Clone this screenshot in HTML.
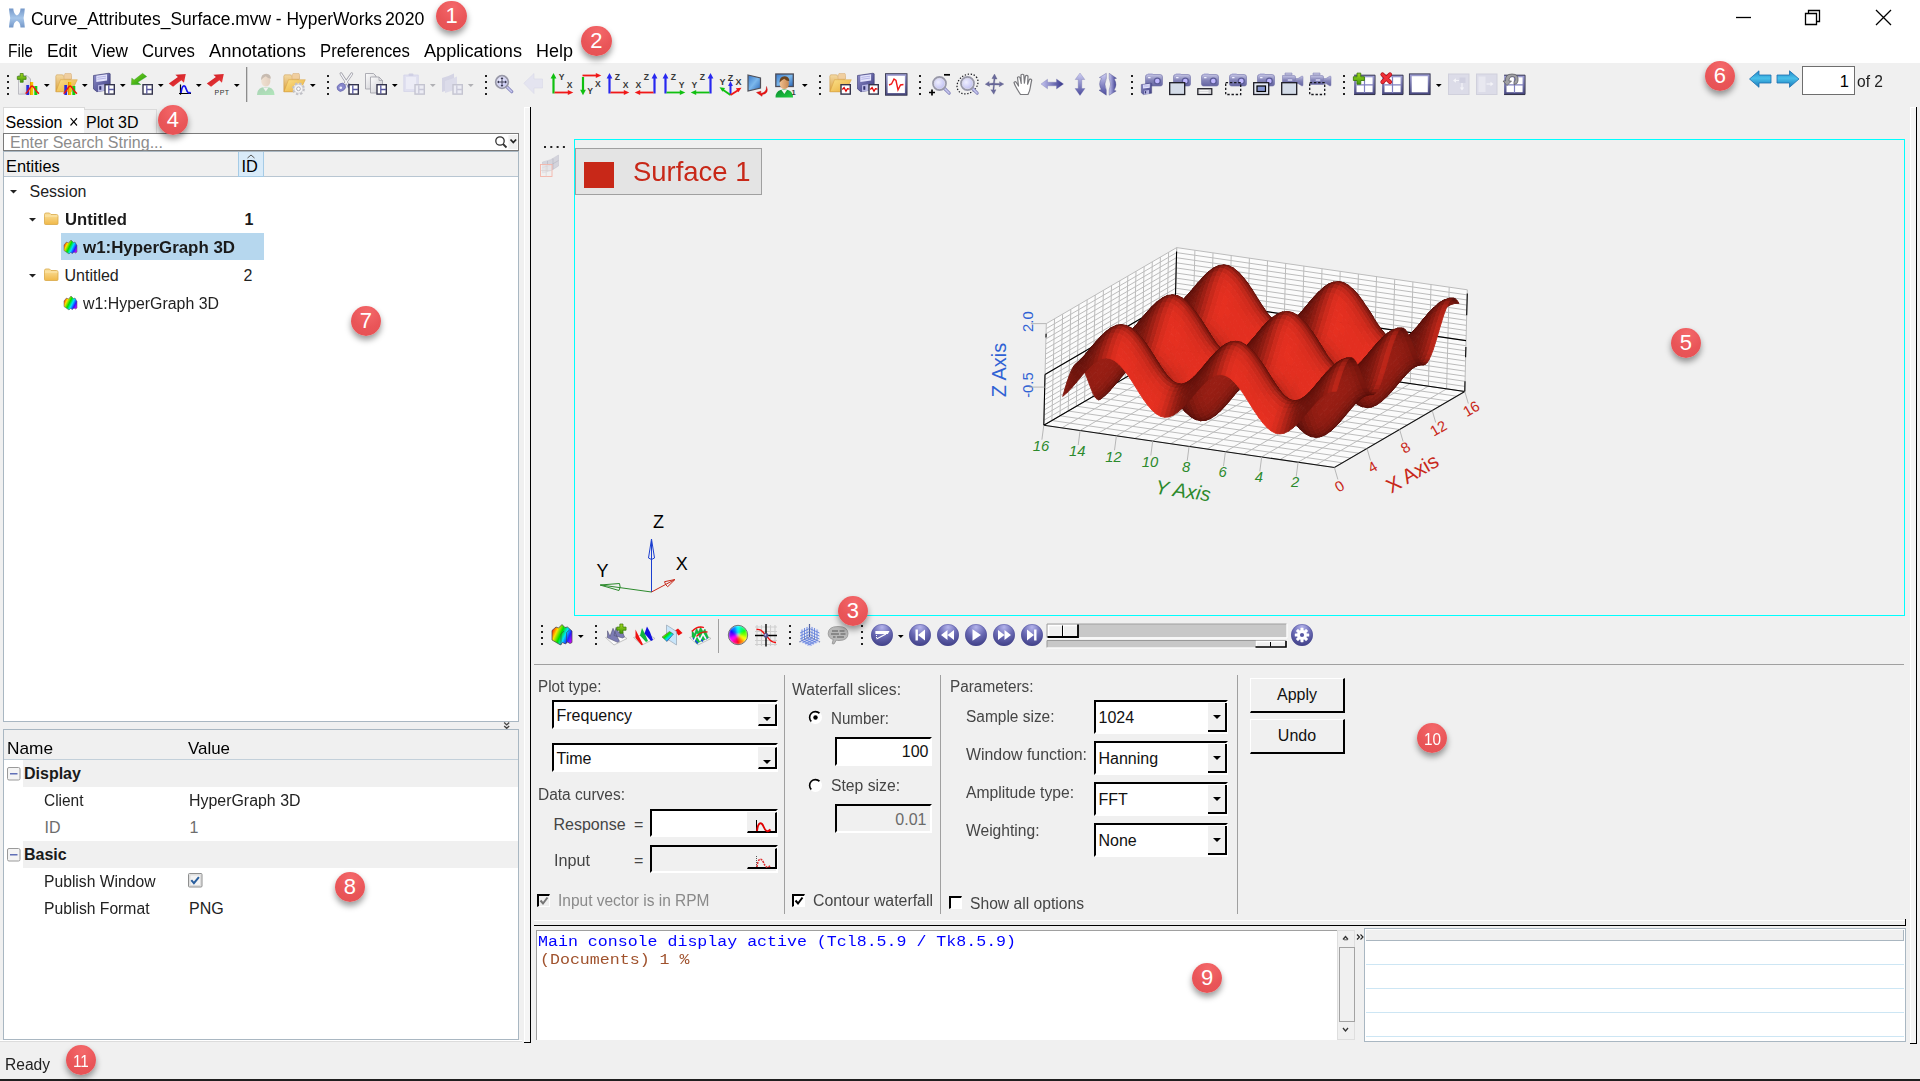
<!DOCTYPE html>
<html><head><meta charset="utf-8"><title>HyperWorks 2020</title>
<style>
html,body{margin:0;padding:0}
body{width:1920px;height:1081px;position:relative;overflow:hidden;background:#f0f0f0;font-family:"Liberation Sans",sans-serif;color:#000}
.t{position:absolute;white-space:pre;transform-origin:0 50%;}
.r{position:absolute;box-sizing:border-box}
svg{position:absolute;overflow:visible}
.badge{position:absolute;width:30.4px;height:30.4px;border-radius:50%;background:radial-gradient(circle at 55% 20%,#f4686a 0%,#e95558 55%,#e65053 100%);box-shadow:0 4px 6px rgba(0,0,0,.4);color:#fff;text-align:center;font-size:22px;line-height:30.4px}
.badge span{display:inline-block}
.sunk{position:absolute;box-sizing:border-box;border:2px solid;border-color:#000 #fff #fff #000;background:#fff}
.rais{position:absolute;box-sizing:border-box;border:1px solid;border-color:#fff #000 #000 #fff;background:#f0f0f0}
</style></head>
<body>
<div class="r" style="left:0px;top:0px;width:1920px;height:63px;background:#fff"></div>
<span class="t" style="left:31.00px;top:10.26px;font-size:18px;line-height:18px;transform:scaleX(0.9675)">Curve_Attributes_Surface.mvw - HyperWorks</span>
<span class="t" style="left:385.00px;top:10.26px;font-size:18px;line-height:18px;transform:scaleX(0.9864)">2020</span>
<span class="t" style="left:8.00px;top:43.00px;font-size:17.6px;line-height:17.6px;transform:scaleX(0.8815)">File</span>
<span class="t" style="left:47.00px;top:43.00px;font-size:17.6px;line-height:17.6px;transform:scaleX(0.9892)">Edit</span>
<span class="t" style="left:91.00px;top:43.00px;font-size:17.6px;line-height:17.6px;transform:scaleX(0.9780)">View</span>
<span class="t" style="left:142.00px;top:43.00px;font-size:17.6px;line-height:17.6px;transform:scaleX(0.9507)">Curves</span>
<span class="t" style="left:209.00px;top:43.00px;font-size:17.6px;line-height:17.6px;transform:scaleX(1.0434)">Annotations</span>
<span class="t" style="left:320.00px;top:43.00px;font-size:17.6px;line-height:17.6px;transform:scaleX(0.9484)">Preferences</span>
<span class="t" style="left:424.00px;top:43.00px;font-size:17.6px;line-height:17.6px;transform:scaleX(1.0326)">Applications</span>
<span class="t" style="left:536.00px;top:43.00px;font-size:17.6px;line-height:17.6px;transform:scaleX(1.0221)">Help</span>
<svg style="left:5px;top:5px" width="24" height="26" viewBox="5 5 24 26"><defs><linearGradient id="hl" x1="0" y1="0" x2="0" y2="1"><stop offset="0" stop-color="#7497c8"/><stop offset=".5" stop-color="#a6c6ea"/><stop offset="1" stop-color="#7497c8"/></linearGradient><filter id="hb" x="-20%" y="-20%" width="140%" height="140%"><feGaussianBlur stdDeviation=".55"/></filter></defs><path filter="url(#hb)" d="M9 8.600h4.300q.3 5.500 3.600 6.800 3.300-1.300 3.600-6.800h4.300q-.4 5.200-1.200 9.400.8 4.300 1.200 9.500h-4.300q-.3-5.500-3.600-6.800-3.300 1.300-3.600 6.800h-4.300q.4-5.200 1.200-9.500-.8-4.200-1.200-9.400z" fill="url(#hl)"/></svg>
<svg style="left:1730px;top:5px" width="170" height="26" viewBox="1730 5 170 26"><g fill="none" stroke="#000" stroke-width="1.3"><path d="M1736 17.5H1751"/><path d="M1805.5 13.5H1816.5V24.5H1805.5Z"/><path d="M1808.5 13.5V10.5H1819.5V21.5H1816.5"/><path d="M1876 10L1891 25M1891 10L1876 25"/></g></svg>
<div class="r" style="left:3px;top:107px;width:82px;height:27px;background:#fff;border:1px solid #dadada;border-bottom:none"></div>
<div class="r" style="left:84px;top:109px;width:73px;height:24px;background:#f0f0f0;border:1px solid #dadada;border-left:none;border-bottom:none"></div>
<span class="t" style="left:5.50px;top:114.66px;font-size:16px;line-height:16px">Session</span>
<span class="t" style="left:68.50px;top:113.26px;font-size:18px;line-height:18px;transform:scaleX(0.9038)">×</span>
<span class="t" style="left:86.00px;top:114.66px;font-size:16px;line-height:16px">Plot 3D</span>
<div class="r" style="left:3px;top:133px;width:516px;height:18px;background:#fff;border:1px solid #7a7a7a"></div>
<span class="t" style="left:10.00px;top:134.96px;font-size:16px;line-height:16px;color:#8c8c8c">Enter Search String...</span>
<svg style="left:494px;top:135px" width="24" height="14" viewBox="0 0 24 14"><rect x="14.5" y="0" width="9" height="14" fill="#f0f0f0"/><circle cx="6" cy="6" r="4.2" fill="none" stroke="#333" stroke-width="1.3"/><path d="M9 9l3.5 3.5" stroke="#333" stroke-width="1.8"/><path d="M16.5 4.5l2.8 3 2.8-3" fill="none" stroke="#222" stroke-width="1.8"/></svg>
<div class="r" style="left:3px;top:151px;width:516px;height:571px;background:#fff;border:1px solid #a9b7c2"></div>
<div class="r" style="left:4px;top:152px;width:514px;height:25px;background:#f0f0f0;border-bottom:1px solid #b8c6d2"></div>
<div class="r" style="left:238px;top:152px;width:26px;height:25px;background:#d9ebf9;border:1px solid #a5cbe6;border-top:none"></div>
<span class="t" style="left:6.00px;top:158.32px;font-size:16.4px;line-height:16.4px">Entities</span>
<span class="t" style="left:241.50px;top:158.32px;font-size:16.4px;line-height:16.4px">ID</span>
<svg style="left:246px;top:154px" width="10" height="5"><path d="M1.5 4L5 1L8.5 4" fill="none" stroke="#555" stroke-width="1"/></svg>
<svg style="left:9.5px;top:189.5px" width="7" height="4"><path d="M0 0H7L3.5 3.6Z" fill="#222"/></svg>
<span class="t" style="left:29.50px;top:183.66px;font-size:16px;line-height:16px;color:#222">Session</span>
<svg style="left:28.5px;top:217.5px" width="7" height="4"><path d="M0 0H7L3.5 3.6Z" fill="#222"/></svg>
<span class="t" style="left:65.00px;top:211.56px;font-size:16px;line-height:16px;color:#1a1a1a;font-weight:bold;transform:scaleX(1.0412)">Untitled</span>
<span class="t" style="left:244.50px;top:211.56px;font-size:16px;line-height:16px;color:#1a1a1a;font-weight:bold">1</span>
<div class="r" style="left:61px;top:233px;width:203px;height:27px;background:#b6d7ee"></div>
<span class="t" style="left:83.00px;top:239.56px;font-size:16px;line-height:16px;color:#1a1a1a;font-weight:bold;transform:scaleX(1.0553)">w1:HyperGraph 3D</span>
<svg style="left:28.5px;top:273.5px" width="7" height="4"><path d="M0 0H7L3.5 3.6Z" fill="#222"/></svg>
<span class="t" style="left:64.50px;top:267.66px;font-size:16px;line-height:16px;color:#222">Untitled</span>
<span class="t" style="left:243.50px;top:267.66px;font-size:16px;line-height:16px;color:#222">2</span>
<span class="t" style="left:83.00px;top:295.66px;font-size:16px;line-height:16px;color:#222;transform:scaleX(0.9931)">w1:HyperGraph 3D</span>
<svg style="left:0;top:0" width="600" height="400" viewBox="0 0 600 400"><defs><linearGradient id="gTF" x1="0" y1="0" x2="0" y2="1"><stop offset="0" stop-color="#fbe2a0"/><stop offset="1" stop-color="#f0b848"/></linearGradient><linearGradient id="gRain3" gradientUnits="userSpaceOnUse" x1="0" y1="4" x2="14" y2="11"><stop offset="0" stop-color="#ff0000"/><stop offset=".22" stop-color="#ffe000"/><stop offset=".42" stop-color="#00e000"/><stop offset=".6" stop-color="#00e0ff"/><stop offset=".78" stop-color="#2020ff"/><stop offset="1" stop-color="#ff00ff"/></linearGradient></defs><g transform="translate(44 212.5)"><path d="M.5 2q0-1.500 1.500-1.500h3.500l1.500 1.500h5.500q1.500 0 1.500 1.500v7.500q0 1-1 1h-11.500q-1 0-1-1z" fill="url(#gTF)" stroke="#d8a848" stroke-width=".8"/><path d="M.8 3.500h12.800" stroke="#fbe7b0" stroke-width="1"/></g><g transform="translate(44 268.5)"><path d="M.5 2q0-1.500 1.500-1.500h3.500l1.500 1.500h5.500q1.500 0 1.500 1.500v7.500q0 1-1 1h-11.500q-1 0-1-1z" fill="url(#gTF)" stroke="#d8a848" stroke-width=".8"/><path d="M.8 3.500h12.800" stroke="#fbe7b0" stroke-width="1"/></g><g transform="translate(63.5 240)"><path d="M.5 5l2.500-3 2 1 2.500-3 2.500 2.500 1.500-.5 2 3.500v6.500l-1.500 1-1.500-1-1.500 1.500-2-1-1.500 1.500-5-3.500z" fill="url(#gRain3)" stroke="#505058" stroke-width=".5"/></g><g transform="translate(63.5 296)"><path d="M.5 5l2.500-3 2 1 2.500-3 2.500 2.500 1.500-.5 2 3.500v6.500l-1.500 1-1.500-1-1.500 1.500-2-1-1.500 1.500-5-3.500z" fill="url(#gRain3)" stroke="#505058" stroke-width=".5"/></g></svg>
<svg style="left:503px;top:721px" width="8" height="9"><path d="M1.200 1.600l2.500 2.300 2.500-2.300M1.200 4.900l2.500 2.300 2.500-2.300" fill="none" stroke="#444" stroke-width="1.400"/></svg>
<div class="r" style="left:3px;top:729px;width:516px;height:311px;background:#fff;border:1px solid #a9b7c2"></div>
<div class="r" style="left:0px;top:1040px;width:522px;height:1px;background:#fff"></div>
<div class="r" style="left:0px;top:1041px;width:522px;height:1px;background:#dcdcdc"></div>
<div class="r" style="left:4px;top:730px;width:514px;height:30px;background:#f0f0f0;border-bottom:1px solid #c3d0da"></div>
<span class="t" style="left:6.50px;top:740.21px;font-size:17px;line-height:17px;transform:scaleX(1.0144)">Name</span>
<span class="t" style="left:187.50px;top:740.21px;font-size:17px;line-height:17px;transform:scaleX(0.9948)">Value</span>
<div class="r" style="left:23px;top:760px;width:495px;height:27px;background:#f0f0f0"></div>
<div class="r" style="left:23px;top:841px;width:495px;height:27px;background:#f0f0f0"></div>
<svg style="left:7px;top:766.5px" width="14" height="14"><rect x="0.5" y="0.5" width="12.5" height="12.5" rx="1.5" fill="#f4f4f4" stroke="#9a9a9a"/><path d="M3 6.800H10.500" stroke="#3c4fa8" stroke-width="1.200"/></svg>
<svg style="left:7px;top:847.5px" width="14" height="14"><rect x="0.5" y="0.5" width="12.5" height="12.5" rx="1.5" fill="#f4f4f4" stroke="#9a9a9a"/><path d="M3 6.800H10.500" stroke="#3c4fa8" stroke-width="1.200"/></svg>
<span class="t" style="left:24.00px;top:765.76px;font-size:16px;line-height:16px;color:#1a1a1a;font-weight:bold">Display</span>
<span class="t" style="left:44.00px;top:793.16px;font-size:16px;line-height:16px;color:#222;transform:scaleX(0.9656)">Client</span>
<span class="t" style="left:189.00px;top:793.16px;font-size:16px;line-height:16px;color:#222;transform:scaleX(0.9951)">HyperGraph 3D</span>
<span class="t" style="left:44.50px;top:819.96px;font-size:16px;line-height:16px;color:#6d6d6d">ID</span>
<span class="t" style="left:189.50px;top:819.96px;font-size:16px;line-height:16px;color:#6d6d6d">1</span>
<span class="t" style="left:24.00px;top:846.96px;font-size:16px;line-height:16px;color:#1a1a1a;font-weight:bold">Basic</span>
<span class="t" style="left:44.00px;top:874.06px;font-size:16px;line-height:16px;color:#222;transform:scaleX(0.9795)">Publish Window</span>
<span class="t" style="left:44.00px;top:900.96px;font-size:16px;line-height:16px;color:#222;transform:scaleX(0.9805)">Publish Format</span>
<span class="t" style="left:189.00px;top:900.96px;font-size:16px;line-height:16px;color:#222">PNG</span>
<svg style="left:188px;top:873px" width="15" height="15"><rect x="0.5" y="0.5" width="13.5" height="13.5" rx="1" fill="#e6e6e6" stroke="#8e8f8f"/><rect x="2" y="2" width="10.5" height="10.5" fill="#f3f3f3" stroke="#d0d0d0" stroke-width=".6"/><path d="M3.3 7.2l2.6 2.9 5-6" fill="none" stroke="#2a5f9e" stroke-width="2"/></svg>
<span class="t" style="left:5.00px;top:1056.76px;font-size:16px;line-height:16px;color:#222;transform:scaleX(0.9729)">Ready</span>
<div class="r" style="left:0px;top:1079px;width:1920px;height:2px;background:#1f1f1f"></div>
<div class="r" style="left:524px;top:107px;width:6px;height:935px;background:#f5f5f5;border-left:1px solid #fff;border-top:1px solid #fff"></div>
<div class="r" style="left:530px;top:107px;width:1px;height:936px;background:#000"></div>
<div class="r" style="left:524px;top:1042px;width:7px;height:1px;background:#000"></div>
<div class="r" style="left:1910px;top:107px;width:6px;height:936px;background:#f5f5f5;border-left:1px solid #fff;border-top:1px solid #fff"></div>
<div class="r" style="left:1916px;top:107px;width:1px;height:937px;background:#000"></div>
<div class="r" style="left:1910px;top:1043px;width:7px;height:1px;background:#000"></div>
<div class="r" style="left:574px;top:139px;width:1331px;height:477px;border:1px solid #00ffff"></div>
<div class="r" style="left:575px;top:148px;width:187px;height:47px;background:#e4e4e4;border:1px solid #a0a0a0"></div>
<div class="r" style="left:584px;top:162px;width:29.5px;height:26px;background:#c82818"></div>
<span class="t" style="left:632.50px;top:158.00px;font-size:28px;line-height:28px;color:#c82818;transform:scaleX(0.9804)">Surface 1</span>
<svg style="left:0;top:0" width="1920" height="1081" viewBox="0 0 1920 1081">
<path d="M1334.4 467.5L1464.8 391.5L1174.1 349.2L1043.8 425.2Z" fill="#fbfbfb"/>
<path d="M1043.8 425.2L1174.1 349.2L1176.7 247.6L1046.3 323.6Z" fill="#fbfbfb"/>
<path d="M1464.8 391.5L1174.1 349.2L1176.7 247.6L1467.3 289.8Z" fill="#fbfbfb"/>
<path d="M1334.4 467.5L1043.8 425.2L1046.3 323.6M1334.4 467.5L1464.8 391.5L1467.3 289.8M1342.5 462.8L1051.9 420.5L1054.5 318.8M1316.2 464.9L1446.6 388.9L1449.2 287.2M1350.7 458.0L1060.0 415.8L1062.6 314.1M1298.1 462.2L1428.4 386.2L1431.0 284.5M1358.8 453.2L1068.2 411.0L1070.8 309.3M1279.9 459.6L1410.3 383.6L1412.9 281.9M1367.0 448.5L1076.3 406.2L1078.9 304.6M1261.7 456.9L1392.1 380.9L1394.7 279.2M1375.1 443.8L1084.5 401.5L1087.1 299.8M1243.6 454.3L1373.9 378.3L1376.5 276.6M1383.3 439.0L1092.6 396.8L1095.2 295.1M1225.4 451.7L1355.8 375.7L1358.4 274.0M1391.4 434.2L1100.8 392.0L1103.4 290.3M1207.2 449.0L1337.6 373.0L1340.2 271.3M1399.6 429.5L1108.9 387.2L1111.5 285.6M1189.1 446.4L1319.4 370.4L1322.0 268.7M1407.7 424.8L1117.1 382.5L1119.7 280.8M1170.9 443.7L1301.3 367.7L1303.9 266.0M1415.9 420.0L1125.2 377.8L1127.8 276.1M1152.7 441.1L1283.1 365.1L1285.7 263.4M1424.0 415.2L1133.4 373.0L1136.0 271.3M1134.6 438.5L1264.9 362.5L1267.5 260.8M1432.2 410.5L1141.5 368.2L1144.1 266.6M1116.4 435.8L1246.8 359.8L1249.4 258.1M1440.3 405.8L1149.7 363.5L1152.3 261.8M1098.2 433.2L1228.6 357.2L1231.2 255.5M1448.5 401.0L1157.8 358.8L1160.4 257.1M1080.1 430.5L1210.4 354.5L1213.0 252.8M1456.6 396.2L1166.0 354.0L1168.6 252.3M1061.9 427.9L1192.3 351.9L1194.9 250.2M1464.8 391.5L1174.1 349.2L1176.7 247.6M1043.8 425.2L1174.1 349.2L1176.7 247.6M1043.8 425.2L1174.1 349.2L1464.8 391.5M1043.9 420.2L1174.2 344.2L1464.9 386.4M1044.0 415.1L1174.4 339.1L1465.0 381.3M1044.1 410.0L1174.5 334.0L1465.1 376.2M1044.3 404.9L1174.6 328.9L1465.3 371.2M1044.4 399.8L1174.8 323.8L1465.4 366.1M1044.5 394.7L1174.9 318.7L1465.5 361.0M1044.7 389.7L1175.0 313.7L1465.7 355.9M1044.8 384.6L1175.1 308.6L1465.8 350.8M1044.9 379.5L1175.3 303.5L1465.9 345.7M1045.0 374.4L1175.4 298.4L1466.0 340.6M1045.2 369.3L1175.5 293.3L1466.2 335.6M1045.3 364.2L1175.7 288.2L1466.3 330.5M1045.4 359.1L1175.8 283.1L1466.4 325.4M1045.6 354.1L1175.9 278.1L1466.6 320.3M1045.7 349.0L1176.0 273.0L1466.7 315.2M1045.8 343.9L1176.2 267.9L1466.8 310.1M1046.0 338.8L1176.3 262.8L1467.0 305.1M1046.1 333.7L1176.4 257.7L1467.1 300.0M1046.2 328.6L1176.6 252.6L1467.2 294.9M1046.3 323.6L1176.7 247.6L1467.3 289.8" fill="none" stroke="#bcbcbc" stroke-width="1"/>
<path d="M1043.8 425.2L1174.1 349.2L1464.8 391.5M1045.0 374.4L1175.4 298.4L1466.0 340.6M1174.1 349.2L1176.6 251.4M1043.8 425.2L1045.0 374.4M1046.0 337.5L1046.1 333.7M1466.7 315.2L1467.3 293.6M1465.6 357.2L1465.9 347.0M1464.8 391.5L1465.0 381.3" fill="none" stroke="#000" stroke-width="1.1"/>
<g stroke-width=".9" stroke-linejoin="round">
<path fill="#580f09" stroke="#580f09" d="M1184.8 298.1l1.9-2.2-4.4 4.6-1.9 2.2zM1189.2 293.0l1.9-2.2-4.4 5.1-1.9 2.2z"/>
<path fill="#5d100a" stroke="#5d100a" d="M1182.8 301.7l2.0-3.6-4.4 4.6-2.0 3.6z"/>
<path fill="#5b100a" stroke="#5b100a" d="M1187.2 296.6l2.0-3.6-4.4 5.1-2.0 3.6z"/>
<path fill="#63110b" stroke="#63110b" d="M1185.2 301.4l2.0-4.8-4.4 5.1-2.0 4.8z"/>
<path fill="#5a0f09" stroke="#5a0f09" d="M1191.6 291.3l2.0-3.6-4.4 5.3-2.0 3.6z"/>
<path fill="#60110a" stroke="#60110a" d="M1189.6 296.0l2.0-4.7-4.4 5.3-2.0 4.8z"/>
<path fill="#5a1009" stroke="#5a1009" d="M1196.0 286.1l2.0-3.6-4.4 5.2-2.0 3.6z"/>
<path fill="#68130c" stroke="#68130c" d="M1187.6 301.8l2.0-5.8-4.4 5.4-2.0 5.7z"/>
<path fill="#590f09" stroke="#590f09" d="M1206.7 273.6l2.0-2.2-4.4 4.1-1.9 2.2z"/>
<path fill="#61110b" stroke="#61110b" d="M1194.0 290.8l2.0-4.7-4.4 5.2-2.0 4.7z"/>
<path fill="#5c100a" stroke="#5c100a" d="M1200.4 281.3l2.0-3.6-4.4 4.8-2.0 3.6z"/>
<path fill="#60110a" stroke="#60110a" d="M1242.2 276.4l1.9 1.8-4.2-4.6-1.8-1.8z"/>
<path fill="#64120b" stroke="#64120b" d="M1246.4 281.9l1.8 1.8-4.1-5.5-1.9-1.8z"/>
<path fill="#66120b" stroke="#66120b" d="M1250.5 288.0l1.8 1.8-4.1-6.1-1.8-1.8z"/>
<path fill="#68130c" stroke="#68130c" d="M1254.6 294.6l1.8 1.7-4.1-6.5-1.8-1.8z"/>
<path fill="#5a1009" stroke="#5a1009" d="M1227.8 265.7l1.9 .5-4.3-.8-1.8-.5z"/>
<path fill="#68130c" stroke="#68130c" d="M1258.7 301.1l1.8 1.8-4.1-6.6-1.8-1.7z"/>
<path fill="#590f09" stroke="#590f09" d="M1217.4 266.4l1.9-.9-4.4 1.9-1.9 .9z"/>
<path fill="#66120b" stroke="#66120b" d="M1262.8 307.3l1.8 1.8-4.1-6.2-1.8-1.8z"/>
<path fill="#64120b" stroke="#64120b" d="M1266.9 313.0l1.9 1.8-4.2-5.7-1.8-1.8z"/>
<path fill="#60110a" stroke="#60110a" d="M1271.1 317.7l1.8 1.8-4.1-4.7-1.9-1.8z"/>
<path fill="#5c100a" stroke="#5c100a" d="M1211.1 270.5l1.9-2.2-4.3 3.1-2.0 2.2z"/>
<path fill="#63110b" stroke="#63110b" d="M1232.0 267.8l1.9 .5-4.2-2.1-1.9-.5z"/>
<path fill="#69130c" stroke="#69130c" d="M1192.0 296.6l2.0-5.8-4.4 5.2-2.0 5.8z"/>
<path fill="#60110a" stroke="#60110a" d="M1204.8 277.2l1.9-3.6-4.3 4.1-2.0 3.6z"/>
<path fill="#64120b" stroke="#64120b" d="M1198.4 286.0l2.0-4.7-4.4 4.8-2.0 4.7z"/>
<path fill="#5f110a" stroke="#5f110a" d="M1221.7 265.8l1.9-.9-4.3 .6-1.9 .9z"/>
<path fill="#6a130c" stroke="#6a130c" d="M1236.2 271.3l1.9 .5-4.2-3.5-1.9-.5z"/>
<path fill="#71150d" stroke="#71150d" d="M1240.4 275.9l1.8 .5-4.1-4.6-1.9-.5z"/>
<path fill="#65120b" stroke="#65120b" d="M1215.4 268.6l2.0-2.2-4.4 1.9-1.9 2.2z"/>
<path fill="#76160e" stroke="#76160e" d="M1244.5 281.4l1.9 .5-4.2-5.5-1.8-.5z"/>
<path fill="#6d140d" stroke="#6d140d" d="M1189.9 303.1l2.1-6.5-4.4 5.2-2.1 6.5zM1225.9 266.5l1.9-.8-4.2-.8-1.9 .9z"/>
<path fill="#78160e" stroke="#78160e" d="M1248.6 287.5l1.9 .5-4.1-6.1-1.9-.5z"/>
<path fill="#79170e" stroke="#79170e" d="M1252.7 294.0l1.9 .6-4.1-6.6-1.9-.5zM1256.8 300.6l1.9 .5-4.1-6.5-1.9-.6z"/>
<path fill="#6c140c" stroke="#6c140c" d="M1196.4 291.8l2.0-5.8-4.4 4.8-2.0 5.8z"/>
<path fill="#68130c" stroke="#68130c" d="M1209.1 274.1l2.0-3.6-4.4 3.1-1.9 3.6z"/>
<path fill="#78160e" stroke="#78160e" d="M1260.9 306.8l1.9 .5-4.1-6.2-1.9-.5z"/>
<path fill="#6a130c" stroke="#6a130c" d="M1202.8 282.0l2.0-4.8-4.4 4.1-2.0 4.7z"/>
<path fill="#76160e" stroke="#76160e" d="M1265.1 312.5l1.8 .5-4.1-5.7-1.9-.5z"/>
<path fill="#72150d" stroke="#72150d" d="M1269.2 317.2l1.9 .5-4.2-4.7-1.8-.5z"/>
<path fill="#7d180f" stroke="#7d180f" d="M1230.1 268.7l1.9-.9-4.2-2.1-1.9 .8z"/>
<path fill="#76160e" stroke="#76160e" d="M1219.7 268.0l2.0-2.2-4.3 .6-2.0 2.2z"/>
<path fill="#6c140c" stroke="#6c140c" d="M1273.4 320.9l1.9 .5-4.2-3.7-1.9-.5z"/>
<path fill="#71150d" stroke="#71150d" d="M1187.9 310.0l2.0-6.9-4.4 5.2-2.0 6.9z"/>
<path fill="#881a11" stroke="#881a11" d="M1234.3 272.1l1.9-.8-4.2-3.5-1.9 .9z"/>
<path fill="#72150d" stroke="#72150d" d="M1194.3 298.3l2.1-6.5-4.4 4.8-2.1 6.5z"/>
<path fill="#78160e" stroke="#78160e" d="M1213.5 272.2l1.9-3.6-4.3 1.9-2.0 3.6z"/>
<path fill="#8c1b12" stroke="#8c1b12" d="M1238.5 276.7l1.9-.8-4.2-4.6-1.9 .8z"/>
<path fill="#72150d" stroke="#72150d" d="M1200.7 287.7l2.1-5.7-4.4 4.0-2.0 5.8z"/>
<path fill="#76160e" stroke="#76160e" d="M1207.1 278.9l2.0-4.8-4.3 3.1-2.0 4.8z"/>
<path fill="#8e1c12" stroke="#8e1c12" d="M1224.0 268.8l1.9-2.3-4.2-.7-2.0 2.2zM1242.6 282.2l1.9-.8-4.1-5.5-1.9 .8z"/>
<path fill="#911c12" stroke="#911c12" d="M1246.7 288.4l1.9-.9-4.1-6.1-1.9 .8zM1250.8 294.9l1.9-.9-4.1-6.5-1.9 .9zM1254.9 301.4l1.9-.8-4.1-6.6-1.9 .9zM1259.0 307.7l1.9-.9-4.1-6.2-1.9 .8z"/>
<path fill="#8e1c12" stroke="#8e1c12" d="M1263.2 313.3l1.9-.8-4.2-5.7-1.9 .9z"/>
<path fill="#a22015" stroke="#a22015" d="M1228.2 270.9l1.9-2.2-4.2-2.2-1.9 2.3z"/>
<path fill="#8e1c12" stroke="#8e1c12" d="M1217.7 271.6l2.0-3.6-4.3 .6-1.9 3.6zM1267.3 318.1l1.9-.9-4.1-4.7-1.9 .8z"/>
<path fill="#76160e" stroke="#76160e" d="M1192.3 305.2l2.0-6.9-4.4 4.8-2.0 6.9z"/>
<path fill="#79170e" stroke="#79170e" d="M1198.7 294.2l2.0-6.5-4.3 4.1-2.1 6.5z"/>
<path fill="#881a11" stroke="#881a11" d="M1211.5 276.9l2.0-4.7-4.4 1.9-2.0 4.8z"/>
<path fill="#8a1b11" stroke="#8a1b11" d="M1271.5 321.7l1.9-.8-4.2-3.7-1.9 .9z"/>
<path fill="#ab2217" stroke="#ab2217" d="M1232.4 274.4l1.9-2.3-4.2-3.4-1.9 2.2z"/>
<path fill="#7f180f" stroke="#7f180f" d="M1205.1 284.6l2.0-5.7-4.3 3.1-2.1 5.7z"/>
<path fill="#ad2317" stroke="#ad2317" d="M1236.5 279.0l2.0-2.3-4.2-4.6-1.9 2.3z"/>
<path fill="#ab2217" stroke="#ab2217" d="M1222.0 272.4l2.0-3.6-4.3-.8-2.0 3.6z"/>
<path fill="#ad2317" stroke="#ad2317" d="M1240.7 284.5l1.9-2.3-4.1-5.5-2.0 2.3z"/>
<path fill="#76160e" stroke="#76160e" d="M1190.2 312.3l2.1-7.1-4.4 4.8-2.1 7.1z"/>
<path fill="#ab2217" stroke="#ab2217" d="M1244.8 290.6l1.9-2.2-4.1-6.2-1.9 2.3zM1248.9 297.1l1.9-2.2-4.1-6.5-1.9 2.2zM1253.0 303.7l1.9-2.3-4.1-6.5-1.9 2.2z"/>
<path fill="#a02015" stroke="#a02015" d="M1215.7 276.3l2.0-4.7-4.2 .6-2.0 4.7z"/>
<path fill="#ab2217" stroke="#ab2217" d="M1257.1 309.9l1.9-2.2-4.1-6.3-1.9 2.3z"/>
<path fill="#7d180f" stroke="#7d180f" d="M1196.6 301.1l2.1-6.9-4.4 4.1-2.0 6.9z"/>
<path fill="#bf271a" stroke="#bf271a" d="M1226.2 274.5l2.0-3.6-4.2-2.1-2.0 3.6z"/>
<path fill="#ad2317" stroke="#ad2317" d="M1261.2 315.6l2.0-2.3-4.2-5.6-1.9 2.2z"/>
<path fill="#911c12" stroke="#911c12" d="M1209.4 282.7l2.1-5.8-4.4 2.0-2.0 5.7z"/>
<path fill="#861a10" stroke="#861a10" d="M1203.1 291.1l2.0-6.5-4.4 3.1-2.0 6.5z"/>
<path fill="#ad2317" stroke="#ad2317" d="M1265.4 320.3l1.9-2.2-4.1-4.8-2.0 2.3z"/>
<path fill="#c5281b" stroke="#c5281b" d="M1230.4 278.0l2.0-3.6-4.2-3.5-2.0 3.6z"/>
<path fill="#ab2217" stroke="#ab2217" d="M1269.6 324.0l1.9-2.3-4.2-3.6-1.9 2.2z"/>
<path fill="#b92619" stroke="#b92619" d="M1220.0 277.1l2.0-4.7-4.3-.8-2.0 4.7z"/>
<path fill="#c5281b" stroke="#c5281b" d="M1234.6 282.5l1.9-3.5-4.1-4.6-2.0 3.6z"/>
<path fill="#7d180f" stroke="#7d180f" d="M1194.6 308.2l2.0-7.1-4.3 4.1-2.1 7.1z"/>
<path fill="#c5281b" stroke="#c5281b" d="M1238.7 288.1l2.0-3.6-4.2-5.5-1.9 3.5z"/>
<path fill="#ab2217" stroke="#ab2217" d="M1213.7 282.1l2.0-5.8-4.2 .6-2.1 5.8z"/>
<path fill="#8a1b11" stroke="#8a1b11" d="M1201.0 298.0l2.1-6.9-4.4 3.1-2.1 6.9z"/>
<path fill="#c2281a" stroke="#c2281a" d="M1242.8 294.2l2.0-3.6-4.1-6.1-2.0 3.6z"/>
<path fill="#981e14" stroke="#981e14" d="M1207.4 289.2l2.0-6.5-4.3 1.9-2.0 6.5z"/>
<path fill="#c2281a" stroke="#c2281a" d="M1246.9 300.7l2.0-3.6-4.1-6.5-2.0 3.6z"/>
<path fill="#cf2b1d" stroke="#cf2b1d" d="M1224.2 279.3l2.0-4.8-4.2-2.1-2.0 4.7z"/>
<path fill="#c2281a" stroke="#c2281a" d="M1251.0 307.3l2.0-3.6-4.1-6.6-2.0 3.6zM1255.1 313.5l2.0-3.6-4.1-6.2-2.0 3.6z"/>
<path fill="#c5281b" stroke="#c5281b" d="M1259.3 319.1l1.9-3.5-4.1-5.7-2.0 3.6zM1263.4 323.9l2.0-3.6-4.2-4.7-1.9 3.5z"/>
<path fill="#d52c1e" stroke="#d52c1e" d="M1228.4 282.7l2.0-4.7-4.2-3.5-2.0 4.8z"/>
<path fill="#c2281a" stroke="#c2281a" d="M1218.0 282.9l2.0-5.8-4.3-.8-2.0 5.8z"/>
<path fill="#7d180f" stroke="#7d180f" d="M1192.5 315.0l2.1-6.8-4.4 4.1-2.1 6.8z"/>
<path fill="#c5281b" stroke="#c5281b" d="M1267.6 327.5l2.0-3.5-4.2-3.7-2.0 3.6z"/>
<path fill="#d52c1e" stroke="#d52c1e" d="M1232.6 287.3l2.0-4.8-4.2-4.5-2.0 4.7z"/>
<path fill="#8a1b11" stroke="#8a1b11" d="M1198.9 305.1l2.1-7.1-4.4 3.1-2.0 7.1z"/>
<path fill="#b02418" stroke="#b02418" d="M1211.7 288.6l2.0-6.5-4.3 .6-2.0 6.5z"/>
<path fill="#9d1f14" stroke="#9d1f14" d="M1205.3 296.1l2.1-6.9-4.3 1.9-2.1 6.9z"/>
<path fill="#d52c1e" stroke="#d52c1e" d="M1236.7 292.8l2.0-4.7-4.1-5.6-2.0 4.8z"/>
<path fill="#d22b1d" stroke="#d22b1d" d="M1240.8 299.0l2.0-4.8-4.1-6.1-2.0 4.7z"/>
<path fill="#d52c1e" stroke="#d52c1e" d="M1222.2 285.0l2.0-5.7-4.2-2.2-2.0 5.8z"/>
<path fill="#d22b1d" stroke="#d22b1d" d="M1244.9 305.5l2.0-4.8-4.1-6.5-2.0 4.8zM1249.0 312.0l2.0-4.7-4.1-6.6-2.0 4.8zM1253.1 318.3l2.0-4.8-4.1-6.2-2.0 4.7z"/>
<path fill="#d52c1e" stroke="#d52c1e" d="M1257.3 323.9l2.0-4.8-4.2-5.6-2.0 4.8z"/>
<path fill="#c8291b" stroke="#c8291b" d="M1215.9 289.4l2.1-6.5-4.3-.8-2.0 6.5z"/>
<path fill="#dc2e1f" stroke="#dc2e1f" d="M1226.4 288.5l2.0-5.8-4.2-3.4-2.0 5.7z"/>
<path fill="#d52c1e" stroke="#d52c1e" d="M1261.4 328.7l2.0-4.8-4.1-4.8-2.0 4.8z"/>
<path fill="#8a1b11" stroke="#8a1b11" d="M1196.9 311.9l2.0-6.8-4.3 3.1-2.1 6.8z"/>
<path fill="#b32418" stroke="#b32418" d="M1209.6 295.5l2.1-6.9-4.3 .6-2.1 6.9z"/>
<path fill="#9d1f14" stroke="#9d1f14" d="M1203.3 303.2l2.0-7.1-4.3 1.9-2.1 7.1z"/>
<path fill="#e02f1f" stroke="#e02f1f" d="M1230.5 293.1l2.1-5.8-4.2-4.6-2.0 5.8z"/>
<path fill="#d52c1e" stroke="#d52c1e" d="M1265.6 332.3l2.0-4.8-4.2-3.6-2.0 4.8z"/>
<path fill="#dc2e1f" stroke="#dc2e1f" d="M1234.7 298.6l2.0-5.8-4.1-5.5-2.1 5.8z"/>
<path fill="#d92d1e" stroke="#d92d1e" d="M1220.1 291.5l2.1-6.5-4.2-2.1-2.1 6.5z"/>
<path fill="#dc2e1f" stroke="#dc2e1f" d="M1238.8 304.7l2.0-5.7-4.1-6.2-2.0 5.8z"/>
<path fill="#d92d1e" stroke="#d92d1e" d="M1242.9 311.2l2.0-5.7-4.1-6.5-2.0 5.7zM1247.0 317.8l2.0-5.8-4.1-6.5-2.0 5.7z"/>
<path fill="#dc2e1f" stroke="#dc2e1f" d="M1251.1 324.0l2.0-5.7-4.1-6.3-2.0 5.8z"/>
<path fill="#c8291b" stroke="#c8291b" d="M1213.9 296.3l2.0-6.9-4.2-.8-2.1 6.9z"/>
<path fill="#dc2e1f" stroke="#dc2e1f" d="M1255.2 329.6l2.1-5.7-4.2-5.6-2.0 5.7z"/>
<path fill="#e02f1f" stroke="#e02f1f" d="M1224.3 295.0l2.1-6.5-4.2-3.5-2.1 6.5z"/>
<path fill="#b32418" stroke="#b32418" d="M1207.5 302.6l2.1-7.1-4.3 .6-2.0 7.1z"/>
<path fill="#861a10" stroke="#861a10" d="M1194.8 318.3l2.1-6.4-4.4 3.1-2.0 6.4z"/>
<path fill="#e02f1f" stroke="#e02f1f" d="M1259.4 334.4l2.0-5.7-4.1-4.8-2.1 5.7z"/>
<path fill="#9b1f14" stroke="#9b1f14" d="M1201.2 310.0l2.1-6.8-4.4 1.9-2.0 6.8z"/>
<path fill="#e32f20" stroke="#e32f20" d="M1228.5 299.5l2.0-6.4-4.1-4.6-2.1 6.5z"/>
<path fill="#d92d1e" stroke="#d92d1e" d="M1218.1 298.4l2.0-6.9-4.2-2.1-2.0 6.9z"/>
<path fill="#e32f20" stroke="#e32f20" d="M1232.6 305.1l2.1-6.5-4.2-5.5-2.0 6.4z"/>
<path fill="#e02f1f" stroke="#e02f1f" d="M1236.7 311.2l2.1-6.5-4.1-6.1-2.1 6.5zM1240.8 317.7l2.1-6.5-4.1-6.5-2.1 6.5zM1244.9 324.3l2.1-6.5-4.1-6.6-2.1 6.5z"/>
<path fill="#c8291b" stroke="#c8291b" d="M1211.8 303.3l2.1-7.0-4.3-.8-2.1 7.1z"/>
<path fill="#e02f1f" stroke="#e02f1f" d="M1249.1 330.5l2.0-6.5-4.1-6.2-2.1 6.5z"/>
<path fill="#e32f20" stroke="#e32f20" d="M1222.3 301.9l2.0-6.9-4.2-3.5-2.0 6.9zM1253.2 336.1l2.0-6.5-4.1-5.6-2.0 6.5z"/>
<path fill="#b32418" stroke="#b32418" d="M1205.5 309.4l2.0-6.8-4.2 .6-2.1 6.8z"/>
<path fill="#981e14" stroke="#981e14" d="M1199.2 316.4l2.0-6.4-4.3 1.9-2.1 6.4z"/>
<path fill="#e32f20" stroke="#e32f20" d="M1257.3 340.9l2.1-6.5-4.2-4.8-2.0 6.5z"/>
<path fill="#e63020" stroke="#e63020" d="M1226.4 306.5l2.1-7.0-4.2-4.5-2.0 6.9z"/>
<path fill="#d92d1e" stroke="#d92d1e" d="M1216.0 305.5l2.1-7.1-4.2-2.1-2.1 7.0z"/>
<path fill="#e32f20" stroke="#e32f20" d="M1230.6 312.0l2.0-6.9-4.1-5.6-2.1 7.0zM1234.7 318.1l2.0-6.9-4.1-6.1-2.0 6.9zM1238.8 324.7l2.0-7.0-4.1-6.5-2.0 6.9zM1242.9 331.2l2.0-6.9-4.1-6.6-2.0 7.0z"/>
<path fill="#c8291b" stroke="#c8291b" d="M1209.7 310.2l2.1-6.9-4.3-.7-2.0 6.8z"/>
<path fill="#e32f20" stroke="#e32f20" d="M1247.0 337.4l2.1-6.9-4.2-6.2-2.0 6.9zM1220.2 309.0l2.1-7.1-4.2-3.5-2.1 7.1zM1251.1 343.1l2.1-7.0-4.1-5.6-2.1 6.9z"/>
<path fill="#ad2317" stroke="#ad2317" d="M1203.4 315.8l2.1-6.4-4.3 .6-2.0 6.4z"/>
<path fill="#e63020" stroke="#e63020" d="M1255.3 347.8l2.0-6.9-4.1-4.8-2.1 7.0zM1224.4 313.5l2.0-7.0-4.1-4.6-2.1 7.1z"/>
<path fill="#d92d1e" stroke="#d92d1e" d="M1214.0 312.4l2.0-6.9-4.2-2.2-2.1 6.9z"/>
<path fill="#e63020" stroke="#e63020" d="M1228.5 319.0l2.1-7.0-4.2-5.5-2.0 7.0z"/>
<path fill="#e32f20" stroke="#e32f20" d="M1232.6 325.2l2.1-7.1-4.1-6.1-2.1 7.0z"/>
<path fill="#580f09" stroke="#580f09" d="M1299.7 313.8l2.0-2.3-4.4 4.7-2.0 2.3z"/>
<path fill="#e32f20" stroke="#e32f20" d="M1236.7 331.7l2.1-7.0-4.1-6.6-2.1 7.1zM1240.8 338.2l2.1-7.0-4.1-6.5-2.1 7.0zM1244.9 344.5l2.1-7.1-4.1-6.2-2.1 7.0z"/>
<path fill="#c5281b" stroke="#c5281b" d="M1207.7 316.5l2.0-6.3-4.2-.8-2.1 6.4z"/>
<path fill="#e32f20" stroke="#e32f20" d="M1218.1 315.8l2.1-6.8-4.2-3.5-2.0 6.9z"/>
<path fill="#e63020" stroke="#e63020" d="M1249.1 350.1l2.0-7.0-4.1-5.7-2.1 7.1z"/>
<path fill="#a82216" stroke="#a82216" d="M1201.4 321.3l2.0-5.5-4.2 .6-2.1 5.5z"/>
<path fill="#e63020" stroke="#e63020" d="M1222.3 320.4l2.1-6.9-4.2-4.5-2.1 6.8z"/>
<path fill="#d92d1e" stroke="#d92d1e" d="M1211.9 318.7l2.1-6.3-4.3-2.2-2.0 6.3z"/>
<path fill="#e32f20" stroke="#e32f20" d="M1226.4 325.9l2.1-6.9-4.1-5.5-2.1 6.9zM1230.5 332.1l2.1-6.9-4.1-6.2-2.1 6.9zM1234.7 338.6l2.0-6.9-4.1-6.5-2.1 6.9zM1238.8 345.1l2.0-6.9-4.1-6.5-2.0 6.9zM1242.9 351.3l2.0-6.8-4.1-6.3-2.0 6.9z"/>
<path fill="#c2281a" stroke="#c2281a" d="M1205.7 322.1l2.0-5.6-4.3-.7-2.0 5.5z"/>
<path fill="#e02f1f" stroke="#e02f1f" d="M1216.1 322.1l2.0-6.3-4.1-3.4-2.1 6.3z"/>
<path fill="#5d100a" stroke="#5d100a" d="M1297.8 317.4l1.9-3.6-4.4 4.7-1.9 3.5z"/>
<path fill="#e32f20" stroke="#e32f20" d="M1220.3 326.7l2.0-6.3-4.2-4.6-2.0 6.3zM1224.4 332.2l2.0-6.3-4.1-5.5-2.0 6.3z"/>
<path fill="#d52c1e" stroke="#d52c1e" d="M1209.9 324.2l2.0-5.5-4.2-2.2-2.0 5.6z"/>
<path fill="#e02f1f" stroke="#e02f1f" d="M1228.5 338.4l2.0-6.3-4.1-6.2-2.0 6.3zM1232.6 344.9l2.1-6.3-4.2-6.5-2.0 6.3zM1236.7 351.4l2.1-6.3-4.1-6.5-2.1 6.3z"/>
<path fill="#dc2e1f" stroke="#dc2e1f" d="M1214.1 327.7l2.0-5.6-4.2-3.4-2.0 5.5z"/>
<path fill="#b62518" stroke="#b62518" d="M1203.7 326.6l2.0-4.5-4.3-.8-2.0 4.5z"/>
<path fill="#dc2e1f" stroke="#dc2e1f" d="M1218.2 332.3l2.1-5.6-4.2-4.6-2.0 5.6z"/>
<path fill="#590f09" stroke="#590f09" d="M1308.6 303.3l1.9-2.3-4.4 5.4-2.0 2.2z"/>
<path fill="#5a1009" stroke="#5a1009" d="M1302.2 312.2l1.9-3.6-4.4 5.2-1.9 3.6z"/>
<path fill="#dc2e1f" stroke="#dc2e1f" d="M1222.4 337.8l2.0-5.6-4.1-5.5-2.1 5.6z"/>
<path fill="#d92d1e" stroke="#d92d1e" d="M1226.5 343.9l2.0-5.5-4.1-6.2-2.0 5.6z"/>
<path fill="#cc2a1c" stroke="#cc2a1c" d="M1207.9 328.7l2.0-4.5-4.2-2.1-2.0 4.5z"/>
<path fill="#d92d1e" stroke="#d92d1e" d="M1230.6 350.4l2.0-5.5-4.1-6.5-2.0 5.5z"/>
<path fill="#d22b1d" stroke="#d22b1d" d="M1212.1 332.2l2.0-4.5-4.2-3.5-2.0 4.5zM1216.2 336.8l2.0-4.5-4.1-4.6-2.0 4.5z"/>
<path fill="#61110b" stroke="#61110b" d="M1300.2 316.9l2.0-4.7-4.4 5.2-2.0 4.7z"/>
<path fill="#d22b1d" stroke="#d22b1d" d="M1220.4 342.3l2.0-4.5-4.2-5.5-2.0 4.5z"/>
<path fill="#590f09" stroke="#590f09" d="M1313.0 298.1l1.9-2.2-4.4 5.1-1.9 2.3z"/>
<path fill="#5a0f09" stroke="#5a0f09" d="M1306.6 306.9l2.0-3.6-4.5 5.3-1.9 3.6z"/>
<path fill="#cf2b1d" stroke="#cf2b1d" d="M1224.5 348.4l2.0-4.5-4.1-6.1-2.0 4.5z"/>
<path fill="#b92619" stroke="#b92619" d="M1205.9 332.0l2.0-3.3-4.2-2.1-2.0 3.3z"/>
<path fill="#bf271a" stroke="#bf271a" d="M1210.1 335.5l2.0-3.3-4.2-3.5-2.0 3.3z"/>
<path fill="#5d100a" stroke="#5d100a" d="M1371.4 314.2l1.8 2.9-4.1-6.5-1.9-2.9z"/>
<path fill="#c2281a" stroke="#c2281a" d="M1214.3 340.0l1.9-3.2-4.1-4.6-2.0 3.3z"/>
<path fill="#69130c" stroke="#69130c" d="M1298.1 322.7l2.1-5.8-4.4 5.2-2.1 5.8z"/>
<path fill="#bf271a" stroke="#bf271a" d="M1218.4 345.6l2.0-3.3-4.2-5.5-1.9 3.2z"/>
<path fill="#580f09" stroke="#580f09" d="M1317.4 293.4l1.9-2.2-4.4 4.7-1.9 2.2z"/>
<path fill="#60110a" stroke="#60110a" d="M1304.6 311.6l2.0-4.7-4.4 5.3-2.0 4.7z"/>
<path fill="#5a1009" stroke="#5a1009" d="M1311.0 301.7l2.0-3.6-4.4 5.2-2.0 3.6z"/>
<path fill="#bc2619" stroke="#bc2619" d="M1222.5 351.7l2.0-3.3-4.1-6.1-2.0 3.3z"/>
<path fill="#590f09" stroke="#590f09" d="M1328.0 284.4l1.9-.9-4.3 2.9-1.9 .9z"/>
<path fill="#68130c" stroke="#68130c" d="M1302.6 317.4l2.0-5.8-4.4 5.3-2.1 5.8z"/>
<path fill="#60110a" stroke="#60110a" d="M1357.2 294.0l1.8 1.8-4.1-4.8-1.9-1.8z"/>
<path fill="#590f09" stroke="#590f09" d="M1321.7 289.5l2.0-2.2-4.4 3.9-1.9 2.2z"/>
<path fill="#61110b" stroke="#61110b" d="M1309.0 306.5l2.0-4.8-4.4 5.2-2.0 4.7z"/>
<path fill="#5d100a" stroke="#5d100a" d="M1315.4 297.0l2.0-3.6-4.4 4.7-2.0 3.6z"/>
<path fill="#a52116" stroke="#a52116" d="M1216.5 347.5l1.9-1.9-4.1-5.6-2.0 2.0z"/>
<path fill="#64120b" stroke="#64120b" d="M1361.3 299.6l1.8 1.8-4.1-5.6-1.8-1.8z"/>
<path fill="#66120b" stroke="#66120b" d="M1365.4 305.9l1.8 1.8-4.1-6.3-1.8-1.8z"/>
<path fill="#68130c" stroke="#68130c" d="M1369.5 312.4l1.9 1.8-4.2-6.5-1.8-1.8zM1373.6 318.9l1.9 1.8-4.1-6.5-1.9-1.8z"/>
<path fill="#66120b" stroke="#66120b" d="M1377.7 325.1l1.9 1.8-4.1-6.2-1.9-1.8z"/>
<path fill="#5b100a" stroke="#5b100a" d="M1342.8 282.6l1.8 .5-4.2-1.1-1.9-.5z"/>
<path fill="#590f09" stroke="#590f09" d="M1332.3 282.7l1.9-.8-4.3 1.6-1.9 .9z"/>
<path fill="#64120b" stroke="#64120b" d="M1381.9 330.5l1.8 1.8-4.1-5.4-1.9-1.8z"/>
<path fill="#60110a" stroke="#60110a" d="M1386.0 335.1l1.9 1.8-4.2-4.6-1.8-1.8z"/>
<path fill="#6d140d" stroke="#6d140d" d="M1300.5 323.9l2.1-6.5-4.5 5.3-2.0 6.5z"/>
<path fill="#64120b" stroke="#64120b" d="M1347.0 285.0l1.8 .5-4.2-2.4-1.8-.5z"/>
<path fill="#5d100a" stroke="#5d100a" d="M1326.1 286.7l1.9-2.3-4.3 2.9-2.0 2.2z"/>
<path fill="#69130c" stroke="#69130c" d="M1307.0 312.2l2.0-5.7-4.4 5.1-2.0 5.8z"/>
<path fill="#61110b" stroke="#61110b" d="M1319.8 293.1l1.9-3.6-4.3 3.9-2.0 3.6z"/>
<path fill="#65120b" stroke="#65120b" d="M1313.4 301.8l2.0-4.8-4.4 4.7-2.0 4.8z"/>
<path fill="#61110b" stroke="#61110b" d="M1336.6 282.4l1.9-.9-4.3 .4-1.9 .8z"/>
<path fill="#6c140c" stroke="#6c140c" d="M1351.1 288.7l1.9 .5-4.2-3.7-1.8-.5z"/>
<path fill="#72150d" stroke="#72150d" d="M1355.3 293.5l1.9 .5-4.2-4.8-1.9-.5z"/>
<path fill="#76160e" stroke="#76160e" d="M1359.4 299.1l1.9 .5-4.1-5.6-1.9-.5z"/>
<path fill="#78160e" stroke="#78160e" d="M1363.5 305.4l1.9 .5-4.1-6.3-1.9-.5z"/>
<path fill="#68130c" stroke="#68130c" d="M1330.4 285.0l1.9-2.3-4.3 1.7-1.9 2.3z"/>
<path fill="#71150d" stroke="#71150d" d="M1340.9 283.4l1.9-.8-4.3-1.1-1.9 .9z"/>
<path fill="#79170e" stroke="#79170e" d="M1367.6 311.9l1.9 .5-4.1-6.5-1.9-.5zM1371.8 318.4l1.8 .5-4.1-6.5-1.9-.5z"/>
<path fill="#6f140d" stroke="#6f140d" d="M1304.9 318.7l2.1-6.5-4.4 5.2-2.1 6.5z"/>
<path fill="#78160e" stroke="#78160e" d="M1375.9 324.5l1.8 .6-4.1-6.2-1.8-.5z"/>
<path fill="#76160e" stroke="#76160e" d="M1380.0 330.0l1.9 .5-4.2-5.4-1.8-.6z"/>
<path fill="#6a130c" stroke="#6a130c" d="M1324.1 290.2l2.0-3.5-4.4 2.8-1.9 3.6z"/>
<path fill="#6d140d" stroke="#6d140d" d="M1311.3 307.5l2.1-5.7-4.4 4.7-2.0 5.7z"/>
<path fill="#6c140c" stroke="#6c140c" d="M1317.7 297.9l2.1-4.8-4.4 3.9-2.0 4.8z"/>
<path fill="#71150d" stroke="#71150d" d="M1384.2 334.6l1.8 .5-4.1-4.6-1.9-.5z"/>
<path fill="#7f180f" stroke="#7f180f" d="M1345.1 285.9l1.9-.9-4.2-2.4-1.9 .8z"/>
<path fill="#6a130c" stroke="#6a130c" d="M1388.3 338.0l1.9 .5-4.2-3.4-1.8-.5z"/>
<path fill="#7b170f" stroke="#7b170f" d="M1334.7 284.6l1.9-2.2-4.3 .3-1.9 2.3z"/>
<path fill="#8a1b11" stroke="#8a1b11" d="M1349.2 289.5l1.9-.8-4.1-3.7-1.9 .9z"/>
<path fill="#72150d" stroke="#72150d" d="M1302.9 325.6l2.0-6.9-4.4 5.2-2.1 6.9z"/>
<path fill="#8e1c12" stroke="#8e1c12" d="M1353.4 294.3l1.9-.8-4.2-4.8-1.9 .8z"/>
<path fill="#7b170f" stroke="#7b170f" d="M1328.4 288.5l2.0-3.5-4.3 1.7-2.0 3.5z"/>
<path fill="#72150d" stroke="#72150d" d="M1309.3 314.0l2.0-6.5-4.3 4.7-2.1 6.5z"/>
<path fill="#8e1c12" stroke="#8e1c12" d="M1357.5 300.0l1.9-.9-4.1-5.6-1.9 .8z"/>
<path fill="#931d13" stroke="#931d13" d="M1338.9 285.7l2.0-2.3-4.3-1.0-1.9 2.2z"/>
<path fill="#78160e" stroke="#78160e" d="M1322.1 295.0l2.0-4.8-4.3 2.9-2.1 4.8z"/>
<path fill="#76160e" stroke="#76160e" d="M1315.7 303.6l2.0-5.7-4.3 3.9-2.1 5.7z"/>
<path fill="#911c12" stroke="#911c12" d="M1361.6 306.2l1.9-.8-4.1-6.3-1.9 .9zM1365.7 312.8l1.9-.9-4.1-6.5-1.9 .8zM1369.9 319.3l1.9-.9-4.2-6.5-1.9 .9zM1374.0 325.4l1.9-.9-4.1-6.1-1.9 .9z"/>
<path fill="#8e1c12" stroke="#8e1c12" d="M1378.1 330.9l1.9-.9-4.1-5.5-1.9 .9z"/>
<path fill="#a52116" stroke="#a52116" d="M1343.1 288.1l2.0-2.2-4.2-2.5-2.0 2.3z"/>
<path fill="#8c1b12" stroke="#8c1b12" d="M1382.3 335.5l1.9-.9-4.2-4.6-1.9 .9z"/>
<path fill="#931d13" stroke="#931d13" d="M1332.7 288.2l2.0-3.6-4.3 .4-2.0 3.5z"/>
<path fill="#76160e" stroke="#76160e" d="M1307.2 321.0l2.1-7.0-4.4 4.7-2.0 6.9z"/>
<path fill="#881a11" stroke="#881a11" d="M1386.4 338.9l1.9-.9-4.1-3.4-1.9 .9z"/>
<path fill="#ab2217" stroke="#ab2217" d="M1347.3 291.8l1.9-2.3-4.1-3.6-2.0 2.2z"/>
<path fill="#8c1b12" stroke="#8c1b12" d="M1326.4 293.3l2.0-4.8-4.3 1.7-2.0 4.8z"/>
<path fill="#7b170f" stroke="#7b170f" d="M1313.7 310.1l2.0-6.5-4.4 3.9-2.0 6.5z"/>
<path fill="#811910" stroke="#811910" d="M1320.1 300.7l2.0-5.7-4.4 2.9-2.0 5.7z"/>
<path fill="#ad2317" stroke="#ad2317" d="M1351.5 296.6l1.9-2.3-4.2-4.8-1.9 2.3zM1336.9 289.3l2.0-3.6-4.2-1.1-2.0 3.6zM1355.6 302.2l1.9-2.2-4.1-5.7-1.9 2.3z"/>
<path fill="#ab2217" stroke="#ab2217" d="M1359.7 308.5l1.9-2.3-4.1-6.2-1.9 2.2zM1363.8 315.0l1.9-2.2-4.1-6.6-1.9 2.3zM1367.9 321.5l2.0-2.2-4.2-6.5-1.9 2.2z"/>
<path fill="#78160e" stroke="#78160e" d="M1305.2 328.0l2.0-7.0-4.3 4.6-2.1 7.1z"/>
<path fill="#ab2217" stroke="#ab2217" d="M1372.0 327.7l2.0-2.3-4.1-6.1-2.0 2.2z"/>
<path fill="#a52116" stroke="#a52116" d="M1330.7 293.0l2.0-4.8-4.3 .3-2.0 4.8z"/>
<path fill="#ad2317" stroke="#ad2317" d="M1376.2 333.1l1.9-2.2-4.1-5.5-2.0 2.3z"/>
<path fill="#bf271a" stroke="#bf271a" d="M1341.2 291.7l1.9-3.6-4.2-2.4-2.0 3.6z"/>
<path fill="#7f180f" stroke="#7f180f" d="M1311.6 317.0l2.1-6.9-4.4 3.9-2.1 7.0z"/>
<path fill="#ad2317" stroke="#ad2317" d="M1380.3 337.7l2.0-2.2-4.2-4.6-1.9 2.2z"/>
<path fill="#961d13" stroke="#961d13" d="M1324.4 299.1l2.0-5.8-4.3 1.7-2.0 5.7z"/>
<path fill="#8a1b11" stroke="#8a1b11" d="M1318.0 307.2l2.1-6.5-4.4 2.9-2.0 6.5z"/>
<path fill="#c5281b" stroke="#c5281b" d="M1345.3 295.3l2.0-3.5-4.2-3.7-1.9 3.6z"/>
<path fill="#ab2217" stroke="#ab2217" d="M1384.5 341.1l1.9-2.2-4.1-3.4-2.0 2.2z"/>
<path fill="#bf271a" stroke="#bf271a" d="M1334.9 294.0l2.0-4.7-4.2-1.1-2.0 4.8z"/>
<path fill="#c5281b" stroke="#c5281b" d="M1349.5 300.1l2.0-3.5-4.2-4.8-2.0 3.5zM1353.6 305.8l2.0-3.6-4.1-5.6-2.0 3.5z"/>
<path fill="#7f180f" stroke="#7f180f" d="M1309.6 324.1l2.0-7.1-4.4 4.0-2.0 7.0z"/>
<path fill="#c2281a" stroke="#c2281a" d="M1357.7 312.0l2.0-3.5-4.1-6.3-2.0 3.6z"/>
<path fill="#b02418" stroke="#b02418" d="M1328.7 298.7l2.0-5.7-4.3 .3-2.0 5.8z"/>
<path fill="#c2281a" stroke="#c2281a" d="M1361.8 318.6l2.0-3.6-4.1-6.5-2.0 3.5zM1365.9 325.1l2.0-3.6-4.1-6.5-2.0 3.6z"/>
<path fill="#8c1b12" stroke="#8c1b12" d="M1316.0 314.2l2.0-7.0-4.3 2.9-2.1 6.9z"/>
<path fill="#c2281a" stroke="#c2281a" d="M1370.1 331.2l1.9-3.5-4.1-6.2-2.0 3.6z"/>
<path fill="#cf2b1d" stroke="#cf2b1d" d="M1339.2 296.4l2.0-4.7-4.3-2.4-2.0 4.7z"/>
<path fill="#9d1f14" stroke="#9d1f14" d="M1322.3 305.6l2.1-6.5-4.3 1.6-2.1 6.5z"/>
<path fill="#c5281b" stroke="#c5281b" d="M1374.2 336.7l2.0-3.6-4.2-5.4-1.9 3.5zM1378.3 341.3l2.0-3.6-4.1-4.6-2.0 3.6z"/>
<path fill="#d52c1e" stroke="#d52c1e" d="M1343.3 300.1l2.0-4.8-4.1-3.6-2.0 4.7z"/>
<path fill="#c8291b" stroke="#c8291b" d="M1332.9 299.8l2.0-5.8-4.2-1.0-2.0 5.7z"/>
<path fill="#c5281b" stroke="#c5281b" d="M1382.5 344.7l2.0-3.6-4.2-3.4-2.0 3.6z"/>
<path fill="#7f180f" stroke="#7f180f" d="M1307.5 331.0l2.1-6.9-4.4 3.9-2.1 6.9z"/>
<path fill="#d52c1e" stroke="#d52c1e" d="M1347.5 304.9l2.0-4.8-4.2-4.8-2.0 4.8z"/>
<path fill="#b32418" stroke="#b32418" d="M1326.6 305.2l2.1-6.5-4.3 .4-2.1 6.5z"/>
<path fill="#8e1c12" stroke="#8e1c12" d="M1313.9 321.2l2.1-7.0-4.4 2.8-2.0 7.1z"/>
<path fill="#d52c1e" stroke="#d52c1e" d="M1351.6 310.5l2.0-4.7-4.1-5.7-2.0 4.8z"/>
<path fill="#a02015" stroke="#a02015" d="M1320.3 312.5l2.0-6.9-4.3 1.6-2.0 7.0z"/>
<path fill="#d22b1d" stroke="#d22b1d" d="M1355.7 316.8l2.0-4.8-4.1-6.2-2.0 4.7zM1359.8 323.3l2.0-4.7-4.1-6.6-2.0 4.8z"/>
<path fill="#d92d1e" stroke="#d92d1e" d="M1337.1 302.2l2.1-5.8-4.3-2.4-2.0 5.8z"/>
<path fill="#d22b1d" stroke="#d22b1d" d="M1363.9 329.8l2.0-4.7-4.1-6.5-2.0 4.7zM1368.1 336.0l2.0-4.8-4.2-6.1-2.0 4.7z"/>
<path fill="#d52c1e" stroke="#d52c1e" d="M1372.2 341.5l2.0-4.8-4.1-5.5-2.0 4.8z"/>
<path fill="#e02f1f" stroke="#e02f1f" d="M1341.3 305.9l2.0-5.8-4.1-3.7-2.1 5.8z"/>
<path fill="#d52c1e" stroke="#d52c1e" d="M1376.3 346.0l2.0-4.7-4.1-4.6-2.0 4.8z"/>
<path fill="#cc2a1c" stroke="#cc2a1c" d="M1330.9 306.3l2.0-6.5-4.2-1.1-2.1 6.5z"/>
<path fill="#b62518" stroke="#b62518" d="M1324.6 312.1l2.0-6.9-4.3 .4-2.0 6.9z"/>
<path fill="#8c1b12" stroke="#8c1b12" d="M1311.8 328.1l2.1-6.9-4.3 2.9-2.1 6.9z"/>
<path fill="#e02f1f" stroke="#e02f1f" d="M1345.5 310.6l2.0-5.7-4.2-4.8-2.0 5.8z"/>
<path fill="#d52c1e" stroke="#d52c1e" d="M1380.5 349.5l2.0-4.8-4.2-3.4-2.0 4.7z"/>
<path fill="#a02015" stroke="#a02015" d="M1318.2 319.5l2.1-7.0-4.3 1.7-2.1 7.0z"/>
<path fill="#dc2e1f" stroke="#dc2e1f" d="M1349.6 316.3l2.0-5.8-4.1-5.6-2.0 5.7zM1335.1 308.7l2.0-6.5-4.2-2.4-2.0 6.5zM1353.7 322.5l2.0-5.7-4.1-6.3-2.0 5.8z"/>
<path fill="#d92d1e" stroke="#d92d1e" d="M1357.8 329.1l2.0-5.8-4.1-6.5-2.0 5.7zM1361.9 335.6l2.0-5.8-4.1-6.5-2.0 5.8z"/>
<path fill="#dc2e1f" stroke="#dc2e1f" d="M1366.0 341.7l2.1-5.7-4.2-6.2-2.0 5.8zM1370.2 347.2l2.0-5.7-4.1-5.5-2.1 5.7z"/>
<path fill="#cc2a1c" stroke="#cc2a1c" d="M1328.8 313.2l2.1-6.9-4.3-1.1-2.0 6.9z"/>
<path fill="#e32f20" stroke="#e32f20" d="M1339.3 312.4l2.0-6.5-4.2-3.7-2.0 6.5z"/>
<path fill="#e02f1f" stroke="#e02f1f" d="M1374.3 351.8l2.0-5.8-4.1-4.5-2.0 5.7z"/>
<path fill="#b92619" stroke="#b92619" d="M1322.5 319.2l2.1-7.1-4.3 .4-2.1 7.0z"/>
<path fill="#881a11" stroke="#881a11" d="M1309.8 334.4l2.0-6.3-4.3 2.9-2.0 6.3z"/>
<path fill="#a02015" stroke="#a02015" d="M1316.2 326.4l2.0-6.9-4.3 1.7-2.1 6.9z"/>
<path fill="#e32f20" stroke="#e32f20" d="M1343.4 317.1l2.1-6.5-4.2-4.7-2.0 6.5zM1347.5 322.8l2.1-6.5-4.1-5.7-2.1 6.5z"/>
<path fill="#dc2e1f" stroke="#dc2e1f" d="M1333.0 315.6l2.1-6.9-4.2-2.4-2.1 6.9z"/>
<path fill="#e02f1f" stroke="#e02f1f" d="M1351.7 329.0l2.0-6.5-4.1-6.2-2.1 6.5zM1355.8 335.6l2.0-6.5-4.1-6.6-2.0 6.5zM1359.9 342.1l2.0-6.5-4.1-6.5-2.0 6.5zM1364.0 348.2l2.0-6.5-4.1-6.1-2.0 6.5z"/>
<path fill="#cc2a1c" stroke="#cc2a1c" d="M1326.7 320.2l2.1-7.0-4.2-1.1-2.1 7.1z"/>
<path fill="#e32f20" stroke="#e32f20" d="M1368.1 353.7l2.1-6.5-4.2-5.5-2.0 6.5zM1337.2 319.3l2.1-6.9-4.2-3.7-2.1 6.9z"/>
<path fill="#b62518" stroke="#b62518" d="M1320.4 326.1l2.1-6.9-4.3 .3-2.0 6.9z"/>
<path fill="#e32f20" stroke="#e32f20" d="M1372.3 358.3l2.0-6.5-4.1-4.6-2.1 6.5z"/>
<path fill="#9b1f14" stroke="#9b1f14" d="M1314.1 332.7l2.1-6.3-4.4 1.7-2.0 6.3z"/>
<path fill="#e63020" stroke="#e63020" d="M1341.4 324.1l2.0-7.0-4.1-4.7-2.1 6.9z"/>
<path fill="#e32f20" stroke="#e32f20" d="M1345.5 329.7l2.0-6.9-4.1-5.7-2.0 7.0z"/>
<path fill="#dc2e1f" stroke="#dc2e1f" d="M1331.0 322.7l2.0-7.1-4.2-2.4-2.1 7.0z"/>
<path fill="#590f09" stroke="#590f09" d="M1410.3 334.2l2.0-2.2-4.4 4.1-2.0 2.2z"/>
<path fill="#e32f20" stroke="#e32f20" d="M1349.6 336.0l2.1-7.0-4.2-6.2-2.0 6.9zM1353.7 342.5l2.1-6.9-4.1-6.6-2.1 7.0zM1357.8 349.0l2.1-6.9-4.1-6.5-2.1 6.9zM1361.9 355.2l2.1-7.0-4.1-6.1-2.1 6.9z"/>
<path fill="#cc2a1c" stroke="#cc2a1c" d="M1324.7 327.1l2.0-6.9-4.2-1.0-2.1 6.9z"/>
<path fill="#e32f20" stroke="#e32f20" d="M1366.1 360.6l2.0-6.9-4.1-5.5-2.1 7.0zM1335.1 326.3l2.1-7.0-4.2-3.7-2.0 7.1z"/>
<path fill="#b32418" stroke="#b32418" d="M1318.4 332.4l2.0-6.3-4.2 .3-2.1 6.3z"/>
<path fill="#e63020" stroke="#e63020" d="M1370.2 365.2l2.1-6.9-4.2-4.6-2.0 6.9zM1339.3 331.1l2.1-7.0-4.2-4.8-2.1 7.0z"/>
<path fill="#931d13" stroke="#931d13" d="M1312.1 338.3l2.0-5.6-4.3 1.7-2.0 5.6z"/>
<path fill="#e63020" stroke="#e63020" d="M1343.4 336.8l2.1-7.1-4.1-5.6-2.1 7.0z"/>
<path fill="#dc2e1f" stroke="#dc2e1f" d="M1328.9 329.5l2.1-6.8-4.3-2.5-2.0 6.9z"/>
<path fill="#e32f20" stroke="#e32f20" d="M1347.5 343.0l2.1-7.0-4.1-6.3-2.1 7.1zM1351.6 349.6l2.1-7.1-4.1-6.5-2.1 7.0zM1355.7 356.1l2.1-7.1-4.1-6.5-2.1 7.1zM1359.9 362.2l2.0-7.0-4.1-6.2-2.1 7.1z"/>
<path fill="#580f09" stroke="#580f09" d="M1414.7 329.4l2.0-2.2-4.4 4.8-2.0 2.2z"/>
<path fill="#cc2a1c" stroke="#cc2a1c" d="M1322.6 333.4l2.1-6.3-4.3-1.0-2.0 6.3z"/>
<path fill="#e63020" stroke="#e63020" d="M1364.0 367.7l2.1-7.1-4.2-5.4-2.0 7.0z"/>
<path fill="#e32f20" stroke="#e32f20" d="M1333.1 333.2l2.0-6.9-4.1-3.6-2.1 6.8z"/>
<path fill="#5f110a" stroke="#5f110a" d="M1408.4 337.8l1.9-3.6-4.4 4.1-1.9 3.6z"/>
<path fill="#e63020" stroke="#e63020" d="M1337.2 338.0l2.1-6.9-4.2-4.8-2.0 6.9z"/>
<path fill="#ad2317" stroke="#ad2317" d="M1316.4 337.9l2.0-5.5-4.3 .3-2.0 5.6z"/>
<path fill="#e32f20" stroke="#e32f20" d="M1341.4 343.6l2.0-6.8-4.1-5.7-2.1 6.9z"/>
<path fill="#7d180f" stroke="#7d180f" d="M1448.6 302.0l1.8 2.9-4.4 2.7-1.8-2.9z"/>
<path fill="#d92d1e" stroke="#d92d1e" d="M1326.9 335.9l2.0-6.4-4.2-2.4-2.1 6.3z"/>
<path fill="#e32f20" stroke="#e32f20" d="M1345.5 349.9l2.0-6.9-4.1-6.2-2.0 6.8zM1349.6 356.4l2.0-6.8-4.1-6.6-2.0 6.9zM1353.7 362.9l2.0-6.8-4.1-6.5-2.0 6.8zM1357.8 369.1l2.1-6.9-4.2-6.1-2.0 6.8zM1361.9 374.6l2.1-6.9-4.1-5.5-2.1 6.9zM1331.0 339.5l2.1-6.3-4.2-3.7-2.0 6.4z"/>
<path fill="#c5281b" stroke="#c5281b" d="M1320.6 339.0l2.0-5.6-4.2-1.0-2.0 5.5z"/>
<path fill="#e32f20" stroke="#e32f20" d="M1335.2 344.3l2.0-6.3-4.1-4.8-2.1 6.3z"/>
<path fill="#5c100a" stroke="#5c100a" d="M1412.7 333.0l2.0-3.6-4.4 4.8-1.9 3.6z"/>
<path fill="#e32f20" stroke="#e32f20" d="M1339.3 350.0l2.1-6.4-4.2-5.6-2.0 6.3z"/>
<path fill="#76160e" stroke="#76160e" d="M1452.9 300.6l1.8 2.9-4.3 1.4-1.8-2.9z"/>
<path fill="#e02f1f" stroke="#e02f1f" d="M1343.4 356.2l2.1-6.3-4.1-6.3-2.1 6.4z"/>
<path fill="#d52c1e" stroke="#d52c1e" d="M1324.8 341.4l2.1-5.5-4.3-2.5-2.0 5.6z"/>
<path fill="#e02f1f" stroke="#e02f1f" d="M1347.5 362.8l2.1-6.4-4.1-6.5-2.1 6.3zM1351.6 369.3l2.1-6.4-4.1-6.5-2.1 6.4z"/>
<path fill="#dc2e1f" stroke="#dc2e1f" d="M1329.0 345.1l2.0-5.6-4.1-3.6-2.1 5.5z"/>
<path fill="#bc2619" stroke="#bc2619" d="M1318.6 343.5l2.0-4.5-4.2-1.1-2.0 4.5z"/>
<path fill="#dc2e1f" stroke="#dc2e1f" d="M1333.2 349.9l2.0-5.6-4.2-4.8-2.0 5.6z"/>
<path fill="#6a130c" stroke="#6a130c" d="M1457.2 300.5l1.8 2.9-4.3 .1-1.8-2.9z"/>
<path fill="#dc2e1f" stroke="#dc2e1f" d="M1337.3 355.5l2.0-5.5-4.1-5.7-2.0 5.6z"/>
<path fill="#590f09" stroke="#590f09" d="M1423.5 318.9l2.0-2.3-4.4 5.3-2.0 2.3z"/>
<path fill="#64120b" stroke="#64120b" d="M1410.7 337.7l2.0-4.7-4.3 4.8-2.1 4.7z"/>
<path fill="#5a1009" stroke="#5a1009" d="M1417.2 327.8l1.9-3.6-4.4 5.2-2.0 3.6z"/>
<path fill="#d92d1e" stroke="#d92d1e" d="M1341.4 361.8l2.0-5.6-4.1-6.2-2.0 5.5zM1345.5 368.3l2.0-5.5-4.1-6.6-2.0 5.6z"/>
<path fill="#cc2a1c" stroke="#cc2a1c" d="M1322.8 345.9l2.0-4.5-4.2-2.4-2.0 4.5z"/>
<path fill="#d22b1d" stroke="#d22b1d" d="M1327.0 349.6l2.0-4.5-4.2-3.7-2.0 4.5z"/>
<path fill="#69130c" stroke="#69130c" d="M1451.1 298.8l1.8 1.8-4.3 1.4-1.9-1.8z"/>
<path fill="#d22b1d" stroke="#d22b1d" d="M1331.2 354.4l2.0-4.5-4.2-4.8-2.0 4.5zM1335.3 360.0l2.0-4.5-4.1-5.6-2.0 4.5z"/>
<path fill="#6c140c" stroke="#6c140c" d="M1408.7 343.5l2.0-5.8-4.4 4.8-2.0 5.8z"/>
<path fill="#cf2b1d" stroke="#cf2b1d" d="M1339.4 366.3l2.0-4.5-4.1-6.3-2.0 4.5z"/>
<path fill="#61110b" stroke="#61110b" d="M1415.2 332.5l2.0-4.7-4.5 5.2-2.0 4.7z"/>
<path fill="#580f09" stroke="#580f09" d="M1427.9 313.8l2.0-2.3-4.4 5.1-2.0 2.3z"/>
<path fill="#5a0f09" stroke="#5a0f09" d="M1421.6 322.4l1.9-3.5-4.4 5.3-1.9 3.6z"/>
<path fill="#bc2619" stroke="#bc2619" d="M1320.9 349.2l1.9-3.3-4.2-2.4-1.9 3.3z"/>
<path fill="#5f110a" stroke="#5f110a" d="M1455.3 298.7l1.9 1.8-4.3 .1-1.8-1.8z"/>
<path fill="#c2281a" stroke="#c2281a" d="M1325.1 352.9l1.9-3.3-4.2-3.7-1.9 3.3zM1329.2 357.6l2.0-3.2-4.2-4.8-1.9 3.3z"/>
<path fill="#580f09" stroke="#580f09" d="M1133.2 328.6l1.9-2.5-4.4 4.5-1.9 2.5z"/>
<path fill="#bf271a" stroke="#bf271a" d="M1333.3 363.3l2.0-3.3-4.1-5.6-2.0 3.2z"/>
<path fill="#69130c" stroke="#69130c" d="M1413.1 338.3l2.1-5.8-4.5 5.2-2.0 5.8z"/>
<path fill="#bc2619" stroke="#bc2619" d="M1337.4 369.5l2.0-3.2-4.1-6.3-2.0 3.3z"/>
<path fill="#580f09" stroke="#580f09" d="M1432.3 309.2l2.0-2.2-4.4 4.5-2.0 2.3z"/>
<path fill="#60110a" stroke="#60110a" d="M1419.6 327.2l2.0-4.8-4.4 5.4-2.0 4.7z"/>
<path fill="#5b100a" stroke="#5b100a" d="M1426.0 317.3l1.9-3.5-4.4 5.1-1.9 3.5z"/>
<path fill="#580f09" stroke="#580f09" d="M1443.0 300.6l1.9-.9-4.4 2.7-1.9 .8z"/>
<path fill="#6d140d" stroke="#6d140d" d="M1411.1 344.8l2.0-6.5-4.4 5.2-2.0 6.5z"/>
<path fill="#580f09" stroke="#580f09" d="M1453.5 298.2l1.8 .5-4.2 .1-1.9-.5zM1137.6 323.5l1.9-2.5-4.4 5.1-1.9 2.5z"/>
<path fill="#68130c" stroke="#68130c" d="M1417.5 333.0l2.1-5.8-4.4 5.3-2.1 5.8z"/>
<path fill="#a52116" stroke="#a52116" d="M1331.4 365.2l1.9-1.9-4.1-5.7-1.9 2.0z"/>
<path fill="#590f09" stroke="#590f09" d="M1436.7 305.5l1.9-2.3-4.3 3.8-2.0 2.2z"/>
<path fill="#63110b" stroke="#63110b" d="M1424.0 322.1l2.0-4.8-4.4 5.1-2.0 4.8z"/>
<path fill="#5d100a" stroke="#5d100a" d="M1430.4 312.8l1.9-3.6-4.4 4.6-1.9 3.5z"/>
<path fill="#5a1009" stroke="#5a1009" d="M1447.3 299.2l1.9-.9-4.3 1.4-1.9 .9z"/>
<path fill="#6d140d" stroke="#6d140d" d="M1415.5 339.4l2.0-6.4-4.4 5.3-2.0 6.5z"/>
<path fill="#5e100a" stroke="#5e100a" d="M1441.0 302.8l2.0-2.2-4.4 2.6-1.9 2.3z"/>
<path fill="#580f09" stroke="#580f09" d="M1142.0 318.1l2.0-2.5-4.5 5.4-1.9 2.5z"/>
<path fill="#5c100a" stroke="#5c100a" d="M1135.6 327.3l2.0-3.8-4.4 5.1-2.0 3.8z"/>
<path fill="#69130c" stroke="#69130c" d="M1421.9 327.9l2.1-5.8-4.4 5.1-2.1 5.8z"/>
<path fill="#63110b" stroke="#63110b" d="M1434.7 309.1l2.0-3.6-4.4 3.7-1.9 3.6z"/>
<path fill="#64120b" stroke="#64120b" d="M1451.6 299.1l1.9-.9-4.3 .1-1.9 .9z"/>
<path fill="#66120b" stroke="#66120b" d="M1428.4 317.6l2.0-4.8-4.4 4.5-2.0 4.8z"/>
<path fill="#71150d" stroke="#71150d" d="M1413.4 346.4l2.1-7.0-4.4 5.4-2.1 6.9z"/>
<path fill="#6a130c" stroke="#6a130c" d="M1445.3 301.4l2.0-2.2-4.3 1.4-2.0 2.2z"/>
<path fill="#6f140d" stroke="#6f140d" d="M1419.9 334.3l2.0-6.4-4.4 5.1-2.0 6.4z"/>
<path fill="#64120b" stroke="#64120b" d="M1133.6 332.2l2.0-4.9-4.4 5.1-2.0 4.9z"/>
<path fill="#580f09" stroke="#580f09" d="M1146.4 312.9l2.0-2.5-4.4 5.2-2.0 2.5z"/>
<path fill="#5b100a" stroke="#5b100a" d="M1140.0 322.0l2.0-3.9-4.4 5.4-2.0 3.8z"/>
<path fill="#6d140d" stroke="#6d140d" d="M1439.1 306.4l1.9-3.6-4.3 2.7-2.0 3.6zM1426.3 323.3l2.1-5.7-4.4 4.5-2.1 5.8zM1432.7 313.8l2.0-4.7-4.3 3.7-2.0 4.8z"/>
<path fill="#7f180f" stroke="#7f180f" d="M1449.6 301.3l2.0-2.2-4.3 .1-2.0 2.2z"/>
<path fill="#72150d" stroke="#72150d" d="M1417.8 341.3l2.1-7.0-4.4 5.1-2.1 7.0z"/>
<path fill="#7f180f" stroke="#7f180f" d="M1443.4 305.0l1.9-3.6-4.3 1.4-1.9 3.6z"/>
<path fill="#74160e" stroke="#74160e" d="M1424.3 329.8l2.0-6.5-4.4 4.6-2.0 6.4z"/>
<path fill="#63110b" stroke="#63110b" d="M1138.0 326.9l2.0-4.9-4.4 5.3-2.0 4.9z"/>
<path fill="#5f110a" stroke="#5f110a" d="M1204.9 325.8l1.8 2.7-4.1-6.5-1.8-2.8z"/>
<path fill="#7b170f" stroke="#7b170f" d="M1437.1 311.2l2.0-4.8-4.4 2.7-2.0 4.7z"/>
<path fill="#580f09" stroke="#580f09" d="M1150.8 308.1l2.0-2.5-4.4 4.8-2.0 2.5z"/>
<path fill="#78160e" stroke="#78160e" d="M1430.7 319.6l2.0-5.8-4.3 3.8-2.1 5.7z"/>
<path fill="#5f110a" stroke="#5f110a" d="M1209.0 332.3l1.8 2.7-4.1-6.5-1.8-2.7z"/>
<path fill="#5c100a" stroke="#5c100a" d="M1144.4 316.7l2.0-3.8-4.4 5.2-2.0 3.9z"/>
<path fill="#5e100a" stroke="#5e100a" d="M1213.1 338.5l1.8 2.8-4.1-6.3-1.8-2.7z"/>
<path fill="#72150d" stroke="#72150d" d="M1415.8 348.3l2.0-7.0-4.4 5.1-2.0 7.0z"/>
<path fill="#981e14" stroke="#981e14" d="M1447.7 304.9l1.9-3.6-4.3 .1-1.9 3.6z"/>
<path fill="#5c100a" stroke="#5c100a" d="M1371.2 406.9l1.9-.5-4.3 .6-1.9 .5z"/>
<path fill="#78160e" stroke="#78160e" d="M1422.2 336.7l2.1-6.9-4.4 4.5-2.1 7.0z"/>
<path fill="#5e100a" stroke="#5e100a" d="M1360.8 406.0l1.8 .8-4.2-2.1-1.8-.9z"/>
<path fill="#911c12" stroke="#911c12" d="M1441.4 309.7l2.0-4.7-4.3 1.4-2.0 4.8z"/>
<path fill="#7d180f" stroke="#7d180f" d="M1428.6 326.1l2.1-6.5-4.4 3.7-2.0 6.5z"/>
<path fill="#69130c" stroke="#69130c" d="M1136.0 332.8l2.0-5.9-4.4 5.3-2.0 6.0z"/>
<path fill="#861a10" stroke="#861a10" d="M1435.0 316.9l2.1-5.7-4.4 2.6-2.0 5.8z"/>
<path fill="#590f09" stroke="#590f09" d="M1155.2 304.1l1.9-2.5-4.3 4.0-2.0 2.5z"/>
<path fill="#63110b" stroke="#63110b" d="M1142.4 321.7l2.0-5.0-4.4 5.3-2.0 4.9z"/>
<path fill="#5d100a" stroke="#5d100a" d="M1148.8 311.9l2.0-3.8-4.4 4.8-2.0 3.8z"/>
<path fill="#72150d" stroke="#72150d" d="M1413.7 355.2l2.1-6.9-4.4 5.1-2.1 6.9z"/>
<path fill="#580f09" stroke="#580f09" d="M1375.5 405.0l1.9-.6-4.3 2.0-1.9 .5z"/>
<path fill="#63110b" stroke="#63110b" d="M1190.7 306.0l1.8 1.6-4.1-4.6-1.9-1.6z"/>
<path fill="#590f09" stroke="#590f09" d="M1365.0 406.7l1.9 .8-4.3-.7-1.8-.8z"/>
<path fill="#66120b" stroke="#66120b" d="M1194.8 311.5l1.9 1.6-4.2-5.5-1.8-1.6z"/>
<path fill="#79170e" stroke="#79170e" d="M1420.2 343.8l2.0-7.1-4.4 4.6-2.0 7.0z"/>
<path fill="#ab2217" stroke="#ab2217" d="M1445.7 309.7l2.0-4.8-4.3 .1-2.0 4.7z"/>
<path fill="#69130c" stroke="#69130c" d="M1198.9 317.7l1.9 1.5-4.1-6.1-1.9-1.6z"/>
<path fill="#5d100a" stroke="#5d100a" d="M1176.3 295.6l1.8 .2-4.2-.7-1.9-.3z"/>
<path fill="#6a130c" stroke="#6a130c" d="M1203.0 324.2l1.9 1.6-4.1-6.6-1.9-1.5z"/>
<path fill="#5a0f09" stroke="#5a0f09" d="M1165.8 296.5l1.9-1.1-4.3 1.9-1.9 1.2z"/>
<path fill="#6a130c" stroke="#6a130c" d="M1207.2 330.7l1.8 1.6-4.1-6.5-1.9-1.6z"/>
<path fill="#811910" stroke="#811910" d="M1426.6 333.0l2.0-6.9-4.3 3.7-2.1 6.9z"/>
<path fill="#69130c" stroke="#69130c" d="M1211.3 337.0l1.8 1.5-4.1-6.2-1.8-1.6z"/>
<path fill="#9b1f14" stroke="#9b1f14" d="M1439.3 315.5l2.1-5.8-4.3 1.5-2.1 5.7z"/>
<path fill="#8c1b12" stroke="#8c1b12" d="M1433.0 323.4l2.0-6.5-4.3 2.7-2.1 6.5z"/>
<path fill="#66120b" stroke="#66120b" d="M1215.4 342.6l1.8 1.6-4.1-5.7-1.8-1.5z"/>
<path fill="#5a1009" stroke="#5a1009" d="M1369.3 406.1l1.9 .8-4.3 .6-1.9-.8z"/>
<path fill="#64120b" stroke="#64120b" d="M1219.5 347.4l1.9 1.5-4.2-4.7-1.8-1.6z"/>
<path fill="#5d100a" stroke="#5d100a" d="M1159.5 301.0l2.0-2.5-4.4 3.1-1.9 2.5z"/>
<path fill="#69130c" stroke="#69130c" d="M1140.4 327.6l2.0-5.9-4.4 5.2-2.0 5.9z"/>
<path fill="#66120b" stroke="#66120b" d="M1180.5 297.7l1.9 .3-4.3-2.2-1.8-.2z"/>
<path fill="#5b100a" stroke="#5b100a" d="M1379.9 401.8l1.9-.5-4.4 3.1-1.9 .6z"/>
<path fill="#66120b" stroke="#66120b" d="M1146.8 316.9l2.0-5.0-4.4 4.8-2.0 5.0z"/>
<path fill="#61110b" stroke="#61110b" d="M1153.2 307.9l2.0-3.8-4.4 4.0-2.0 3.8z"/>
<path fill="#78160e" stroke="#78160e" d="M1418.1 350.6l2.1-6.8-4.4 4.5-2.1 6.9z"/>
<path fill="#580f09" stroke="#580f09" d="M1359.0 403.9l1.8 2.1-4.2-2.2-1.9-2.0z"/>
<path fill="#63110b" stroke="#63110b" d="M1170.1 295.9l1.9-1.1-4.3 .6-1.9 1.1z"/>
<path fill="#b32418" stroke="#b32418" d="M1443.6 315.4l2.1-5.7-4.3 0-2.1 5.8z"/>
<path fill="#811910" stroke="#811910" d="M1424.5 340.1l2.1-7.1-4.4 3.7-2.0 7.1z"/>
<path fill="#6f140d" stroke="#6f140d" d="M1184.7 301.2l1.8 .2-4.1-3.4-1.9-.3z"/>
<path fill="#911c12" stroke="#911c12" d="M1430.9 330.3l2.1-6.9-4.4 2.7-2.0 6.9z"/>
<path fill="#a02015" stroke="#a02015" d="M1437.3 322.0l2.0-6.5-4.3 1.4-2.0 6.5z"/>
<path fill="#61110b" stroke="#61110b" d="M1373.7 404.1l1.8 .9-4.3 1.9-1.9-.8z"/>
<path fill="#76160e" stroke="#76160e" d="M1188.8 305.8l1.9 .2-4.2-4.6-1.8-.2z"/>
<path fill="#590f09" stroke="#590f09" d="M1390.5 392.4l2.0-1.9-4.4 4.8-2.0 1.9z"/>
<path fill="#6f140d" stroke="#6f140d" d="M1138.3 334.2l2.1-6.6-4.4 5.2-2.1 6.6z"/>
<path fill="#5d100a" stroke="#5d100a" d="M1363.2 404.7l1.8 2.0-4.2-.7-1.8-2.1z"/>
<path fill="#68130c" stroke="#68130c" d="M1163.9 299.0l1.9-2.5-4.3 2.0-2.0 2.5z"/>
<path fill="#79170e" stroke="#79170e" d="M1193.0 311.3l1.8 .2-4.1-5.5-1.9-.2z"/>
<path fill="#74160e" stroke="#74160e" d="M1174.3 296.7l2.0-1.1-4.3-.8-1.9 1.1z"/>
<path fill="#7b170f" stroke="#7b170f" d="M1197.1 317.4l1.8 .3-4.1-6.2-1.8-.2z"/>
<path fill="#5e100a" stroke="#5e100a" d="M1384.2 397.8l1.9-.6-4.3 4.1-1.9 .5z"/>
<path fill="#72150d" stroke="#72150d" d="M1416.1 357.0l2.0-6.4-4.4 4.6-2.0 6.3z"/>
<path fill="#6d140d" stroke="#6d140d" d="M1144.8 322.8l2.0-5.9-4.4 4.8-2.0 5.9z"/>
<path fill="#7d180f" stroke="#7d180f" d="M1201.2 323.9l1.8 .3-4.1-6.5-1.8-.3z"/>
<path fill="#6a130c" stroke="#6a130c" d="M1157.6 304.8l1.9-3.8-4.3 3.1-2.0 3.8z"/>
<path fill="#7d180f" stroke="#7d180f" d="M1205.3 330.5l1.9 .2-4.2-6.5-1.8-.3z"/>
<path fill="#6c140c" stroke="#6c140c" d="M1151.2 312.8l2.0-4.9-4.4 4.0-2.0 5.0z"/>
<path fill="#7b170f" stroke="#7b170f" d="M1209.4 336.7l1.9 .3-4.1-6.3-1.9-.2z"/>
<path fill="#811910" stroke="#811910" d="M1422.5 346.9l2.0-6.8-4.3 3.7-2.1 6.8z"/>
<path fill="#79170e" stroke="#79170e" d="M1213.5 342.4l1.9 .2-4.1-5.6-1.9-.3z"/>
<path fill="#b92619" stroke="#b92619" d="M1441.6 321.9l2.0-6.5-4.3 .1-2.0 6.5z"/>
<path fill="#911c12" stroke="#911c12" d="M1428.9 337.4l2.0-7.1-4.3 2.7-2.1 7.1z"/>
<path fill="#a52116" stroke="#a52116" d="M1435.2 328.9l2.1-6.9-4.3 1.4-2.1 6.9z"/>
<path fill="#78160e" stroke="#78160e" d="M1217.7 347.1l1.8 .3-4.1-4.8-1.9-.2z"/>
<path fill="#831910" stroke="#831910" d="M1178.6 298.9l1.9-1.2-4.2-2.1-2.0 1.1z"/>
<path fill="#66120b" stroke="#66120b" d="M1367.5 404.0l1.8 2.1-4.3 .6-1.8-2.0z"/>
<path fill="#68130c" stroke="#68130c" d="M1378.0 401.0l1.9 .8-4.4 3.2-1.8-.9z"/>
<path fill="#7b170f" stroke="#7b170f" d="M1168.1 298.4l2.0-2.5-4.3 .6-1.9 2.5z"/>
<path fill="#71150d" stroke="#71150d" d="M1221.9 350.8l1.8 .2-4.2-3.6-1.8-.3z"/>
<path fill="#8e1c12" stroke="#8e1c12" d="M1182.8 302.3l1.9-1.1-4.2-3.5-1.9 1.2z"/>
<path fill="#590f09" stroke="#590f09" d="M1394.9 387.2l2.0-1.9-4.4 5.2-2.0 1.9z"/>
<path fill="#72150d" stroke="#72150d" d="M1142.7 329.4l2.1-6.6-4.4 4.8-2.1 6.6z"/>
<path fill="#7b170f" stroke="#7b170f" d="M1161.9 302.8l2.0-3.8-4.4 2.0-1.9 3.8z"/>
<path fill="#5d100a" stroke="#5d100a" d="M1357.2 400.7l1.8 3.2-4.3-2.1-1.8-3.2z"/>
<path fill="#7d180f" stroke="#7d180f" d="M1420.4 353.3l2.1-6.4-4.4 3.7-2.0 6.4z"/>
<path fill="#61110b" stroke="#61110b" d="M1388.6 392.9l1.9-.5-4.4 4.8-1.9 .6z"/>
<path fill="#74160e" stroke="#74160e" d="M1149.2 318.8l2.0-6.0-4.4 4.1-2.0 5.9z"/>
<path fill="#931d13" stroke="#931d13" d="M1186.9 306.9l1.9-1.1-4.1-4.6-1.9 1.1z"/>
<path fill="#bc2619" stroke="#bc2619" d="M1439.5 328.8l2.1-6.9-4.3 .1-2.1 6.9z"/>
<path fill="#78160e" stroke="#78160e" d="M1155.6 309.7l2.0-4.9-4.4 3.1-2.0 4.9z"/>
<path fill="#8e1c12" stroke="#8e1c12" d="M1426.8 344.2l2.1-6.8-4.4 2.7-2.0 6.8z"/>
<path fill="#a52116" stroke="#a52116" d="M1433.2 336.0l2.0-7.1-4.3 1.4-2.0 7.1z"/>
<path fill="#6f140d" stroke="#6f140d" d="M1371.8 402.1l1.9 2.0-4.4 2.0-1.8-2.1z"/>
<path fill="#931d13" stroke="#931d13" d="M1172.4 299.2l1.9-2.5-4.2-.8-2.0 2.5z"/>
<path fill="#961d13" stroke="#961d13" d="M1191.0 312.4l2.0-1.1-4.2-5.5-1.9 1.1zM1195.2 318.6l1.9-1.2-4.1-6.1-2.0 1.1zM1199.3 325.1l1.9-1.2-4.1-6.5-1.9 1.2z"/>
<path fill="#6c140c" stroke="#6c140c" d="M1382.4 396.9l1.8 .9-4.3 4.0-1.9-.8z"/>
<path fill="#68130c" stroke="#68130c" d="M1361.4 401.5l1.8 3.2-4.2-.8-1.8-3.2z"/>
<path fill="#961d13" stroke="#961d13" d="M1203.4 331.6l1.9-1.1-4.1-6.6-1.9 1.2zM1207.5 337.8l1.9-1.1-4.1-6.2-1.9 1.1zM1211.6 343.5l1.9-1.1-4.1-5.7-1.9 1.1z"/>
<path fill="#a82216" stroke="#a82216" d="M1176.6 301.4l2.0-2.5-4.3-2.2-1.9 2.5z"/>
<path fill="#931d13" stroke="#931d13" d="M1166.2 302.2l1.9-3.8-4.2 .6-2.0 3.8z"/>
<path fill="#76160e" stroke="#76160e" d="M1140.7 336.4l2.0-7.0-4.4 4.8-2.0 7.0z"/>
<path fill="#931d13" stroke="#931d13" d="M1215.8 348.2l1.9-1.1-4.2-4.7-1.9 1.1z"/>
<path fill="#bc2619" stroke="#bc2619" d="M1437.5 335.9l2.0-7.1-4.3 .1-2.0 7.1z"/>
<path fill="#76160e" stroke="#76160e" d="M1418.4 358.8l2.0-5.5-4.3 3.7-2.1 5.5z"/>
<path fill="#79170e" stroke="#79170e" d="M1147.1 325.4l2.1-6.6-4.4 4.0-2.1 6.6z"/>
<path fill="#5a0f09" stroke="#5a0f09" d="M1399.4 381.9l1.9-2.0-4.4 5.4-2.0 1.9z"/>
<path fill="#a52116" stroke="#a52116" d="M1431.1 342.8l2.1-6.8-4.3 1.4-2.1 6.8z"/>
<path fill="#8c1b12" stroke="#8c1b12" d="M1424.8 350.6l2.0-6.4-4.3 2.7-2.1 6.4z"/>
<path fill="#8a1b11" stroke="#8a1b11" d="M1159.9 307.8l2.0-5.0-4.3 2.0-2.0 4.9z"/>
<path fill="#811910" stroke="#811910" d="M1153.5 315.7l2.1-6.0-4.4 3.1-2.0 6.0z"/>
<path fill="#76160e" stroke="#76160e" d="M1376.2 399.0l1.8 2.0-4.3 3.1-1.9-2.0z"/>
<path fill="#911c12" stroke="#911c12" d="M1219.9 351.9l2.0-1.1-4.2-3.7-1.9 1.1z"/>
<path fill="#b02418" stroke="#b02418" d="M1180.8 304.8l2.0-2.5-4.2-3.4-2.0 2.5z"/>
<path fill="#72150d" stroke="#72150d" d="M1365.7 400.9l1.8 3.1-4.3 .7-1.8-3.2z"/>
<path fill="#63110b" stroke="#63110b" d="M1393.1 387.7l1.8-.5-4.4 5.2-1.9 .5z"/>
<path fill="#ad2317" stroke="#ad2317" d="M1170.4 303.0l2.0-3.8-4.3-.8-1.9 3.8z"/>
<path fill="#b32418" stroke="#b32418" d="M1185.0 309.4l1.9-2.5-4.1-4.6-2.0 2.5z"/>
<path fill="#6f140d" stroke="#6f140d" d="M1386.8 392.1l1.8 .8-4.4 4.9-1.8-.9z"/>
<path fill="#b02418" stroke="#b02418" d="M1189.1 314.9l1.9-2.5-4.1-5.5-1.9 2.5zM1193.2 321.1l2.0-2.5-4.2-6.2-1.9 2.5z"/>
<path fill="#bc2619" stroke="#bc2619" d="M1435.4 342.7l2.1-6.8-4.3 .1-2.1 6.8z"/>
<path fill="#b02418" stroke="#b02418" d="M1197.3 327.6l2.0-2.5-4.1-6.5-2.0 2.5z"/>
<path fill="#a22015" stroke="#a22015" d="M1164.2 307.2l2.0-5.0-4.3 .6-2.0 5.0z"/>
<path fill="#7d180f" stroke="#7d180f" d="M1145.1 332.3l2.0-6.9-4.4 4.0-2.0 7.0z"/>
<path fill="#b02418" stroke="#b02418" d="M1201.4 334.1l2.0-2.5-4.1-6.5-2.0 2.5z"/>
<path fill="#a02015" stroke="#a02015" d="M1429.1 349.2l2.0-6.4-4.3 1.4-2.0 6.4z"/>
<path fill="#b02418" stroke="#b02418" d="M1205.5 340.4l2.0-2.6-4.1-6.2-2.0 2.5z"/>
<path fill="#c2281a" stroke="#c2281a" d="M1174.6 305.2l2.0-3.8-4.2-2.2-2.0 3.8z"/>
<path fill="#7b170f" stroke="#7b170f" d="M1370.0 398.9l1.8 3.2-4.3 1.9-1.8-3.1z"/>
<path fill="#831910" stroke="#831910" d="M1422.7 356.1l2.1-5.5-4.4 2.7-2.0 5.5z"/>
<path fill="#881a11" stroke="#881a11" d="M1151.5 322.3l2.0-6.6-4.3 3.1-2.1 6.6z"/>
<path fill="#b02418" stroke="#b02418" d="M1209.7 346.0l1.9-2.5-4.1-5.7-2.0 2.6z"/>
<path fill="#931d13" stroke="#931d13" d="M1157.8 313.7l2.1-5.9-4.3 1.9-2.1 6.0z"/>
<path fill="#7b170f" stroke="#7b170f" d="M1380.6 394.9l1.8 2.0-4.4 4.1-1.8-2.0z"/>
<path fill="#b32418" stroke="#b32418" d="M1213.8 350.8l2.0-2.6-4.2-4.7-1.9 2.5z"/>
<path fill="#590f09" stroke="#590f09" d="M1403.8 376.8l1.9-2.0-4.4 5.1-1.9 2.0z"/>
<path fill="#c8291b" stroke="#c8291b" d="M1178.8 308.6l2.0-3.8-4.2-3.4-2.0 3.8z"/>
<path fill="#6f140d" stroke="#6f140d" d="M1359.6 397.5l1.8 4.0-4.2-.8-1.8-4.0z"/>
<path fill="#63110b" stroke="#63110b" d="M1397.5 382.4l1.9-.5-4.5 5.3-1.8 .5z"/>
<path fill="#b02418" stroke="#b02418" d="M1218.0 354.4l1.9-2.5-4.1-3.7-2.0 2.6z"/>
<path fill="#bc2619" stroke="#bc2619" d="M1168.4 308.0l2.0-5.0-4.2-.8-2.0 5.0z"/>
<path fill="#cc2a1c" stroke="#cc2a1c" d="M1183.0 313.2l2.0-3.8-4.2-4.6-2.0 3.8z"/>
<path fill="#b92619" stroke="#b92619" d="M1433.4 349.1l2.0-6.4-4.3 .1-2.0 6.4z"/>
<path fill="#7d180f" stroke="#7d180f" d="M1143.0 339.4l2.1-7.1-4.4 4.1-2.1 7.0z"/>
<path fill="#71150d" stroke="#71150d" d="M1391.2 386.9l1.9 .8-4.5 5.2-1.8-.8z"/>
<path fill="#ab2217" stroke="#ab2217" d="M1162.1 313.1l2.1-5.9-4.3 .6-2.1 5.9z"/>
<path fill="#c8291b" stroke="#c8291b" d="M1187.1 318.7l2.0-3.8-4.1-5.5-2.0 3.8z"/>
<path fill="#981e14" stroke="#981e14" d="M1427.1 354.7l2.0-5.5-4.3 1.4-2.1 5.5z"/>
<path fill="#8a1b11" stroke="#8a1b11" d="M1149.4 329.2l2.1-6.9-4.4 3.1-2.0 6.9z"/>
<path fill="#811910" stroke="#811910" d="M1374.4 395.8l1.8 3.2-4.4 3.1-1.8-3.2z"/>
<path fill="#9b1f14" stroke="#9b1f14" d="M1155.8 320.3l2.0-6.6-4.3 2.0-2.0 6.6z"/>
<path fill="#c5281b" stroke="#c5281b" d="M1191.2 324.9l2.0-3.8-4.1-6.2-2.0 3.8z"/>
<path fill="#78160e" stroke="#78160e" d="M1420.8 360.6l1.9-4.5-4.3 2.7-2.0 4.5z"/>
<path fill="#c5281b" stroke="#c5281b" d="M1195.3 331.4l2.0-3.8-4.1-6.5-2.0 3.8z"/>
<path fill="#79170e" stroke="#79170e" d="M1363.9 396.9l1.8 4.0-4.3 .6-1.8-4.0z"/>
<path fill="#cf2b1d" stroke="#cf2b1d" d="M1172.6 310.2l2.0-5.0-4.2-2.2-2.0 5.0z"/>
<path fill="#c5281b" stroke="#c5281b" d="M1199.4 337.9l2.0-3.8-4.1-6.5-2.0 3.8z"/>
<path fill="#590f09" stroke="#590f09" d="M1109.0 391.2l1.9-1.7-4.3 4.6-2.0 1.7z"/>
<path fill="#c5281b" stroke="#c5281b" d="M1203.6 344.2l1.9-3.8-4.1-6.3-2.0 3.8z"/>
<path fill="#c8291b" stroke="#c8291b" d="M1207.7 349.8l2.0-3.8-4.2-5.6-1.9 3.8z"/>
<path fill="#7d180f" stroke="#7d180f" d="M1385.0 390.1l1.8 2.0-4.4 4.8-1.8-2.0z"/>
<path fill="#580f09" stroke="#580f09" d="M1408.1 372.2l2.0-1.9-4.4 4.5-1.9 2.0z"/>
<path fill="#cc2a1c" stroke="#cc2a1c" d="M1211.8 354.6l2.0-3.8-4.1-4.8-2.0 3.8z"/>
<path fill="#d92d1e" stroke="#d92d1e" d="M1176.8 313.6l2.0-5.0-4.2-3.4-2.0 5.0z"/>
<path fill="#5f110a" stroke="#5f110a" d="M1102.7 396.0l1.9-.2-4.3 3.7-1.9 .3z"/>
<path fill="#c5281b" stroke="#c5281b" d="M1166.4 313.9l2.0-5.9-4.2-.8-2.1 5.9z"/>
<path fill="#63110b" stroke="#63110b" d="M1401.9 377.3l1.9-.5-4.4 5.1-1.9 .5z"/>
<path fill="#b32418" stroke="#b32418" d="M1431.3 354.6l2.1-5.5-4.3 .1-2.0 5.5z"/>
<path fill="#cc2a1c" stroke="#cc2a1c" d="M1216.0 358.2l2.0-3.8-4.2-3.6-2.0 3.8z"/>
<path fill="#8a1b11" stroke="#8a1b11" d="M1147.3 336.3l2.1-7.1-4.3 3.1-2.1 7.1z"/>
<path fill="#b02418" stroke="#b02418" d="M1160.1 319.7l2.0-6.6-4.3 .6-2.0 6.6z"/>
<path fill="#d92d1e" stroke="#d92d1e" d="M1181.0 318.2l2.0-5.0-4.2-4.6-2.0 5.0z"/>
<path fill="#9d1f14" stroke="#9d1f14" d="M1153.7 327.3l2.1-7.0-4.3 2.0-2.1 6.9z"/>
<path fill="#831910" stroke="#831910" d="M1368.2 394.9l1.8 4.0-4.3 2.0-1.8-4.0z"/>
<path fill="#8c1b12" stroke="#8c1b12" d="M1425.1 359.2l2.0-4.5-4.4 1.4-1.9 4.5z"/>
<path fill="#861a10" stroke="#861a10" d="M1378.8 391.7l1.8 3.2-4.4 4.1-1.8-3.2z"/>
<path fill="#d52c1e" stroke="#d52c1e" d="M1185.1 323.7l2.0-5.0-4.1-5.5-2.0 5.0z"/>
<path fill="#71150d" stroke="#71150d" d="M1395.6 381.6l1.9 .8-4.4 5.3-1.9-.8z"/>
<path fill="#d52c1e" stroke="#d52c1e" d="M1170.6 316.1l2.0-5.9-4.2-2.2-2.0 5.9zM1189.2 329.9l2.0-5.0-4.1-6.2-2.0 5.0z"/>
<path fill="#d22b1d" stroke="#d22b1d" d="M1193.3 336.4l2.0-5.0-4.1-6.5-2.0 5.0z"/>
<path fill="#69130c" stroke="#69130c" d="M1418.8 363.9l2.0-3.3-4.4 2.7-2.0 3.3z"/>
<path fill="#d22b1d" stroke="#d22b1d" d="M1197.4 342.9l2.0-5.0-4.1-6.5-2.0 5.0z"/>
<path fill="#d52c1e" stroke="#d52c1e" d="M1201.6 349.1l2.0-4.9-4.2-6.3-2.0 5.0z"/>
<path fill="#5a1009" stroke="#5a1009" d="M1113.4 386.1l1.9-1.7-4.4 5.1-1.9 1.7z"/>
<path fill="#d52c1e" stroke="#d52c1e" d="M1205.7 354.8l2.0-5.0-4.1-5.6-2.0 4.9z"/>
<path fill="#c8291b" stroke="#c8291b" d="M1164.3 320.5l2.1-6.6-4.3-.8-2.0 6.6z"/>
<path fill="#7d180f" stroke="#7d180f" d="M1389.4 384.8l1.8 2.1-4.4 5.2-1.8-2.0z"/>
<path fill="#e02f1f" stroke="#e02f1f" d="M1174.8 319.5l2.0-5.9-4.2-3.4-2.0 5.9z"/>
<path fill="#d92d1e" stroke="#d92d1e" d="M1209.8 359.5l2.0-4.9-4.1-4.8-2.0 5.0z"/>
<path fill="#63110b" stroke="#63110b" d="M1107.1 391.5l1.9-.3-4.4 4.6-1.9 .2z"/>
<path fill="#881a11" stroke="#881a11" d="M1145.3 343.1l2.0-6.8-4.3 3.1-2.1 6.8z"/>
<path fill="#b32418" stroke="#b32418" d="M1158.0 326.7l2.1-7.0-4.3 .6-2.1 7.0z"/>
<path fill="#a82216" stroke="#a82216" d="M1429.3 359.1l2.0-4.5-4.2 .1-2.0 4.5z"/>
<path fill="#9d1f14" stroke="#9d1f14" d="M1151.7 334.4l2.0-7.1-4.3 1.9-2.1 7.1z"/>
<path fill="#e02f1f" stroke="#e02f1f" d="M1178.9 324.1l2.1-5.9-4.2-4.6-2.0 5.9z"/>
<path fill="#60110a" stroke="#60110a" d="M1406.3 372.8l1.8-.6-4.3 4.6-1.9 .5z"/>
<path fill="#8a1b11" stroke="#8a1b11" d="M1372.6 391.8l1.8 4.0-4.4 3.1-1.8-4.0z"/>
<path fill="#d92d1e" stroke="#d92d1e" d="M1214.0 363.2l2.0-5.0-4.2-3.6-2.0 4.9z"/>
<path fill="#e02f1f" stroke="#e02f1f" d="M1183.1 329.6l2.0-5.9-4.1-5.5-2.1 5.9z"/>
<path fill="#d92d1e" stroke="#d92d1e" d="M1168.6 322.7l2.0-6.6-4.2-2.2-2.1 6.6z"/>
<path fill="#6d140d" stroke="#6d140d" d="M1100.9 395.0l1.8 1.0-4.3 3.8-1.9-1.1z"/>
<path fill="#7b170f" stroke="#7b170f" d="M1423.1 362.5l2.0-3.3-4.3 1.4-2.0 3.3z"/>
<path fill="#881a11" stroke="#881a11" d="M1383.2 386.9l1.8 3.2-4.4 4.8-1.8-3.2z"/>
<path fill="#dc2e1f" stroke="#dc2e1f" d="M1187.2 335.8l2.0-5.9-4.1-6.2-2.0 5.9zM1191.3 342.3l2.0-5.9-4.1-6.5-2.0 5.9z"/>
<path fill="#71150d" stroke="#71150d" d="M1400.0 376.5l1.9 .8-4.4 5.1-1.9-.8z"/>
<path fill="#dc2e1f" stroke="#dc2e1f" d="M1195.4 348.8l2.0-5.9-4.1-6.5-2.0 5.9zM1199.5 355.1l2.1-6.0-4.2-6.2-2.0 5.9z"/>
<path fill="#c8291b" stroke="#c8291b" d="M1162.3 327.5l2.0-7.0-4.2-.8-2.1 7.0z"/>
<path fill="#e02f1f" stroke="#e02f1f" d="M1203.6 360.7l2.1-5.9-4.1-5.7-2.1 6.0z"/>
<path fill="#e32f20" stroke="#e32f20" d="M1172.7 326.1l2.1-6.6-4.2-3.4-2.0 6.6z"/>
<path fill="#b32418" stroke="#b32418" d="M1156.0 333.7l2.0-7.0-4.3 .6-2.0 7.1z"/>
<path fill="#5b100a" stroke="#5b100a" d="M1117.8 380.8l2.0-1.7-4.5 5.3-1.9 1.7z"/>
<path fill="#9b1f14" stroke="#9b1f14" d="M1149.6 341.1l2.1-6.7-4.4 1.9-2.0 6.8z"/>
<path fill="#e02f1f" stroke="#e02f1f" d="M1207.8 365.4l2.0-5.9-4.1-4.7-2.1 5.9z"/>
<path fill="#7f180f" stroke="#7f180f" d="M1393.8 379.5l1.8 2.1-4.4 5.3-1.8-2.1z"/>
<path fill="#e32f20" stroke="#e32f20" d="M1176.9 330.7l2.0-6.6-4.1-4.6-2.1 6.6z"/>
<path fill="#65120b" stroke="#65120b" d="M1111.5 386.4l1.9-.3-4.4 5.1-1.9 .3z"/>
<path fill="#8a1b11" stroke="#8a1b11" d="M1366.5 390.4l1.7 4.5-4.3 2.0-1.7-4.6z"/>
<path fill="#931d13" stroke="#931d13" d="M1427.4 362.4l1.9-3.3-4.2 .1-2.0 3.3z"/>
<path fill="#8e1c12" stroke="#8e1c12" d="M1377.0 387.7l1.8 4.0-4.4 4.1-1.8-4.0z"/>
<path fill="#d92d1e" stroke="#d92d1e" d="M1166.5 329.6l2.1-6.9-4.3-2.2-2.0 7.0z"/>
<path fill="#5d100a" stroke="#5d100a" d="M1410.6 369.0l1.9-.5-4.4 3.7-1.8 .6z"/>
<path fill="#e32f20" stroke="#e32f20" d="M1181.0 336.2l2.1-6.6-4.2-5.5-2.0 6.6zM1185.1 342.4l2.1-6.6-4.1-6.2-2.1 6.6z"/>
<path fill="#e02f1f" stroke="#e02f1f" d="M1189.3 348.9l2.0-6.6-4.1-6.5-2.1 6.6zM1193.4 355.4l2.0-6.6-4.1-6.5-2.0 6.6z"/>
<path fill="#71150d" stroke="#71150d" d="M1105.3 390.4l1.8 1.1-4.4 4.5-1.8-1.0z"/>
<path fill="#c8291b" stroke="#c8291b" d="M1160.2 334.5l2.1-7.0-4.3-.8-2.0 7.0z"/>
<path fill="#e02f1f" stroke="#e02f1f" d="M1197.5 361.6l2.0-6.5-4.1-6.3-2.0 6.6z"/>
<path fill="#8a1b11" stroke="#8a1b11" d="M1387.6 381.7l1.8 3.1-4.4 5.3-1.8-3.2z"/>
<path fill="#e32f20" stroke="#e32f20" d="M1170.7 333.1l2.0-7.0-4.1-3.4-2.1 6.9zM1201.6 367.3l2.0-6.6-4.1-5.6-2.0 6.5z"/>
<path fill="#6d140d" stroke="#6d140d" d="M1404.4 371.9l1.9 .9-4.4 4.5-1.9-.8z"/>
<path fill="#b02418" stroke="#b02418" d="M1153.9 340.5l2.1-6.8-4.3 .7-2.1 6.7z"/>
<path fill="#66120b" stroke="#66120b" d="M1421.2 364.4l1.9-1.9-4.3 1.4-1.9 1.9z"/>
<path fill="#961d13" stroke="#961d13" d="M1147.6 347.3l2.0-6.2-4.3 2.0-2.0 6.2z"/>
<path fill="#e32f20" stroke="#e32f20" d="M1205.8 372.0l2.0-6.6-4.2-4.7-2.0 6.6z"/>
<path fill="#e63020" stroke="#e63020" d="M1174.8 337.7l2.1-7.0-4.2-4.6-2.0 7.0z"/>
<path fill="#5a1009" stroke="#5a1009" d="M1122.2 375.6l2.0-1.7-4.4 5.2-2.0 1.7z"/>
<path fill="#d92d1e" stroke="#d92d1e" d="M1164.4 336.7l2.1-7.1-4.2-2.1-2.1 7.0z"/>
<path fill="#7b170f" stroke="#7b170f" d="M1099.1 392.7l1.8 2.3-4.4 3.7-1.8-2.3z"/>
<path fill="#e63020" stroke="#e63020" d="M1179.0 343.2l2.0-7.0-4.1-5.5-2.1 7.0z"/>
<path fill="#7d180f" stroke="#7d180f" d="M1398.2 374.4l1.8 2.1-4.4 5.1-1.8-2.1z"/>
<path fill="#e32f20" stroke="#e32f20" d="M1183.1 349.3l2.0-6.9-4.1-6.2-2.0 7.0z"/>
<path fill="#590f09" stroke="#590f09" d="M1415.0 366.4l1.9-.6-4.4 2.7-1.9 .5z"/>
<path fill="#65120b" stroke="#65120b" d="M1115.9 381.0l1.9-.2-4.4 5.3-1.9 .3z"/>
<path fill="#e32f20" stroke="#e32f20" d="M1187.2 355.9l2.1-7.0-4.2-6.5-2.0 6.9z"/>
<path fill="#911c12" stroke="#911c12" d="M1381.4 382.9l1.8 4.0-4.4 4.8-1.8-4.0z"/>
<path fill="#e32f20" stroke="#e32f20" d="M1191.3 362.4l2.1-7.0-4.1-6.5-2.1 7.0z"/>
<path fill="#c8291b" stroke="#c8291b" d="M1158.2 341.3l2.0-6.8-4.2-.8-2.1 6.8z"/>
<path fill="#e32f20" stroke="#e32f20" d="M1195.4 368.6l2.1-7.0-4.1-6.2-2.1 7.0z"/>
<path fill="#78160e" stroke="#78160e" d="M1425.4 364.3l2.0-1.9-4.3 .1-1.9 1.9z"/>
<path fill="#e32f20" stroke="#e32f20" d="M1168.6 340.1l2.1-7.0-4.2-3.5-2.1 7.1zM1199.5 374.3l2.1-7.0-4.1-5.7-2.1 7.0z"/>
<path fill="#ad2317" stroke="#ad2317" d="M1151.9 346.7l2.0-6.2-4.3 .6-2.0 6.2z"/>
<path fill="#72150d" stroke="#72150d" d="M1109.7 385.3l1.8 1.1-4.4 5.1-1.8-1.1z"/>
<path fill="#e63020" stroke="#e63020" d="M1203.7 379.0l2.1-7.0-4.2-4.7-2.1 7.0zM1172.8 344.7l2.0-7.0-4.1-4.6-2.1 7.0z"/>
<path fill="#6a130c" stroke="#6a130c" d="M1408.8 368.2l1.8 .8-4.3 3.8-1.9-.9z"/>
<path fill="#8a1b11" stroke="#8a1b11" d="M1392.0 376.4l1.8 3.1-4.4 5.3-1.8-3.1z"/>
<path fill="#d92d1e" stroke="#d92d1e" d="M1162.4 343.5l2.0-6.8-4.2-2.2-2.0 6.8z"/>
<path fill="#e63020" stroke="#e63020" d="M1176.9 350.2l2.1-7.0-4.2-5.5-2.0 7.0z"/>
<path fill="#e32f20" stroke="#e32f20" d="M1181.0 356.4l2.1-7.1-4.1-6.1-2.1 7.0z"/>
<path fill="#590f09" stroke="#590f09" d="M1419.3 364.9l1.9-.5-4.3 1.4-1.9 .6z"/>
<path fill="#e32f20" stroke="#e32f20" d="M1185.1 362.9l2.1-7.0-4.1-6.6-2.1 7.1zM1189.2 369.4l2.1-7.0-4.1-6.5-2.1 7.0z"/>
<path fill="#7f180f" stroke="#7f180f" d="M1103.5 388.1l1.8 2.3-4.4 4.6-1.8-2.3z"/>
<path fill="#5a0f09" stroke="#5a0f09" d="M1126.6 370.8l2.0-1.7-4.4 4.8-2.0 1.7z"/>
<path fill="#580f09" stroke="#580f09" d="M1248.2 344.2l1.9-2.5-4.4 4.7-1.9 2.5z"/>
<path fill="#e32f20" stroke="#e32f20" d="M1193.4 375.7l2.0-7.1-4.1-6.2-2.1 7.0z"/>
<path fill="#c5281b" stroke="#c5281b" d="M1156.1 347.5l2.1-6.2-4.3-.8-2.0 6.2z"/>
<path fill="#e32f20" stroke="#e32f20" d="M1166.6 346.9l2.0-6.8-4.2-3.4-2.0 6.8z"/>
<path fill="#e63020" stroke="#e63020" d="M1197.5 381.3l2.0-7.0-4.1-5.7-2.0 7.1z"/>
<path fill="#7b170f" stroke="#7b170f" d="M1402.6 369.9l1.8 2.0-4.4 4.6-1.8-2.1z"/>
<path fill="#65120b" stroke="#65120b" d="M1120.4 375.8l1.8-.2-4.4 5.2-1.9 .2z"/>
<path fill="#911c12" stroke="#911c12" d="M1385.8 377.7l1.8 4.0-4.4 5.2-1.8-4.0z"/>
<path fill="#a82216" stroke="#a82216" d="M1149.8 352.1l2.1-5.4-4.3 .6-2.0 5.4z"/>
<path fill="#e32f20" stroke="#e32f20" d="M1170.7 351.5l2.1-6.8-4.2-4.6-2.0 6.8z"/>
<path fill="#65120b" stroke="#65120b" d="M1413.1 365.5l1.9 .9-4.4 2.6-1.8-.8z"/>
<path fill="#e32f20" stroke="#e32f20" d="M1174.9 357.0l2.0-6.8-4.1-5.5-2.1 6.8z"/>
<path fill="#d92d1e" stroke="#d92d1e" d="M1160.3 349.7l2.1-6.2-4.2-2.2-2.1 6.2z"/>
<path fill="#74160e" stroke="#74160e" d="M1114.1 380.0l1.8 1.0-4.4 5.4-1.8-1.1z"/>
<path fill="#5f110a" stroke="#5f110a" d="M1423.5 364.9l1.9-.6-4.2 .1-1.9 .5z"/>
<path fill="#881a11" stroke="#881a11" d="M1097.3 389.3l1.8 3.4-4.4 3.7-1.8-3.3z"/>
<path fill="#e32f20" stroke="#e32f20" d="M1179.0 363.2l2.0-6.8-4.1-6.2-2.0 6.8z"/>
<path fill="#8a1b11" stroke="#8a1b11" d="M1396.4 371.3l1.8 3.1-4.4 5.1-1.8-3.1z"/>
<path fill="#e32f20" stroke="#e32f20" d="M1183.1 369.7l2.0-6.8-4.1-6.5-2.0 6.8z"/>
<path fill="#e02f1f" stroke="#e02f1f" d="M1187.2 376.2l2.0-6.8-4.1-6.5-2.0 6.8z"/>
<path fill="#e32f20" stroke="#e32f20" d="M1191.3 382.5l2.1-6.8-4.2-6.3-2.0 6.8zM1195.4 388.1l2.1-6.8-4.1-5.6-2.1 6.8z"/>
<path fill="#e02f1f" stroke="#e02f1f" d="M1164.5 353.1l2.1-6.2-4.2-3.4-2.1 6.2z"/>
<path fill="#bf271a" stroke="#bf271a" d="M1154.1 352.9l2.0-5.4-4.2-.8-2.1 5.4z"/>
<path fill="#961d13" stroke="#961d13" d="M1379.6 378.3l1.8 4.6-4.4 4.8-1.8-4.6z"/>
<path fill="#7f180f" stroke="#7f180f" d="M1107.9 383.0l1.8 2.3-4.4 5.1-1.8-2.3z"/>
<path fill="#580f09" stroke="#580f09" d="M1252.6 339.0l1.9-2.5-4.4 5.2-1.9 2.5z"/>
<path fill="#5e100a" stroke="#5e100a" d="M1246.2 348.0l2.0-3.8-4.4 4.7-2.0 3.8z"/>
<path fill="#79170e" stroke="#79170e" d="M1406.9 366.1l1.9 2.1-4.4 3.7-1.8-2.0z"/>
<path fill="#e32f20" stroke="#e32f20" d="M1168.7 357.7l2.0-6.2-4.1-4.6-2.1 6.2z"/>
<path fill="#64120b" stroke="#64120b" d="M1124.7 371.0l1.9-.2-4.4 4.8-1.8 .2z"/>
<path fill="#5e100a" stroke="#5e100a" d="M1417.4 364.1l1.9 .8-4.3 1.5-1.9-.9z"/>
<path fill="#911c12" stroke="#911c12" d="M1390.2 372.4l1.8 4.0-4.4 5.3-1.8-4.0z"/>
<path fill="#e02f1f" stroke="#e02f1f" d="M1172.8 363.2l2.1-6.2-4.2-5.5-2.0 6.2z"/>
<path fill="#d22b1d" stroke="#d22b1d" d="M1158.3 355.0l2.0-5.3-4.2-2.2-2.0 5.4z"/>
<path fill="#e02f1f" stroke="#e02f1f" d="M1176.9 369.4l2.1-6.2-4.1-6.2-2.1 6.2z"/>
<path fill="#dc2e1f" stroke="#dc2e1f" d="M1181.0 375.9l2.1-6.2-4.1-6.5-2.1 6.2zM1185.1 382.4l2.1-6.2-4.1-6.5-2.1 6.2z"/>
<path fill="#8a1b11" stroke="#8a1b11" d="M1101.7 384.8l1.8 3.3-4.4 4.6-1.8-3.4z"/>
<path fill="#e02f1f" stroke="#e02f1f" d="M1189.3 388.7l2.0-6.2-4.1-6.3-2.1 6.2z"/>
<path fill="#72150d" stroke="#72150d" d="M1118.5 374.8l1.9 1.0-4.5 5.2-1.8-1.0z"/>
<path fill="#881a11" stroke="#881a11" d="M1400.8 366.7l1.8 3.2-4.4 4.5-1.8-3.1z"/>
<path fill="#dc2e1f" stroke="#dc2e1f" d="M1162.5 358.5l2.0-5.4-4.2-3.4-2.0 5.3z"/>
<path fill="#b32418" stroke="#b32418" d="M1152.1 357.2l2.0-4.3-4.3-.8-1.9 4.3z"/>
<path fill="#590f09" stroke="#590f09" d="M1421.7 364.0l1.8 .9-4.2 0-1.9-.8z"/>
<path fill="#961d13" stroke="#961d13" d="M1384.0 373.1l1.8 4.6-4.4 5.2-1.8-4.6z"/>
<path fill="#74160e" stroke="#74160e" d="M1411.3 363.5l1.8 2.0-4.3 2.7-1.9-2.1z"/>
<path fill="#dc2e1f" stroke="#dc2e1f" d="M1166.7 363.1l2.0-5.4-4.2-4.6-2.0 5.4z"/>
<path fill="#811910" stroke="#811910" d="M1112.3 377.7l1.8 2.3-4.4 5.3-1.8-2.3z"/>
<path fill="#5c100a" stroke="#5c100a" d="M1250.6 342.9l2.0-3.9-4.4 5.2-2.0 3.8z"/>
<path fill="#dc2e1f" stroke="#dc2e1f" d="M1170.8 368.6l2.0-5.4-4.1-5.5-2.0 5.4z"/>
<path fill="#d92d1e" stroke="#d92d1e" d="M1174.9 374.7l2.0-5.3-4.1-6.2-2.0 5.4z"/>
<path fill="#8e1c12" stroke="#8e1c12" d="M1095.5 385.2l1.8 4.1-4.4 3.8-1.8-4.2z"/>
<path fill="#c8291b" stroke="#c8291b" d="M1156.3 359.3l2.0-4.3-4.2-2.1-2.0 4.3z"/>
<path fill="#d52c1e" stroke="#d52c1e" d="M1179.0 381.2l2.0-5.3-4.1-6.5-2.0 5.3z"/>
<path fill="#911c12" stroke="#911c12" d="M1394.6 367.3l1.8 4.0-4.4 5.1-1.8-4.0z"/>
<path fill="#d52c1e" stroke="#d52c1e" d="M1183.1 387.8l2.0-5.4-4.1-6.5-2.0 5.3z"/>
<path fill="#d92d1e" stroke="#d92d1e" d="M1187.2 394.0l2.1-5.3-4.2-6.3-2.0 5.4z"/>
<path fill="#8a1b11" stroke="#8a1b11" d="M1106.1 379.7l1.8 3.3-4.4 5.1-1.8-3.3z"/>
<path fill="#72150d" stroke="#72150d" d="M1122.9 370.0l1.8 1.0-4.3 4.8-1.9-1.0z"/>
<path fill="#861a10" stroke="#861a10" d="M1405.1 363.0l1.8 3.1-4.3 3.8-1.8-3.2z"/>
<path fill="#cf2b1d" stroke="#cf2b1d" d="M1160.5 362.8l2.0-4.3-4.2-3.5-2.0 4.3z"/>
<path fill="#6c140c" stroke="#6c140c" d="M1415.6 362.0l1.8 2.1-4.3 1.4-1.8-2.0z"/>
<path fill="#d22b1d" stroke="#d22b1d" d="M1164.7 367.3l2.0-4.2-4.2-4.6-2.0 4.3z"/>
<path fill="#961d13" stroke="#961d13" d="M1388.4 367.8l1.8 4.6-4.4 5.3-1.8-4.6z"/>
<path fill="#63110b" stroke="#63110b" d="M1248.6 347.8l2.0-4.9-4.4 5.1-2.0 5.0z"/>
<path fill="#cf2b1d" stroke="#cf2b1d" d="M1168.8 372.9l2.0-4.3-4.1-5.5-2.0 4.2z"/>
<path fill="#811910" stroke="#811910" d="M1116.7 372.5l1.8 2.3-4.4 5.2-1.8-2.3z"/>
<path fill="#580f09" stroke="#580f09" d="M1261.4 328.6l1.9-2.5-4.4 5.1-1.9 2.5z"/>
<path fill="#5b100a" stroke="#5b100a" d="M1255.0 337.5l2.0-3.8-4.4 5.3-2.0 3.9z"/>
<path fill="#cc2a1c" stroke="#cc2a1c" d="M1172.9 379.0l2.0-4.3-4.1-6.1-2.0 4.3z"/>
<path fill="#911c12" stroke="#911c12" d="M1099.9 380.6l1.8 4.2-4.4 4.5-1.8-4.1z"/>
<path fill="#cc2a1c" stroke="#cc2a1c" d="M1177.0 385.5l2.0-4.3-4.1-6.5-2.0 4.3zM1181.1 392.1l2.0-4.3-4.1-6.6-2.0 4.3z"/>
<path fill="#911c12" stroke="#911c12" d="M1399.0 362.7l1.8 4.0-4.4 4.6-1.8-4.0z"/>
<path fill="#63110b" stroke="#63110b" d="M1419.9 362.0l1.8 2.0-4.3 .1-1.8-2.1z"/>
<path fill="#7f180f" stroke="#7f180f" d="M1409.5 360.3l1.8 3.2-4.4 2.6-1.8-3.1z"/>
<path fill="#6f140d" stroke="#6f140d" d="M1127.3 365.9l1.8 1.1-4.4 4.0-1.8-1.0z"/>
<path fill="#8c1b12" stroke="#8c1b12" d="M1110.5 374.3l1.8 3.4-4.4 5.3-1.8-3.3z"/>
<path fill="#bc2619" stroke="#bc2619" d="M1158.6 365.8l1.9-3.0-4.2-3.5-1.9 3.0z"/>
<path fill="#5e100a" stroke="#5e100a" d="M1315.7 337.1l1.8 2.7-4.1-6.3-1.8-2.7z"/>
<path fill="#5f110a" stroke="#5f110a" d="M1319.8 343.6l1.8 2.7-4.1-6.5-1.8-2.7z"/>
<path fill="#bc2619" stroke="#bc2619" d="M1162.7 370.4l2.0-3.1-4.2-4.5-1.9 3.0z"/>
<path fill="#931d13" stroke="#931d13" d="M1093.7 380.6l1.8 4.6-4.4 3.7-1.7-4.6z"/>
<path fill="#5f110a" stroke="#5f110a" d="M1323.9 350.1l1.8 2.7-4.1-6.5-1.8-2.7z"/>
<path fill="#961d13" stroke="#961d13" d="M1392.8 362.7l1.8 4.6-4.4 5.1-1.8-4.6z"/>
<path fill="#63110b" stroke="#63110b" d="M1253.0 342.5l2.0-5.0-4.4 5.4-2.0 4.9z"/>
<path fill="#bc2619" stroke="#bc2619" d="M1166.8 375.9l2.0-3.0-4.1-5.6-2.0 3.1z"/>
<path fill="#7f180f" stroke="#7f180f" d="M1121.1 367.7l1.8 2.3-4.4 4.8-1.8-2.3z"/>
<path fill="#580f09" stroke="#580f09" d="M1265.8 323.9l1.9-2.5-4.4 4.7-1.9 2.5z"/>
<path fill="#5c100a" stroke="#5c100a" d="M1259.4 332.4l2.0-3.8-4.4 5.1-2.0 3.8z"/>
<path fill="#b92619" stroke="#b92619" d="M1171.0 382.0l1.9-3.0-4.1-6.1-2.0 3.0z"/>
<path fill="#931d13" stroke="#931d13" d="M1104.3 375.5l1.8 4.2-4.4 5.1-1.8-4.2z"/>
<path fill="#b92619" stroke="#b92619" d="M1175.1 388.5l1.9-3.0-4.1-6.5-1.9 3.0z"/>
<path fill="#8c1b12" stroke="#8c1b12" d="M1403.4 359.0l1.7 4.0-4.3 3.7-1.8-4.0z"/>
<path fill="#78160e" stroke="#78160e" d="M1413.8 358.9l1.8 3.1-4.3 1.5-1.8-3.2z"/>
<path fill="#8c1b12" stroke="#8c1b12" d="M1114.9 369.1l1.8 3.4-4.4 5.2-1.8-3.4z"/>
<path fill="#981e14" stroke="#981e14" d="M1386.7 363.0l1.7 4.8-4.4 5.3-1.7-4.8z"/>
<path fill="#5e100a" stroke="#5e100a" d="M1301.5 318.8l1.8 1.6-4.2-3.7-1.8-1.6z"/>
<path fill="#961d13" stroke="#961d13" d="M1098.1 376.0l1.8 4.6-4.4 4.6-1.8-4.6z"/>
<path fill="#6d140d" stroke="#6d140d" d="M1418.1 358.8l1.8 3.2-4.3 0-1.8-3.1z"/>
<path fill="#69130c" stroke="#69130c" d="M1251.0 348.4l2.0-5.9-4.4 5.3-2.0 5.9z"/>
<path fill="#961d13" stroke="#961d13" d="M1397.2 358.2l1.8 4.5-4.4 4.6-1.8-4.6z"/>
<path fill="#7d180f" stroke="#7d180f" d="M1125.4 363.6l1.9 2.3-4.4 4.1-1.8-2.3z"/>
<path fill="#5a0f09" stroke="#5a0f09" d="M1270.2 320.0l1.9-2.5-4.4 3.9-1.9 2.5z"/>
<path fill="#63110b" stroke="#63110b" d="M1257.4 337.3l2.0-4.9-4.4 5.1-2.0 5.0z"/>
<path fill="#881a11" stroke="#881a11" d="M1407.7 356.3l1.8 4.0-4.4 2.7-1.7-4.0z"/>
<path fill="#64120b" stroke="#64120b" d="M1305.6 323.6l1.9 1.6-4.2-4.8-1.8-1.6z"/>
<path fill="#5e100a" stroke="#5e100a" d="M1263.8 327.7l2.0-3.8-4.4 4.7-2.0 3.8z"/>
<path fill="#931d13" stroke="#931d13" d="M1108.7 370.2l1.8 4.1-4.4 5.4-1.8-4.2z"/>
<path fill="#68130c" stroke="#68130c" d="M1309.8 329.3l1.8 1.5-4.1-5.6-1.9-1.6z"/>
<path fill="#69130c" stroke="#69130c" d="M1313.9 335.5l1.8 1.6-4.1-6.3-1.8-1.5z"/>
<path fill="#6a130c" stroke="#6a130c" d="M1318.0 342.0l1.8 1.6-4.1-6.5-1.8-1.6zM1322.1 348.6l1.8 1.5-4.1-6.5-1.8-1.6z"/>
<path fill="#5e100a" stroke="#5e100a" d="M1291.2 312.5l1.9 .2-4.3-1.0-1.8-.3z"/>
<path fill="#69130c" stroke="#69130c" d="M1326.2 354.7l1.8 1.6-4.1-6.2-1.8-1.5z"/>
<path fill="#5b100a" stroke="#5b100a" d="M1280.8 312.9l1.9-1.1-4.3 1.6-1.9 1.2z"/>
<path fill="#66120b" stroke="#66120b" d="M1330.3 360.2l1.9 1.6-4.2-5.5-1.8-1.6z"/>
<path fill="#8a1b11" stroke="#8a1b11" d="M1119.3 364.3l1.8 3.4-4.4 4.8-1.8-3.4z"/>
<path fill="#931d13" stroke="#931d13" d="M1092.0 375.7l1.7 4.9-4.3 3.7-1.8-4.8z"/>
<path fill="#981e14" stroke="#981e14" d="M1391.1 357.9l1.7 4.8-4.4 5.1-1.7-4.8z"/>
<path fill="#6d140d" stroke="#6d140d" d="M1248.9 355.0l2.1-6.6-4.4 5.3-2.1 6.6z"/>
<path fill="#63110b" stroke="#63110b" d="M1334.5 364.8l1.8 1.5-4.1-4.5-1.9-1.6z"/>
<path fill="#811910" stroke="#811910" d="M1412.0 354.9l1.8 4.0-4.3 1.4-1.8-4.0z"/>
<path fill="#961d13" stroke="#961d13" d="M1102.5 370.9l1.8 4.6-4.4 5.1-1.8-4.6z"/>
<path fill="#911c12" stroke="#911c12" d="M1401.6 354.4l1.8 4.6-4.4 3.7-1.8-4.5z"/>
<path fill="#5f110a" stroke="#5f110a" d="M1274.5 317.1l2.0-2.5-4.4 2.9-1.9 2.5z"/>
<path fill="#69130c" stroke="#69130c" d="M1295.4 314.9l1.9 .2-4.2-2.4-1.9-.2z"/>
<path fill="#6a130c" stroke="#6a130c" d="M1255.4 343.3l2.0-6.0-4.4 5.2-2.0 5.9z"/>
<path fill="#66120b" stroke="#66120b" d="M1261.8 332.7l2.0-5.0-4.4 4.7-2.0 4.9z"/>
<path fill="#63110b" stroke="#63110b" d="M1268.2 323.8l2.0-3.8-4.4 3.9-2.0 3.8z"/>
<path fill="#66120b" stroke="#66120b" d="M1285.1 312.6l1.9-1.2-4.3 .4-1.9 1.1z"/>
<path fill="#931d13" stroke="#931d13" d="M1113.1 365.0l1.8 4.1-4.4 5.2-1.8-4.1z"/>
<path fill="#71150d" stroke="#71150d" d="M1299.6 318.6l1.9 .2-4.2-3.7-1.9-.2z"/>
<path fill="#78160e" stroke="#78160e" d="M1303.7 323.4l1.9 .2-4.1-4.8-1.9-.2z"/>
<path fill="#76160e" stroke="#76160e" d="M1416.3 354.8l1.8 4.0-4.3 .1-1.8-4.0z"/>
<path fill="#881a11" stroke="#881a11" d="M1123.7 360.3l1.7 3.3-4.3 4.1-1.8-3.4z"/>
<path fill="#961d13" stroke="#961d13" d="M1096.4 371.2l1.7 4.8-4.4 4.6-1.7-4.9z"/>
<path fill="#79170e" stroke="#79170e" d="M1307.9 329.0l1.9 .3-4.2-5.7-1.9-.2z"/>
<path fill="#961d13" stroke="#961d13" d="M1395.5 353.3l1.7 4.9-4.4 4.5-1.7-4.8z"/>
<path fill="#6a130c" stroke="#6a130c" d="M1278.8 315.4l2.0-2.5-4.3 1.7-2.0 2.5z"/>
<path fill="#7b170f" stroke="#7b170f" d="M1312.0 335.3l1.9 .2-4.1-6.2-1.9-.3z"/>
<path fill="#6f140d" stroke="#6f140d" d="M1253.3 349.9l2.1-6.6-4.4 5.1-2.1 6.6z"/>
<path fill="#78160e" stroke="#78160e" d="M1289.3 313.6l1.9-1.1-4.2-1.1-1.9 1.2z"/>
<path fill="#8c1b12" stroke="#8c1b12" d="M1405.9 351.8l1.8 4.5-4.3 2.7-1.8-4.6z"/>
<path fill="#7d180f" stroke="#7d180f" d="M1316.1 341.8l1.9 .2-4.1-6.5-1.9-.2zM1320.2 348.3l1.9 .3-4.1-6.6-1.9-.2z"/>
<path fill="#7b170f" stroke="#7b170f" d="M1324.3 354.4l1.9 .3-4.1-6.1-1.9-.3z"/>
<path fill="#961d13" stroke="#961d13" d="M1106.9 365.6l1.8 4.6-4.4 5.3-1.8-4.6z"/>
<path fill="#6f140d" stroke="#6f140d" d="M1259.8 338.6l2.0-5.9-4.4 4.6-2.0 6.0z"/>
<path fill="#6d140d" stroke="#6d140d" d="M1272.5 320.9l2.0-3.8-4.3 2.9-2.0 3.8z"/>
<path fill="#79170e" stroke="#79170e" d="M1328.5 359.9l1.8 .3-4.1-5.5-1.9-.3z"/>
<path fill="#6d140d" stroke="#6d140d" d="M1266.2 328.8l2.0-5.0-4.4 3.9-2.0 5.0z"/>
<path fill="#76160e" stroke="#76160e" d="M1332.6 364.5l1.9 .3-4.2-4.6-1.8-.3z"/>
<path fill="#881a11" stroke="#881a11" d="M1293.5 316.0l1.9-1.1-4.2-2.4-1.9 1.1z"/>
<path fill="#911c12" stroke="#911c12" d="M1117.5 360.2l1.8 4.1-4.4 4.8-1.8-4.1z"/>
<path fill="#931d13" stroke="#931d13" d="M1090.2 371.0l1.8 4.7-4.4 3.8-1.8-4.7z"/>
<path fill="#7f180f" stroke="#7f180f" d="M1283.1 315.1l2.0-2.5-4.3 .3-2.0 2.5z"/>
<path fill="#981e14" stroke="#981e14" d="M1389.3 353.1l1.8 4.8-4.4 5.1-1.8-4.8z"/>
<path fill="#6f140d" stroke="#6f140d" d="M1336.8 367.9l1.9 .3-4.2-3.4-1.9-.3z"/>
<path fill="#72150d" stroke="#72150d" d="M1251.3 356.8l2.0-6.9-4.4 5.1-2.0 7.0z"/>
<path fill="#861a10" stroke="#861a10" d="M1410.2 350.3l1.8 4.6-4.3 1.4-1.8-4.5z"/>
<path fill="#911c12" stroke="#911c12" d="M1297.7 319.7l1.9-1.1-4.2-3.7-1.9 1.1z"/>
<path fill="#981e14" stroke="#981e14" d="M1100.8 366.1l1.7 4.8-4.4 5.1-1.7-4.8z"/>
<path fill="#931d13" stroke="#931d13" d="M1399.8 349.6l1.8 4.8-4.4 3.8-1.7-4.9z"/>
<path fill="#74160e" stroke="#74160e" d="M1257.7 345.2l2.1-6.6-4.4 4.7-2.1 6.6z"/>
<path fill="#7f180f" stroke="#7f180f" d="M1276.8 319.2l2.0-3.8-4.3 1.7-2.0 3.8z"/>
<path fill="#931d13" stroke="#931d13" d="M1301.8 324.5l1.9-1.1-4.1-4.8-1.9 1.1z"/>
<path fill="#76160e" stroke="#76160e" d="M1264.1 334.7l2.1-5.9-4.4 3.9-2.0 5.9z"/>
<path fill="#79170e" stroke="#79170e" d="M1270.5 325.9l2.0-5.0-4.3 2.9-2.0 5.0z"/>
<path fill="#961d13" stroke="#961d13" d="M1111.3 360.4l1.8 4.6-4.4 5.2-1.8-4.6zM1306.0 330.1l1.9-1.1-4.2-5.6-1.9 1.1z"/>
<path fill="#981e14" stroke="#981e14" d="M1287.4 316.1l1.9-2.5-4.2-1.0-2.0 2.5z"/>
<path fill="#961d13" stroke="#961d13" d="M1310.1 336.4l1.9-1.1-4.1-6.3-1.9 1.1zM1314.2 342.9l1.9-1.1-4.1-6.5-1.9 1.1zM1318.3 349.4l1.9-1.1-4.1-6.5-1.9 1.1zM1322.4 355.6l1.9-1.2-4.1-6.1-1.9 1.1z"/>
<path fill="#7b170f" stroke="#7b170f" d="M1414.5 350.2l1.8 4.6-4.3 .1-1.8-4.6z"/>
<path fill="#961d13" stroke="#961d13" d="M1326.5 361.1l2.0-1.2-4.2-5.5-1.9 1.2zM1094.6 366.5l1.8 4.7-4.4 4.5-1.8-4.7z"/>
<path fill="#ab2217" stroke="#ab2217" d="M1291.6 318.5l1.9-2.5-4.2-2.4-1.9 2.5z"/>
<path fill="#961d13" stroke="#961d13" d="M1393.7 348.6l1.8 4.7-4.4 4.6-1.8-4.8z"/>
<path fill="#981e14" stroke="#981e14" d="M1281.1 318.9l2.0-3.8-4.3 .3-2.0 3.8z"/>
<path fill="#931d13" stroke="#931d13" d="M1330.7 365.6l1.9-1.1-4.1-4.6-2.0 1.2z"/>
<path fill="#8e1c12" stroke="#8e1c12" d="M1404.2 346.9l1.7 4.9-4.3 2.6-1.8-4.8z"/>
<path fill="#78160e" stroke="#78160e" d="M1255.7 352.2l2.0-7.0-4.4 4.7-2.0 6.9z"/>
<path fill="#5b100a" stroke="#5b100a" d="M1204.7 420.3l1.9-.2-4.3 .3-1.9 .3z"/>
<path fill="#981e14" stroke="#981e14" d="M1105.2 360.7l1.7 4.9-4.4 5.3-1.7-4.8z"/>
<path fill="#8e1c12" stroke="#8e1c12" d="M1334.9 369.1l1.9-1.2-4.2-3.4-1.9 1.1z"/>
<path fill="#7b170f" stroke="#7b170f" d="M1262.1 341.3l2.0-6.6-4.3 3.9-2.1 6.6z"/>
<path fill="#8e1c12" stroke="#8e1c12" d="M1274.8 324.2l2.0-5.0-4.3 1.7-2.0 5.0z"/>
<path fill="#b02418" stroke="#b02418" d="M1295.7 322.2l2.0-2.5-4.2-3.7-1.9 2.5z"/>
<path fill="#831910" stroke="#831910" d="M1268.5 331.8l2.0-5.9-4.3 2.9-2.1 5.9z"/>
<path fill="#5d100a" stroke="#5d100a" d="M1194.3 418.6l1.9 1.1-4.3-2.4-1.8-1.1z"/>
<path fill="#961d13" stroke="#961d13" d="M1115.7 355.6l1.8 4.6-4.4 4.8-1.8-4.6z"/>
<path fill="#b32418" stroke="#b32418" d="M1299.9 327.0l1.9-2.5-4.1-4.8-2.0 2.5zM1285.4 319.9l2.0-3.8-4.3-1.0-2.0 3.8z"/>
<path fill="#8e1c12" stroke="#8e1c12" d="M1088.4 366.8l1.8 4.2-4.4 3.8-1.7-4.3z"/>
<path fill="#b02418" stroke="#b02418" d="M1304.0 332.6l2.0-2.5-4.2-5.6-1.9 2.5z"/>
<path fill="#580f09" stroke="#580f09" d="M1209.0 418.6l1.9-.2-4.3 1.7-1.9 .2z"/>
<path fill="#b02418" stroke="#b02418" d="M1308.1 338.9l2.0-2.5-4.1-6.3-2.0 2.5z"/>
<path fill="#78160e" stroke="#78160e" d="M1253.6 359.2l2.1-7.0-4.4 4.6-2.1 7.1z"/>
<path fill="#b02418" stroke="#b02418" d="M1312.2 345.4l2.0-2.5-4.1-6.5-2.0 2.5z"/>
<path fill="#881a11" stroke="#881a11" d="M1408.5 345.5l1.7 4.8-4.3 1.5-1.7-4.9z"/>
<path fill="#b02418" stroke="#b02418" d="M1316.4 351.9l1.9-2.5-4.1-6.5-2.0 2.5z"/>
<path fill="#580f09" stroke="#580f09" d="M1198.5 419.6l1.9 1.1-4.2-1.0-1.9-1.1z"/>
<path fill="#961d13" stroke="#961d13" d="M1099.0 361.4l1.8 4.7-4.4 5.1-1.8-4.7z"/>
<path fill="#b02418" stroke="#b02418" d="M1320.5 358.1l1.9-2.5-4.1-6.2-1.9 2.5z"/>
<path fill="#931d13" stroke="#931d13" d="M1398.1 344.9l1.7 4.7-4.3 3.7-1.8-4.7z"/>
<path fill="#a82216" stroke="#a82216" d="M1279.1 323.8l2.0-4.9-4.3 .3-2.0 5.0z"/>
<path fill="#c5281b" stroke="#c5281b" d="M1289.6 322.3l2.0-3.8-4.2-2.4-2.0 3.8z"/>
<path fill="#b02418" stroke="#b02418" d="M1324.6 363.6l1.9-2.5-4.1-5.5-1.9 2.5z"/>
<path fill="#7f180f" stroke="#7f180f" d="M1260.0 348.2l2.1-6.9-4.4 3.9-2.0 7.0z"/>
<path fill="#981e14" stroke="#981e14" d="M1272.8 330.1l2.0-5.9-4.3 1.7-2.0 5.9z"/>
<path fill="#8a1b11" stroke="#8a1b11" d="M1266.4 338.4l2.1-6.6-4.4 2.9-2.0 6.6z"/>
<path fill="#580f09" stroke="#580f09" d="M1219.6 411.5l1.9-1.6-4.3 3.9-2.0 1.7z"/>
<path fill="#b32418" stroke="#b32418" d="M1328.8 368.1l1.9-2.5-4.2-4.5-1.9 2.5z"/>
<path fill="#981e14" stroke="#981e14" d="M1109.6 355.5l1.7 4.9-4.4 5.2-1.7-4.9z"/>
<path fill="#5d100a" stroke="#5d100a" d="M1184.1 410.3l1.8 2.3-4.1-4.8-1.9-2.3z"/>
<path fill="#cc2a1c" stroke="#cc2a1c" d="M1293.8 326.0l1.9-3.8-4.1-3.7-2.0 3.8z"/>
<path fill="#5b100a" stroke="#5b100a" d="M1202.8 419.3l1.9 1.0-4.3 .4-1.9-1.1z"/>
<path fill="#b02418" stroke="#b02418" d="M1332.9 371.6l2.0-2.5-4.2-3.5-1.9 2.5z"/>
<path fill="#7d180f" stroke="#7d180f" d="M1412.8 345.4l1.7 4.8-4.3 .1-1.7-4.8z"/>
<path fill="#c2281a" stroke="#c2281a" d="M1283.4 324.9l2.0-5.0-4.3-1.0-2.0 4.9z"/>
<path fill="#5c100a" stroke="#5c100a" d="M1213.3 415.7l1.9-.2-4.3 2.9-1.9 .2z"/>
<path fill="#590f09" stroke="#590f09" d="M1188.3 413.9l1.8 2.3-4.2-3.6-1.8-2.3z"/>
<path fill="#cc2a1c" stroke="#cc2a1c" d="M1297.9 330.8l2.0-3.8-4.2-4.8-1.9 3.8z"/>
<path fill="#911c12" stroke="#911c12" d="M1092.8 362.2l1.8 4.3-4.4 4.5-1.8-4.2z"/>
<path fill="#931d13" stroke="#931d13" d="M1391.9 344.2l1.8 4.4-4.4 4.5-1.8-4.3z"/>
<path fill="#c8291b" stroke="#c8291b" d="M1302.0 336.5l2.0-3.9-4.1-5.6-2.0 3.8z"/>
<path fill="#7f180f" stroke="#7f180f" d="M1258.0 355.3l2.0-7.1-4.3 4.0-2.1 7.0z"/>
<path fill="#8e1c12" stroke="#8e1c12" d="M1402.4 342.2l1.8 4.7-4.4 2.7-1.7-4.7z"/>
<path fill="#b02418" stroke="#b02418" d="M1277.1 329.8l2.0-6.0-4.3 .4-2.0 5.9z"/>
<path fill="#c5281b" stroke="#c5281b" d="M1306.2 342.7l1.9-3.8-4.1-6.3-2.0 3.9zM1310.3 349.2l1.9-3.8-4.1-6.5-1.9 3.8z"/>
<path fill="#580f09" stroke="#580f09" d="M1192.5 416.3l1.8 2.3-4.2-2.4-1.8-2.3z"/>
<path fill="#8c1b12" stroke="#8c1b12" d="M1264.4 345.4l2.0-7.0-4.3 2.9-2.1 6.9z"/>
<path fill="#981e14" stroke="#981e14" d="M1103.4 356.0l1.8 4.7-4.4 5.4-1.8-4.7z"/>
<path fill="#c5281b" stroke="#c5281b" d="M1314.4 355.7l2.0-3.8-4.2-6.5-1.9 3.8z"/>
<path fill="#9d1f14" stroke="#9d1f14" d="M1270.8 336.7l2.0-6.6-4.3 1.7-2.1 6.6z"/>
<path fill="#d22b1d" stroke="#d22b1d" d="M1287.6 327.3l2.0-5.0-4.2-2.4-2.0 5.0z"/>
<path fill="#c5281b" stroke="#c5281b" d="M1318.5 361.9l2.0-3.8-4.1-6.2-2.0 3.8z"/>
<path fill="#c8291b" stroke="#c8291b" d="M1322.6 367.4l2.0-3.8-4.1-5.5-2.0 3.8z"/>
<path fill="#63110b" stroke="#63110b" d="M1207.1 417.6l1.9 1.0-4.3 1.7-1.9-1.0z"/>
<path fill="#590f09" stroke="#590f09" d="M1224.0 406.8l1.9-1.6-4.4 4.7-1.9 1.6z"/>
<path fill="#981e14" stroke="#981e14" d="M1114.0 350.7l1.7 4.9-4.4 4.8-1.7-4.9z"/>
<path fill="#cc2a1c" stroke="#cc2a1c" d="M1326.8 371.9l2.0-3.8-4.2-4.5-2.0 3.8z"/>
<path fill="#d92d1e" stroke="#d92d1e" d="M1291.8 331.0l2.0-5.0-4.2-3.7-2.0 5.0z"/>
<path fill="#5d100a" stroke="#5d100a" d="M1196.7 417.3l1.8 2.3-4.2-1.0-1.8-2.3z"/>
<path fill="#c8291b" stroke="#c8291b" d="M1281.3 330.8l2.1-5.9-4.3-1.1-2.0 6.0z"/>
<path fill="#60110a" stroke="#60110a" d="M1217.7 411.8l1.9-.3-4.4 4.0-1.9 .2z"/>
<path fill="#c8291b" stroke="#c8291b" d="M1331.0 375.4l1.9-3.8-4.1-3.5-2.0 3.8z"/>
<path fill="#7d180f" stroke="#7d180f" d="M1255.9 362.1l2.1-6.8-4.4 3.9-2.1 6.8z"/>
<path fill="#d92d1e" stroke="#d92d1e" d="M1295.9 335.8l2.0-5.0-4.1-4.8-2.0 5.0z"/>
<path fill="#881a11" stroke="#881a11" d="M1406.7 340.8l1.8 4.7-4.3 1.4-1.8-4.7z"/>
<path fill="#931d13" stroke="#931d13" d="M1097.2 357.1l1.8 4.3-4.4 5.1-1.8-4.3z"/>
<path fill="#b62518" stroke="#b62518" d="M1275.0 336.4l2.1-6.6-4.3 .3-2.0 6.6z"/>
<path fill="#911c12" stroke="#911c12" d="M1396.3 340.5l1.8 4.4-4.4 3.7-1.8-4.4z"/>
<path fill="#8e1c12" stroke="#8e1c12" d="M1262.3 352.4l2.1-7.0-4.4 2.8-2.0 7.1z"/>
<path fill="#d52c1e" stroke="#d52c1e" d="M1300.0 341.4l2.0-4.9-4.1-5.7-2.0 5.0z"/>
<path fill="#a02015" stroke="#a02015" d="M1268.7 343.7l2.1-7.0-4.4 1.7-2.0 7.0z"/>
<path fill="#d52c1e" stroke="#d52c1e" d="M1304.2 347.7l2.0-5.0-4.2-6.2-2.0 4.9z"/>
<path fill="#d92d1e" stroke="#d92d1e" d="M1285.5 333.2l2.1-5.9-4.2-2.4-2.1 5.9z"/>
<path fill="#d22b1d" stroke="#d22b1d" d="M1308.3 354.2l2.0-5.0-4.1-6.5-2.0 5.0zM1312.4 360.7l2.0-5.0-4.1-6.5-2.0 5.0z"/>
<path fill="#580f09" stroke="#580f09" d="M1182.3 406.9l1.8 3.4-4.2-4.8-1.8-3.3z"/>
<path fill="#66120b" stroke="#66120b" d="M1201.0 417.0l1.8 2.3-4.3 .3-1.8-2.3z"/>
<path fill="#69130c" stroke="#69130c" d="M1211.5 414.7l1.8 1.0-4.3 2.9-1.9-1.0z"/>
<path fill="#d52c1e" stroke="#d52c1e" d="M1316.5 366.9l2.0-5.0-4.1-6.2-2.0 5.0z"/>
<path fill="#981e14" stroke="#981e14" d="M1107.8 350.8l1.8 4.7-4.4 5.2-1.8-4.7z"/>
<path fill="#d52c1e" stroke="#d52c1e" d="M1320.6 372.4l2.0-5.0-4.1-5.5-2.0 5.0z"/>
<path fill="#590f09" stroke="#590f09" d="M1186.5 410.6l1.8 3.3-4.2-3.6-1.8-3.4z"/>
<path fill="#5a1009" stroke="#5a1009" d="M1228.4 401.7l1.9-1.7-4.4 5.2-1.9 1.6z"/>
<path fill="#e02f1f" stroke="#e02f1f" d="M1289.7 336.9l2.1-5.9-4.2-3.7-2.1 5.9z"/>
<path fill="#cc2a1c" stroke="#cc2a1c" d="M1279.3 337.4l2.0-6.6-4.2-1.0-2.1 6.6z"/>
<path fill="#d92d1e" stroke="#d92d1e" d="M1324.8 376.9l2.0-5.0-4.2-4.5-2.0 5.0z"/>
<path fill="#7d180f" stroke="#7d180f" d="M1411.0 340.7l1.8 4.7-4.3 .1-1.8-4.7z"/>
<path fill="#b62518" stroke="#b62518" d="M1273.0 343.3l2.0-6.9-4.2 .3-2.1 7.0z"/>
<path fill="#8c1b12" stroke="#8c1b12" d="M1260.3 359.2l2.0-6.8-4.3 2.9-2.1 6.8z"/>
<path fill="#64120b" stroke="#64120b" d="M1222.1 407.1l1.9-.3-4.4 4.7-1.9 .3z"/>
<path fill="#e02f1f" stroke="#e02f1f" d="M1293.9 341.7l2.0-5.9-4.1-4.8-2.1 5.9z"/>
<path fill="#a02015" stroke="#a02015" d="M1266.6 350.7l2.1-7.0-4.3 1.7-2.1 7.0z"/>
<path fill="#5d100a" stroke="#5d100a" d="M1190.7 413.0l1.8 3.3-4.2-2.4-1.8-3.3z"/>
<path fill="#8c1b12" stroke="#8c1b12" d="M1400.6 337.8l1.8 4.4-4.3 2.7-1.8-4.4z"/>
<path fill="#e02f1f" stroke="#e02f1f" d="M1298.0 347.3l2.0-5.9-4.1-5.6-2.0 5.9z"/>
<path fill="#71150d" stroke="#71150d" d="M1205.3 415.3l1.8 2.3-4.3 1.7-1.8-2.3z"/>
<path fill="#931d13" stroke="#931d13" d="M1101.6 351.8l1.8 4.2-4.4 5.4-1.8-4.3z"/>
<path fill="#dc2e1f" stroke="#dc2e1f" d="M1283.5 339.8l2.0-6.6-4.2-2.4-2.0 6.6zM1302.1 353.6l2.1-5.9-4.2-6.3-2.0 5.9zM1306.2 360.1l2.1-5.9-4.1-6.5-2.1 5.9zM1310.3 366.6l2.1-5.9-4.1-6.5-2.1 5.9z"/>
<path fill="#6f140d" stroke="#6f140d" d="M1215.9 410.7l1.8 1.1-4.4 3.9-1.8-1.0z"/>
<path fill="#dc2e1f" stroke="#dc2e1f" d="M1314.4 372.8l2.1-5.9-4.1-6.2-2.1 5.9z"/>
<path fill="#e02f1f" stroke="#e02f1f" d="M1318.6 378.3l2.0-5.9-4.1-5.5-2.1 5.9z"/>
<path fill="#66120b" stroke="#66120b" d="M1194.9 414.0l1.8 3.3-4.2-1.0-1.8-3.3z"/>
<path fill="#cc2a1c" stroke="#cc2a1c" d="M1277.2 344.4l2.1-7.0-4.3-1.0-2.0 6.9z"/>
<path fill="#e32f20" stroke="#e32f20" d="M1287.7 343.5l2.0-6.6-4.2-3.7-2.0 6.6z"/>
<path fill="#e02f1f" stroke="#e02f1f" d="M1322.7 382.8l2.1-5.9-4.2-4.5-2.0 5.9z"/>
<path fill="#b62518" stroke="#b62518" d="M1270.9 350.4l2.1-7.1-4.3 .4-2.1 7.0z"/>
<path fill="#881a11" stroke="#881a11" d="M1258.2 365.4l2.1-6.2-4.4 2.9-2.0 6.2z"/>
<path fill="#a02015" stroke="#a02015" d="M1264.6 357.5l2.0-6.8-4.3 1.7-2.0 6.8z"/>
<path fill="#5b100a" stroke="#5b100a" d="M1232.8 396.3l1.9-1.6-4.4 5.3-1.9 1.7z"/>
<path fill="#e32f20" stroke="#e32f20" d="M1291.8 348.3l2.1-6.6-4.2-4.8-2.0 6.6z"/>
<path fill="#831910" stroke="#831910" d="M1405.0 336.4l1.7 4.4-4.3 1.4-1.8-4.4z"/>
<path fill="#8a1b11" stroke="#8a1b11" d="M1394.5 336.8l1.8 3.7-4.4 3.7-1.8-3.6z"/>
<path fill="#e32f20" stroke="#e32f20" d="M1296.0 353.9l2.0-6.6-4.1-5.6-2.1 6.6z"/>
<path fill="#78160e" stroke="#78160e" d="M1209.7 412.4l1.8 2.3-4.4 2.9-1.8-2.3z"/>
<path fill="#dc2e1f" stroke="#dc2e1f" d="M1281.4 346.8l2.1-7.0-4.2-2.4-2.1 7.0z"/>
<path fill="#65120b" stroke="#65120b" d="M1226.5 401.9l1.9-.2-4.4 5.1-1.9 .3z"/>
<path fill="#e02f1f" stroke="#e02f1f" d="M1300.1 360.2l2.0-6.6-4.1-6.3-2.0 6.6z"/>
<path fill="#72150d" stroke="#72150d" d="M1199.2 413.6l1.8 3.4-4.3 .3-1.8-3.3z"/>
<path fill="#e02f1f" stroke="#e02f1f" d="M1304.2 366.7l2.0-6.6-4.1-6.5-2.0 6.6zM1308.3 373.2l2.0-6.6-4.1-6.5-2.0 6.6z"/>
<path fill="#e32f20" stroke="#e32f20" d="M1312.4 379.4l2.0-6.6-4.1-6.2-2.0 6.6z"/>
<path fill="#cc2a1c" stroke="#cc2a1c" d="M1275.2 351.4l2.0-7.0-4.2-1.1-2.1 7.1z"/>
<path fill="#e32f20" stroke="#e32f20" d="M1316.5 384.9l2.1-6.6-4.2-5.5-2.0 6.6zM1285.6 350.5l2.1-7.0-4.2-3.7-2.1 7.0z"/>
<path fill="#71150d" stroke="#71150d" d="M1220.3 406.0l1.8 1.1-4.4 4.7-1.8-1.1z"/>
<path fill="#5d100a" stroke="#5d100a" d="M1184.7 406.5l1.8 4.1-4.2-3.7-1.8-4.1z"/>
<path fill="#b62518" stroke="#b62518" d="M1268.9 357.2l2.0-6.8-4.3 .3-2.0 6.8z"/>
<path fill="#e32f20" stroke="#e32f20" d="M1320.7 389.4l2.0-6.6-4.1-4.5-2.1 6.6z"/>
<path fill="#79170e" stroke="#79170e" d="M1409.2 336.3l1.8 4.4-4.3 .1-1.7-4.4z"/>
<path fill="#9b1f14" stroke="#9b1f14" d="M1262.5 363.7l2.1-6.2-4.3 1.7-2.1 6.2z"/>
<path fill="#e63020" stroke="#e63020" d="M1289.8 355.3l2.0-7.0-4.1-4.8-2.1 7.0z"/>
<path fill="#64120b" stroke="#64120b" d="M1188.9 408.9l1.8 4.1-4.2-2.4-1.8-4.1z"/>
<path fill="#e32f20" stroke="#e32f20" d="M1293.9 360.9l2.1-7.0-4.2-5.6-2.0 7.0z"/>
<path fill="#dc2e1f" stroke="#dc2e1f" d="M1279.4 353.8l2.0-7.0-4.2-2.4-2.0 7.0z"/>
<path fill="#7b170f" stroke="#7b170f" d="M1203.5 411.9l1.8 3.4-4.3 1.7-1.8-3.4z"/>
<path fill="#861a10" stroke="#861a10" d="M1398.9 334.2l1.7 3.6-4.3 2.7-1.8-3.7z"/>
<path fill="#e32f20" stroke="#e32f20" d="M1298.0 367.2l2.1-7.0-4.1-6.3-2.1 7.0z"/>
<path fill="#5a1009" stroke="#5a1009" d="M1237.2 391.2l1.9-1.7-4.4 5.2-1.9 1.6z"/>
<path fill="#e32f20" stroke="#e32f20" d="M1302.1 373.7l2.1-7.0-4.1-6.5-2.1 7.0z"/>
<path fill="#7d180f" stroke="#7d180f" d="M1214.0 408.4l1.9 2.3-4.4 4.0-1.8-2.3z"/>
<path fill="#590f09" stroke="#590f09" d="M1358.8 364.6l1.9-2.5-4.4 4.1-1.9 2.5z"/>
<path fill="#e32f20" stroke="#e32f20" d="M1306.2 380.2l2.1-7.0-4.1-6.5-2.1 7.0zM1310.3 386.4l2.1-7.0-4.1-6.2-2.1 7.0z"/>
<path fill="#cc2a1c" stroke="#cc2a1c" d="M1273.1 358.2l2.1-6.8-4.3-1.0-2.0 6.8z"/>
<path fill="#65120b" stroke="#65120b" d="M1230.9 396.6l1.9-.3-4.4 5.4-1.9 .2z"/>
<path fill="#e32f20" stroke="#e32f20" d="M1283.6 357.5l2.0-7.0-4.2-3.7-2.0 7.0z"/>
<path fill="#e63020" stroke="#e63020" d="M1314.5 391.8l2.0-6.9-4.1-5.5-2.1 7.0z"/>
<path fill="#6d140d" stroke="#6d140d" d="M1193.2 409.9l1.7 4.1-4.2-1.0-1.8-4.1z"/>
<path fill="#b32418" stroke="#b32418" d="M1266.8 363.4l2.1-6.2-4.3 .3-2.1 6.2z"/>
<path fill="#e63020" stroke="#e63020" d="M1287.7 362.3l2.1-7.0-4.2-4.8-2.0 7.0z"/>
<path fill="#72150d" stroke="#72150d" d="M1224.7 400.9l1.8 1.0-4.4 5.2-1.8-1.1z"/>
<path fill="#e63020" stroke="#e63020" d="M1291.8 368.0l2.1-7.1-4.1-5.6-2.1 7.0z"/>
<path fill="#dc2e1f" stroke="#dc2e1f" d="M1277.3 360.6l2.1-6.8-4.2-2.4-2.1 6.8z"/>
<path fill="#e32f20" stroke="#e32f20" d="M1295.9 374.2l2.1-7.0-4.1-6.3-2.1 7.1z"/>
<path fill="#7d180f" stroke="#7d180f" d="M1403.2 332.7l1.8 3.7-4.4 1.4-1.7-3.6z"/>
<path fill="#831910" stroke="#831910" d="M1207.9 409.0l1.8 3.4-4.4 2.9-1.8-3.4z"/>
<path fill="#e32f20" stroke="#e32f20" d="M1300.1 380.7l2.0-7.0-4.1-6.5-2.1 7.0zM1304.2 387.3l2.0-7.1-4.1-6.5-2.0 7.0zM1308.3 393.4l2.0-7.0-4.1-6.2-2.0 7.1z"/>
<path fill="#79170e" stroke="#79170e" d="M1197.4 409.5l1.8 4.1-4.3 .4-1.7-4.1z"/>
<path fill="#e63020" stroke="#e63020" d="M1312.4 398.9l2.1-7.1-4.2-5.4-2.0 7.0z"/>
<path fill="#c8291b" stroke="#c8291b" d="M1271.1 364.4l2.0-6.2-4.2-1.0-2.1 6.2z"/>
<path fill="#e32f20" stroke="#e32f20" d="M1281.5 364.3l2.1-6.8-4.2-3.7-2.1 6.8z"/>
<path fill="#7f180f" stroke="#7f180f" d="M1218.4 403.7l1.9 2.3-4.4 4.7-1.9-2.3z"/>
<path fill="#590f09" stroke="#590f09" d="M1241.6 386.5l1.9-1.7-4.4 4.7-1.9 1.7z"/>
<path fill="#580f09" stroke="#580f09" d="M1363.2 359.8l1.9-2.5-4.4 4.8-1.9 2.5z"/>
<path fill="#61110b" stroke="#61110b" d="M1356.8 368.5l2.0-3.9-4.4 4.1-2.0 3.9z"/>
<path fill="#e32f20" stroke="#e32f20" d="M1285.7 369.1l2.0-6.8-4.1-4.8-2.1 6.8z"/>
<path fill="#5f110a" stroke="#5f110a" d="M1182.9 401.8l1.8 4.7-4.2-3.7-1.8-4.6z"/>
<path fill="#ab2217" stroke="#ab2217" d="M1264.8 368.7l2.0-5.3-4.3 .3-2.0 5.4z"/>
<path fill="#65120b" stroke="#65120b" d="M1235.3 391.5l1.9-.3-4.4 5.1-1.9 .3z"/>
<path fill="#e32f20" stroke="#e32f20" d="M1289.8 374.7l2.0-6.7-4.1-5.7-2.0 6.8z"/>
<path fill="#72150d" stroke="#72150d" d="M1407.4 332.6l1.8 3.7-4.2 .1-1.8-3.7z"/>
<path fill="#d92d1e" stroke="#d92d1e" d="M1275.3 366.8l2.0-6.2-4.2-2.4-2.0 6.2z"/>
<path fill="#e32f20" stroke="#e32f20" d="M1293.9 381.0l2.0-6.8-4.1-6.2-2.0 6.7z"/>
<path fill="#e02f1f" stroke="#e02f1f" d="M1298.0 387.5l2.1-6.8-4.2-6.5-2.0 6.8z"/>
<path fill="#7b170f" stroke="#7b170f" d="M1397.0 331.4l1.9 2.8-4.4 2.6-1.8-2.7z"/>
<path fill="#e32f20" stroke="#e32f20" d="M1302.1 394.0l2.1-6.7-4.1-6.6-2.1 6.8z"/>
<path fill="#74160e" stroke="#74160e" d="M1229.1 395.5l1.8 1.1-4.4 5.3-1.8-1.0z"/>
<path fill="#831910" stroke="#831910" d="M1201.8 407.8l1.7 4.1-4.3 1.7-1.8-4.1z"/>
<path fill="#68130c" stroke="#68130c" d="M1187.1 404.2l1.8 4.7-4.2-2.4-1.8-4.7z"/>
<path fill="#881a11" stroke="#881a11" d="M1212.2 405.1l1.8 3.3-4.3 4.0-1.8-3.4z"/>
<path fill="#e32f20" stroke="#e32f20" d="M1306.2 400.2l2.1-6.8-4.1-6.1-2.1 6.7z"/>
<path fill="#e02f1f" stroke="#e02f1f" d="M1279.5 370.5l2.0-6.2-4.2-3.7-2.0 6.2z"/>
<path fill="#c5281b" stroke="#c5281b" d="M1269.1 369.8l2.0-5.4-4.3-1.0-2.0 5.3z"/>
<path fill="#e32f20" stroke="#e32f20" d="M1283.6 375.3l2.1-6.2-4.2-4.8-2.0 6.2z"/>
<path fill="#811910" stroke="#811910" d="M1222.8 398.6l1.9 2.3-4.4 5.1-1.9-2.3z"/>
<path fill="#72150d" stroke="#72150d" d="M1191.4 405.2l1.8 4.7-4.3-1.0-1.8-4.7z"/>
<path fill="#580f09" stroke="#580f09" d="M1367.6 354.6l1.9-2.5-4.4 5.2-1.9 2.5z"/>
<path fill="#5d100a" stroke="#5d100a" d="M1361.2 363.7l2.0-3.9-4.4 4.8-2.0 3.9z"/>
<path fill="#e02f1f" stroke="#e02f1f" d="M1287.7 380.9l2.1-6.2-4.1-5.6-2.1 6.2zM1291.9 387.2l2.0-6.2-4.1-6.3-2.1 6.2z"/>
<path fill="#d52c1e" stroke="#d52c1e" d="M1273.3 372.2l2.0-5.4-4.2-2.4-2.0 5.4z"/>
<path fill="#63110b" stroke="#63110b" d="M1239.7 386.8l1.9-.3-4.4 4.7-1.9 .3z"/>
<path fill="#dc2e1f" stroke="#dc2e1f" d="M1296.0 393.7l2.0-6.2-4.1-6.5-2.0 6.2z"/>
<path fill="#74160e" stroke="#74160e" d="M1401.4 330.0l1.8 2.7-4.3 1.5-1.9-2.8z"/>
<path fill="#dc2e1f" stroke="#dc2e1f" d="M1300.1 400.2l2.0-6.2-4.1-6.5-2.0 6.2z"/>
<path fill="#8a1b11" stroke="#8a1b11" d="M1206.1 404.9l1.8 4.1-4.4 2.9-1.7-4.1z"/>
<path fill="#e02f1f" stroke="#e02f1f" d="M1304.2 406.4l2.0-6.2-4.1-6.2-2.0 6.2z"/>
<path fill="#8a1b11" stroke="#8a1b11" d="M1216.6 400.4l1.8 3.3-4.4 4.7-1.8-3.3z"/>
<path fill="#7d180f" stroke="#7d180f" d="M1195.7 404.9l1.7 4.6-4.2 .4-1.8-4.7z"/>
<path fill="#dc2e1f" stroke="#dc2e1f" d="M1277.4 375.9l2.1-5.4-4.2-3.7-2.0 5.4z"/>
<path fill="#72150d" stroke="#72150d" d="M1233.5 390.4l1.8 1.1-4.4 5.1-1.8-1.1z"/>
<path fill="#b92619" stroke="#b92619" d="M1267.1 374.1l2.0-4.3-4.3-1.1-2.0 4.3z"/>
<path fill="#dc2e1f" stroke="#dc2e1f" d="M1281.6 380.7l2.0-5.4-4.1-4.8-2.1 5.4z"/>
<path fill="#69130c" stroke="#69130c" d="M1405.6 329.9l1.8 2.7-4.2 .1-1.8-2.7z"/>
<path fill="#d92d1e" stroke="#d92d1e" d="M1285.7 386.3l2.0-5.4-4.1-5.6-2.0 5.4z"/>
<path fill="#66120b" stroke="#66120b" d="M1359.2 368.6l2.0-4.9-4.4 4.8-2.0 4.9z"/>
<path fill="#811910" stroke="#811910" d="M1227.3 393.2l1.8 2.3-4.4 5.4-1.9-2.3z"/>
<path fill="#d92d1e" stroke="#d92d1e" d="M1289.8 392.6l2.1-5.4-4.2-6.3-2.0 5.4z"/>
<path fill="#580f09" stroke="#580f09" d="M1372.0 349.3l1.9-2.5-4.4 5.3-1.9 2.5z"/>
<path fill="#5c100a" stroke="#5c100a" d="M1365.6 358.4l2.0-3.8-4.4 5.2-2.0 3.9z"/>
<path fill="#d52c1e" stroke="#d52c1e" d="M1293.9 399.1l2.1-5.4-4.1-6.5-2.1 5.4zM1298.1 405.6l2.0-5.4-4.1-6.5-2.1 5.4z"/>
<path fill="#cc2a1c" stroke="#cc2a1c" d="M1271.3 376.5l2.0-4.3-4.2-2.4-2.0 4.3z"/>
<path fill="#8e1c12" stroke="#8e1c12" d="M1210.5 401.0l1.7 4.1-4.3 3.9-1.8-4.1z"/>
<path fill="#881a11" stroke="#881a11" d="M1200.0 403.2l1.8 4.6-4.4 1.7-1.7-4.6z"/>
<path fill="#69130c" stroke="#69130c" d="M1185.4 399.4l1.7 4.8-4.2-2.4-1.7-4.8z"/>
<path fill="#d22b1d" stroke="#d22b1d" d="M1275.5 380.2l1.9-4.3-4.1-3.7-2.0 4.3z"/>
<path fill="#8a1b11" stroke="#8a1b11" d="M1221.0 395.2l1.8 3.4-4.4 5.1-1.8-3.3z"/>
<path fill="#71150d" stroke="#71150d" d="M1237.9 385.7l1.8 1.1-4.4 4.7-1.8-1.1z"/>
<path fill="#d22b1d" stroke="#d22b1d" d="M1279.6 384.9l2.0-4.2-4.2-4.8-1.9 4.3z"/>
<path fill="#74160e" stroke="#74160e" d="M1189.6 400.4l1.8 4.8-4.3-1.0-1.7-4.8z"/>
<path fill="#66120b" stroke="#66120b" d="M1399.5 328.4l1.9 1.6-4.4 1.4-1.8-1.5z"/>
<path fill="#cf2b1d" stroke="#cf2b1d" d="M1283.7 390.6l2.0-4.3-4.1-5.6-2.0 4.2z"/>
<path fill="#5c100a" stroke="#5c100a" d="M1077.2 363.6l2.0-2.8-4.4 3.8-1.9 2.8z"/>
<path fill="#cc2a1c" stroke="#cc2a1c" d="M1287.8 396.8l2.0-4.2-4.1-6.3-2.0 4.3zM1292.0 403.4l1.9-4.3-4.1-6.5-2.0 4.2z"/>
<path fill="#63110b" stroke="#63110b" d="M1363.6 363.4l2.0-5.0-4.4 5.3-2.0 4.9z"/>
<path fill="#8e1c12" stroke="#8e1c12" d="M1204.3 400.3l1.8 4.6-4.3 2.9-1.8-4.6z"/>
<path fill="#811910" stroke="#811910" d="M1231.7 388.1l1.8 2.3-4.4 5.1-1.8-2.3z"/>
<path fill="#cc2a1c" stroke="#cc2a1c" d="M1296.1 409.9l2.0-4.3-4.2-6.5-1.9 4.3z"/>
<path fill="#580f09" stroke="#580f09" d="M1376.4 344.2l1.9-2.5-4.4 5.1-1.9 2.5z"/>
<path fill="#5b100a" stroke="#5b100a" d="M1370.0 353.1l2.0-3.8-4.4 5.3-2.0 3.8z"/>
<path fill="#b62518" stroke="#b62518" d="M1269.3 379.5l2.0-3.0-4.2-2.4-2.0 3.0z"/>
<path fill="#911c12" stroke="#911c12" d="M1214.9 396.3l1.7 4.1-4.4 4.7-1.7-4.1z"/>
<path fill="#7f180f" stroke="#7f180f" d="M1193.9 400.0l1.8 4.9-4.3 .3-1.8-4.8z"/>
<path fill="#5d100a" stroke="#5d100a" d="M1403.8 328.4l1.8 1.5-4.2 .1-1.9-1.6z"/>
<path fill="#bc2619" stroke="#bc2619" d="M1273.5 383.2l2.0-3.0-4.2-3.7-2.0 3.0z"/>
<path fill="#8c1b12" stroke="#8c1b12" d="M1225.5 389.9l1.8 3.3-4.5 5.4-1.8-3.4z"/>
<path fill="#bc2619" stroke="#bc2619" d="M1277.6 388.0l2.0-3.1-4.1-4.7-2.0 3.0z"/>
<path fill="#590f09" stroke="#590f09" d="M1081.6 359.0l2.0-2.7-4.4 4.5-2.0 2.8z"/>
<path fill="#bc2619" stroke="#bc2619" d="M1281.8 393.6l1.9-3.0-4.1-5.7-2.0 3.1z"/>
<path fill="#69130c" stroke="#69130c" d="M1361.5 369.3l2.1-5.9-4.4 5.2-2.1 5.9z"/>
<path fill="#931d13" stroke="#931d13" d="M1208.7 396.3l1.8 4.7-4.4 3.9-1.8-4.6z"/>
<path fill="#66120b" stroke="#66120b" d="M1075.3 367.7l1.9-4.1-4.3 3.8-2.0 4.0z"/>
<path fill="#8a1b11" stroke="#8a1b11" d="M1198.2 398.3l1.8 4.9-4.3 1.7-1.8-4.9z"/>
<path fill="#b92619" stroke="#b92619" d="M1285.9 399.9l1.9-3.1-4.1-6.2-1.9 3.0zM1290.0 406.4l2.0-3.0-4.2-6.6-1.9 3.1z"/>
<path fill="#7f180f" stroke="#7f180f" d="M1236.1 383.4l1.8 2.3-4.4 4.7-1.8-2.3z"/>
<path fill="#63110b" stroke="#63110b" d="M1368.0 358.1l2.0-5.0-4.4 5.3-2.0 5.0z"/>
<path fill="#580f09" stroke="#580f09" d="M1380.8 339.7l1.9-2.6-4.4 4.6-1.9 2.5z"/>
<path fill="#5c100a" stroke="#5c100a" d="M1374.4 348.0l2.0-3.8-4.4 5.1-2.0 3.8z"/>
<path fill="#931d13" stroke="#931d13" d="M1219.3 391.1l1.7 4.1-4.4 5.2-1.7-4.1z"/>
<path fill="#8a1b11" stroke="#8a1b11" d="M1229.9 384.8l1.8 3.3-4.4 5.1-1.8-3.3z"/>
<path fill="#6f140d" stroke="#6f140d" d="M1359.5 375.9l2.0-6.6-4.4 5.2-2.0 6.6z"/>
<path fill="#580f09" stroke="#580f09" d="M1391.4 330.7l1.9-1.1-4.3 2.7-1.9 1.1z"/>
<path fill="#911c12" stroke="#911c12" d="M1202.6 395.4l1.7 4.9-4.3 2.9-1.8-4.9z"/>
<path fill="#590f09" stroke="#590f09" d="M1401.9 328.1l1.9 .3-4.3 0-1.9-.2z"/>
<path fill="#580f09" stroke="#580f09" d="M1086.0 353.9l2.0-2.7-4.4 5.1-2.0 2.7z"/>
<path fill="#961d13" stroke="#961d13" d="M1213.1 391.6l1.8 4.7-4.4 4.7-1.8-4.7z"/>
<path fill="#71150d" stroke="#71150d" d="M1073.2 372.8l2.1-5.1-4.4 3.7-2.0 5.2z"/>
<path fill="#60110a" stroke="#60110a" d="M1079.6 363.1l2.0-4.1-4.4 4.6-1.9 4.1z"/>
<path fill="#69130c" stroke="#69130c" d="M1366.0 364.0l2.0-5.9-4.4 5.3-2.1 5.9z"/>
<path fill="#7f180f" stroke="#7f180f" d="M1192.2 395.3l1.7 4.7-4.3 .4-1.7-4.7z"/>
<path fill="#5a1009" stroke="#5a1009" d="M1385.1 335.9l2.0-2.5-4.4 3.7-1.9 2.6z"/>
<path fill="#64120b" stroke="#64120b" d="M1372.4 353.0l2.0-5.0-4.4 5.1-2.0 5.0z"/>
<path fill="#5e100a" stroke="#5e100a" d="M1378.8 343.5l2.0-3.8-4.4 4.5-2.0 3.8z"/>
<path fill="#931d13" stroke="#931d13" d="M1223.7 385.8l1.8 4.1-4.5 5.3-1.7-4.1z"/>
<path fill="#5d100a" stroke="#5d100a" d="M1395.7 329.3l1.9-1.1-4.3 1.4-1.9 1.1z"/>
<path fill="#8a1b11" stroke="#8a1b11" d="M1234.3 380.1l1.8 3.3-4.4 4.7-1.8-3.3z"/>
<path fill="#961d13" stroke="#961d13" d="M1207.0 391.5l1.7 4.8-4.4 4.0-1.7-4.9z"/>
<path fill="#881a11" stroke="#881a11" d="M1196.5 393.6l1.7 4.7-4.3 1.7-1.7-4.7z"/>
<path fill="#6d140d" stroke="#6d140d" d="M1363.9 370.6l2.1-6.6-4.5 5.3-2.0 6.6z"/>
<path fill="#79170e" stroke="#79170e" d="M1071.2 378.9l2.0-6.1-4.3 3.8-2.1 6.0z"/>
<path fill="#69130c" stroke="#69130c" d="M1077.6 368.3l2.0-5.2-4.3 4.6-2.1 5.1z"/>
<path fill="#961d13" stroke="#961d13" d="M1217.5 386.5l1.8 4.6-4.4 5.2-1.8-4.7z"/>
<path fill="#60110a" stroke="#60110a" d="M1389.5 333.3l1.9-2.6-4.3 2.7-2.0 2.5z"/>
<path fill="#580f09" stroke="#580f09" d="M1090.4 348.6l2.0-2.7-4.4 5.3-2.0 2.7z"/>
<path fill="#5d100a" stroke="#5d100a" d="M1084.0 358.0l2.0-4.1-4.4 5.1-2.0 4.1z"/>
<path fill="#6a130c" stroke="#6a130c" d="M1370.4 358.9l2.0-5.9-4.4 5.1-2.0 5.9z"/>
<path fill="#65120b" stroke="#65120b" d="M1383.2 339.7l1.9-3.8-4.3 3.8-2.0 3.8z"/>
<path fill="#68130c" stroke="#68130c" d="M1376.8 348.4l2.0-4.9-4.4 4.5-2.0 5.0z"/>
<path fill="#69130c" stroke="#69130c" d="M1400.0 329.2l1.9-1.1-4.3 .1-1.9 1.1z"/>
<path fill="#931d13" stroke="#931d13" d="M1228.1 380.6l1.8 4.2-4.4 5.1-1.8-4.1z"/>
<path fill="#71150d" stroke="#71150d" d="M1361.8 377.6l2.1-7.0-4.4 5.3-2.1 7.0z"/>
<path fill="#8e1c12" stroke="#8e1c12" d="M1200.8 390.7l1.8 4.7-4.4 2.9-1.7-4.7z"/>
<path fill="#7f180f" stroke="#7f180f" d="M1069.2 385.6l2.0-6.7-4.4 3.7-2.0 6.7z"/>
<path fill="#981e14" stroke="#981e14" d="M1211.3 386.8l1.8 4.8-4.4 4.7-1.7-4.8z"/>
<path fill="#6f140d" stroke="#6f140d" d="M1393.8 331.8l1.9-2.5-4.3 1.4-1.9 2.6z"/>
<path fill="#71150d" stroke="#71150d" d="M1075.6 374.3l2.0-6.0-4.4 4.5-2.0 6.1z"/>
<path fill="#6f140d" stroke="#6f140d" d="M1368.3 365.5l2.1-6.6-4.4 5.1-2.1 6.6z"/>
<path fill="#65120b" stroke="#65120b" d="M1082.0 363.2l2.0-5.2-4.4 5.1-2.0 5.2z"/>
<path fill="#961d13" stroke="#961d13" d="M1221.9 381.1l1.8 4.7-4.4 5.3-1.8-4.6z"/>
<path fill="#580f09" stroke="#580f09" d="M1094.8 343.4l2.0-2.8-4.4 5.3-2.0 2.7z"/>
<path fill="#5d100a" stroke="#5d100a" d="M1088.5 352.7l1.9-4.1-4.4 5.3-2.0 4.1z"/>
<path fill="#6f140d" stroke="#6f140d" d="M1387.5 337.1l2.0-3.8-4.4 2.6-1.9 3.8zM1374.7 354.3l2.1-5.9-4.4 4.6-2.0 5.9zM1381.1 344.7l2.1-5.0-4.4 3.8-2.0 4.9z"/>
<path fill="#911c12" stroke="#911c12" d="M1232.5 375.9l1.8 4.2-4.4 4.7-1.8-4.2z"/>
<path fill="#811910" stroke="#811910" d="M1067.1 392.6l2.1-7.0-4.4 3.7-2.1 7.1z"/>
<path fill="#861a10" stroke="#861a10" d="M1398.1 331.8l1.9-2.6-4.3 .1-1.9 2.5z"/>
<path fill="#931d13" stroke="#931d13" d="M1205.2 386.8l1.8 4.7-4.4 3.9-1.8-4.7z"/>
<path fill="#861a10" stroke="#861a10" d="M1194.7 389.4l1.8 4.2-4.3 1.7-1.8-4.2z"/>
<path fill="#76160e" stroke="#76160e" d="M1073.5 381.0l2.1-6.7-4.4 4.6-2.0 6.7z"/>
<path fill="#72150d" stroke="#72150d" d="M1366.2 372.5l2.1-7.0-4.4 5.1-2.1 7.0z"/>
<path fill="#981e14" stroke="#981e14" d="M1215.8 381.6l1.7 4.9-4.4 5.1-1.8-4.8z"/>
<path fill="#6c140c" stroke="#6c140c" d="M1080.0 369.2l2.0-6.0-4.4 5.1-2.0 6.0z"/>
<path fill="#831910" stroke="#831910" d="M1391.8 335.6l2.0-3.8-4.3 1.5-2.0 3.8z"/>
<path fill="#76160e" stroke="#76160e" d="M1372.7 360.9l2.0-6.6-4.3 4.6-2.1 6.6z"/>
<path fill="#5d100a" stroke="#5d100a" d="M1145.1 342.5l1.8 2.6-4.1-5.6-1.8-2.5z"/>
<path fill="#64120b" stroke="#64120b" d="M1086.4 357.8l2.1-5.1-4.5 5.3-2.0 5.2z"/>
<path fill="#7d180f" stroke="#7d180f" d="M1385.5 342.0l2.0-4.9-4.3 2.6-2.1 5.0z"/>
<path fill="#79170e" stroke="#79170e" d="M1379.1 350.6l2.0-5.9-4.3 3.7-2.1 5.9z"/>
<path fill="#590f09" stroke="#590f09" d="M1099.2 338.6l2.0-2.8-4.4 4.8-2.0 2.8z"/>
<path fill="#961d13" stroke="#961d13" d="M1226.3 376.0l1.8 4.6-4.4 5.2-1.8-4.7z"/>
<path fill="#5f110a" stroke="#5f110a" d="M1149.2 348.7l1.9 2.5-4.2-6.1-1.8-2.6z"/>
<path fill="#5d100a" stroke="#5d100a" d="M1092.9 347.5l1.9-4.1-4.4 5.2-1.9 4.1z"/>
<path fill="#60110a" stroke="#60110a" d="M1153.4 355.2l1.8 2.5-4.1-6.5-1.9-2.5zM1157.5 361.7l1.8 2.6-4.1-6.6-1.8-2.5z"/>
<path fill="#5f110a" stroke="#5f110a" d="M1161.6 368.0l1.8 2.5-4.1-6.2-1.8-2.6z"/>
<path fill="#8c1b12" stroke="#8c1b12" d="M1199.0 386.5l1.8 4.2-4.3 2.9-1.8-4.2z"/>
<path fill="#5d100a" stroke="#5d100a" d="M1165.7 373.6l1.8 2.5-4.1-5.6-1.8-2.5z"/>
<path fill="#78160e" stroke="#78160e" d="M1071.5 388.0l2.0-7.0-4.3 4.6-2.1 7.0z"/>
<path fill="#72150d" stroke="#72150d" d="M1364.2 379.5l2.0-7.0-4.4 5.1-2.0 7.0z"/>
<path fill="#961d13" stroke="#961d13" d="M1209.6 382.1l1.7 4.7-4.3 4.7-1.8-4.7z"/>
<path fill="#9d1f14" stroke="#9d1f14" d="M1396.1 335.6l2.0-3.8-4.3 0-2.0 3.8z"/>
<path fill="#5a0f09" stroke="#5a0f09" d="M1319.6 436.7l1.9-.3-4.3 .7-1.8 .2z"/>
<path fill="#71150d" stroke="#71150d" d="M1077.9 375.9l2.1-6.7-4.4 5.1-2.1 6.7z"/>
<path fill="#78160e" stroke="#78160e" d="M1370.6 367.9l2.1-7.0-4.4 4.6-2.1 7.0z"/>
<path fill="#981e14" stroke="#981e14" d="M1220.2 376.3l1.7 4.8-4.4 5.4-1.7-4.9z"/>
<path fill="#580f09" stroke="#580f09" d="M1109.9 328.7l1.9-1.4-4.3 3.1-1.9 1.4z"/>
<path fill="#931d13" stroke="#931d13" d="M1389.8 340.6l2.0-5.0-4.3 1.5-2.0 4.9z"/>
<path fill="#7f180f" stroke="#7f180f" d="M1377.1 357.2l2.0-6.6-4.4 3.7-2.0 6.6z"/>
<path fill="#6a130c" stroke="#6a130c" d="M1084.4 363.9l2.0-6.1-4.4 5.4-2.0 6.0z"/>
<path fill="#5c100a" stroke="#5c100a" d="M1309.2 435.5l1.9 1.1-4.2-2.1-1.9-1.1z"/>
<path fill="#881a11" stroke="#881a11" d="M1383.5 348.0l2.0-6.0-4.4 2.7-2.0 5.9z"/>
<path fill="#590f09" stroke="#590f09" d="M1120.5 324.8l1.8-.1-4.3 .6-1.8 .1z"/>
<path fill="#64120b" stroke="#64120b" d="M1090.8 352.6l2.1-5.1-4.4 5.2-2.1 5.1z"/>
<path fill="#5a1009" stroke="#5a1009" d="M1103.6 334.5l2.0-2.7-4.4 4.0-2.0 2.8z"/>
<path fill="#5f110a" stroke="#5f110a" d="M1135.0 331.1l1.8 1.3-4.1-3.4-1.9-1.3z"/>
<path fill="#961d13" stroke="#961d13" d="M1230.7 371.3l1.8 4.6-4.4 4.7-1.8-4.6z"/>
<path fill="#5f110a" stroke="#5f110a" d="M1097.3 342.7l1.9-4.1-4.4 4.8-1.9 4.1z"/>
<path fill="#71150d" stroke="#71150d" d="M1362.1 386.3l2.1-6.8-4.4 5.1-2.1 6.8z"/>
<path fill="#911c12" stroke="#911c12" d="M1203.4 382.6l1.8 4.2-4.4 3.9-1.8-4.2z"/>
<path fill="#590f09" stroke="#590f09" d="M1324.0 434.8l1.9-.3-4.4 1.9-1.9 .3z"/>
<path fill="#65120b" stroke="#65120b" d="M1139.1 335.7l1.9 1.3-4.2-4.6-1.8-1.3z"/>
<path fill="#580f09" stroke="#580f09" d="M1313.5 436.3l1.9 1.0-4.3-.7-1.9-1.1z"/>
<path fill="#72150d" stroke="#72150d" d="M1075.9 382.9l2.0-7.0-4.4 5.1-2.0 7.0z"/>
<path fill="#78160e" stroke="#78160e" d="M1368.6 375.0l2.0-7.1-4.4 4.6-2.0 7.0z"/>
<path fill="#ad2317" stroke="#ad2317" d="M1394.1 340.5l2.0-4.9-4.3 0-2.0 5.0z"/>
<path fill="#981e14" stroke="#981e14" d="M1214.0 376.9l1.8 4.7-4.5 5.2-1.7-4.7z"/>
<path fill="#69130c" stroke="#69130c" d="M1143.3 341.2l1.8 1.3-4.1-5.5-1.9-1.3z"/>
<path fill="#6c140c" stroke="#6c140c" d="M1147.4 347.4l1.8 1.3-4.1-6.2-1.8-1.3z"/>
<path fill="#811910" stroke="#811910" d="M1375.0 364.2l2.1-7.0-4.4 3.7-2.1 7.0z"/>
<path fill="#5c100a" stroke="#5c100a" d="M1114.2 326.7l2.0-1.3-4.4 1.9-1.9 1.4z"/>
<path fill="#5f110a" stroke="#5f110a" d="M1124.7 325.5l1.9 0-4.3-.8-1.8 .1z"/>
<path fill="#6d140d" stroke="#6d140d" d="M1151.5 353.9l1.9 1.3-4.2-6.5-1.8-1.3z"/>
<path fill="#6f140d" stroke="#6f140d" d="M1082.4 370.6l2.0-6.7-4.4 5.3-2.1 6.7z"/>
<path fill="#9d1f14" stroke="#9d1f14" d="M1387.8 346.5l2.0-5.9-4.3 1.4-2.0 6.0z"/>
<path fill="#6d140d" stroke="#6d140d" d="M1155.6 360.4l1.9 1.3-4.1-6.5-1.9-1.3z"/>
<path fill="#8e1c12" stroke="#8e1c12" d="M1381.4 354.5l2.1-6.5-4.4 2.6-2.0 6.6z"/>
<path fill="#6c140c" stroke="#6c140c" d="M1159.7 366.7l1.9 1.3-4.1-6.3-1.9-1.3z"/>
<path fill="#5c100a" stroke="#5c100a" d="M1299.0 427.7l1.8 2.3-4.1-4.6-1.8-2.3z"/>
<path fill="#580f09" stroke="#580f09" d="M1334.6 427.3l1.9-1.7-4.4 4.1-1.9 1.7z"/>
<path fill="#981e14" stroke="#981e14" d="M1224.6 371.2l1.7 4.8-4.4 5.1-1.7-4.8z"/>
<path fill="#6a130c" stroke="#6a130c" d="M1163.9 372.3l1.8 1.3-4.1-5.6-1.9-1.3zM1088.8 358.7l2.0-6.1-4.4 5.2-2.0 6.1z"/>
<path fill="#5d100a" stroke="#5d100a" d="M1317.8 435.6l1.8 1.1-4.2 .6-1.9-1.0z"/>
<path fill="#60110a" stroke="#60110a" d="M1108.0 331.4l1.9-2.7-4.3 3.1-2.0 2.7z"/>
<path fill="#66120b" stroke="#66120b" d="M1168.0 377.1l1.9 1.3-4.2-4.8-1.8-1.3z"/>
<path fill="#590f09" stroke="#590f09" d="M1303.2 431.1l1.8 2.3-4.2-3.4-1.8-2.3z"/>
<path fill="#68130c" stroke="#68130c" d="M1095.2 347.8l2.1-5.1-4.4 4.8-2.1 5.1z"/>
<path fill="#6a130c" stroke="#6a130c" d="M1128.9 327.7l1.9 0-4.2-2.2-1.9 0z"/>
<path fill="#64120b" stroke="#64120b" d="M1101.6 338.6l2.0-4.1-4.4 4.1-1.9 4.1z"/>
<path fill="#5d100a" stroke="#5d100a" d="M1328.3 431.6l1.9-.2-4.3 3.1-1.9 .3z"/>
<path fill="#76160e" stroke="#76160e" d="M1366.5 381.8l2.1-6.8-4.4 4.5-2.1 6.8z"/>
<path fill="#931d13" stroke="#931d13" d="M1207.8 377.9l1.8 4.2-4.4 4.7-1.8-4.2z"/>
<path fill="#60110a" stroke="#60110a" d="M1172.2 380.7l1.8 1.3-4.1-3.6-1.9-1.3z"/>
<path fill="#68130c" stroke="#68130c" d="M1118.5 326.1l2.0-1.3-4.3 .6-2.0 1.3z"/>
<path fill="#811910" stroke="#811910" d="M1372.9 371.2l2.1-7.0-4.4 3.7-2.0 7.1z"/>
<path fill="#b62518" stroke="#b62518" d="M1392.0 346.4l2.1-5.9-4.3 .1-2.0 5.9z"/>
<path fill="#590f09" stroke="#590f09" d="M1307.4 433.2l1.8 2.3-4.2-2.1-1.8-2.3z"/>
<path fill="#71150d" stroke="#71150d" d="M1080.3 377.6l2.1-7.0-4.5 5.3-2.0 7.0z"/>
<path fill="#74160e" stroke="#74160e" d="M1133.1 331.1l1.9 0-4.2-3.4-1.9 0z"/>
<path fill="#911c12" stroke="#911c12" d="M1379.3 361.5l2.1-7.0-4.3 2.7-2.1 7.0z"/>
<path fill="#a22015" stroke="#a22015" d="M1385.7 353.1l2.1-6.6-4.3 1.5-2.1 6.5z"/>
<path fill="#981e14" stroke="#981e14" d="M1218.4 371.6l1.8 4.7-4.4 5.3-1.8-4.7z"/>
<path fill="#64120b" stroke="#64120b" d="M1322.1 433.7l1.9 1.1-4.4 1.9-1.8-1.1z"/>
<path fill="#6f140d" stroke="#6f140d" d="M1086.8 365.4l2.0-6.7-4.4 5.2-2.0 6.7z"/>
<path fill="#7b170f" stroke="#7b170f" d="M1137.3 335.7l1.8 0-4.1-4.6-1.9 0z"/>
<path fill="#5a0f09" stroke="#5a0f09" d="M1339.0 422.5l1.9-1.7-4.4 4.8-1.9 1.7z"/>
<path fill="#6c140c" stroke="#6c140c" d="M1112.3 329.5l1.9-2.8-4.3 2.0-1.9 2.7z"/>
<path fill="#5f110a" stroke="#5f110a" d="M1311.7 434.0l1.8 2.3-4.3-.8-1.8-2.3z"/>
<path fill="#7f180f" stroke="#7f180f" d="M1141.4 341.2l1.9 0-4.2-5.5-1.8 0z"/>
<path fill="#79170e" stroke="#79170e" d="M1122.8 326.9l1.9-1.4-4.2-.7-2.0 1.3z"/>
<path fill="#72150d" stroke="#72150d" d="M1364.5 388.0l2.0-6.2-4.4 4.5-2.0 6.2z"/>
<path fill="#6f140d" stroke="#6f140d" d="M1093.2 353.9l2.0-6.1-4.4 4.8-2.0 6.1z"/>
<path fill="#811910" stroke="#811910" d="M1145.5 347.4l1.9 0-4.1-6.2-1.9 0z"/>
<path fill="#6d140d" stroke="#6d140d" d="M1106.0 335.5l2.0-4.1-4.4 3.1-2.0 4.1z"/>
<path fill="#60110a" stroke="#60110a" d="M1332.7 427.5l1.9-.2-4.4 4.1-1.9 .2z"/>
<path fill="#811910" stroke="#811910" d="M1149.6 353.9l1.9 0-4.1-6.5-1.9 0z"/>
<path fill="#6d140d" stroke="#6d140d" d="M1099.6 343.8l2.0-5.2-4.3 4.1-2.1 5.1z"/>
<path fill="#7f180f" stroke="#7f180f" d="M1370.9 378.0l2.0-6.8-4.3 3.8-2.1 6.8z"/>
<path fill="#811910" stroke="#811910" d="M1153.7 360.4l1.9 0-4.1-6.5-1.9 0zM1157.8 366.7l1.9 0-4.1-6.3-1.9 0z"/>
<path fill="#b92619" stroke="#b92619" d="M1390.0 353.0l2.0-6.6-4.2 .1-2.1 6.6z"/>
<path fill="#931d13" stroke="#931d13" d="M1212.2 372.7l1.8 4.2-4.4 5.2-1.8-4.2z"/>
<path fill="#911c12" stroke="#911c12" d="M1377.3 368.6l2.0-7.1-4.3 2.7-2.1 7.0z"/>
<path fill="#7f180f" stroke="#7f180f" d="M1162.0 372.3l1.9 0-4.2-5.6-1.9 0z"/>
<path fill="#a52116" stroke="#a52116" d="M1383.7 360.1l2.0-7.0-4.3 1.4-2.1 7.0z"/>
<path fill="#580f09" stroke="#580f09" d="M1297.2 424.3l1.8 3.4-4.1-4.6-1.8-3.3z"/>
<path fill="#8c1b12" stroke="#8c1b12" d="M1127.0 329.1l1.9-1.4-4.2-2.2-1.9 1.4z"/>
<path fill="#7b170f" stroke="#7b170f" d="M1166.1 377.1l1.9 0-4.1-4.8-1.9 0z"/>
<path fill="#69130c" stroke="#69130c" d="M1316.0 433.3l1.8 2.3-4.3 .7-1.8-2.3z"/>
<path fill="#72150d" stroke="#72150d" d="M1084.7 372.4l2.1-7.0-4.4 5.2-2.1 7.0z"/>
<path fill="#7f180f" stroke="#7f180f" d="M1116.6 328.9l1.9-2.8-4.3 .6-1.9 2.8z"/>
<path fill="#6a130c" stroke="#6a130c" d="M1326.5 430.6l1.8 1.0-4.3 3.2-1.9-1.1z"/>
<path fill="#981e14" stroke="#981e14" d="M1222.8 366.5l1.8 4.7-4.4 5.1-1.8-4.7z"/>
<path fill="#590f09" stroke="#590f09" d="M1301.4 427.8l1.8 3.3-4.2-3.4-1.8-3.4z"/>
<path fill="#76160e" stroke="#76160e" d="M1170.3 380.7l1.9 0-4.2-3.6-1.9 0z"/>
<path fill="#74160e" stroke="#74160e" d="M1091.2 360.6l2.0-6.7-4.4 4.8-2.0 6.7z"/>
<path fill="#961d13" stroke="#961d13" d="M1131.2 332.5l1.9-1.4-4.2-3.4-1.9 1.4z"/>
<path fill="#5a1009" stroke="#5a1009" d="M1343.4 417.2l1.9-1.6-4.4 5.2-1.9 1.7z"/>
<path fill="#7d180f" stroke="#7d180f" d="M1110.3 333.6l2.0-4.1-4.3 1.9-2.0 4.1z"/>
<path fill="#7b170f" stroke="#7b170f" d="M1368.9 384.2l2.0-6.2-4.4 3.8-2.0 6.2z"/>
<path fill="#bc2619" stroke="#bc2619" d="M1387.9 360.0l2.1-7.0-4.3 .1-2.0 7.0z"/>
<path fill="#76160e" stroke="#76160e" d="M1097.6 349.8l2.0-6.0-4.4 4.0-2.0 6.1z"/>
<path fill="#5f110a" stroke="#5f110a" d="M1305.6 429.9l1.8 3.3-4.2-2.1-1.8-3.3z"/>
<path fill="#79170e" stroke="#79170e" d="M1104.0 340.7l2.0-5.2-4.4 3.1-2.0 5.2z"/>
<path fill="#8e1c12" stroke="#8e1c12" d="M1375.2 375.4l2.1-6.8-4.4 2.6-2.0 6.8z"/>
<path fill="#6d140d" stroke="#6d140d" d="M1174.5 383.1l1.9 0-4.2-2.4-1.9 0z"/>
<path fill="#a52116" stroke="#a52116" d="M1381.6 367.1l2.1-7.0-4.4 1.4-2.0 7.1z"/>
<path fill="#64120b" stroke="#64120b" d="M1337.1 422.7l1.9-.2-4.4 4.8-1.9 .2z"/>
<path fill="#9b1f14" stroke="#9b1f14" d="M1135.3 337.1l2.0-1.4-4.2-4.6-1.9 1.4zM1120.8 329.7l2.0-2.8-4.3-.8-1.9 2.8z"/>
<path fill="#72150d" stroke="#72150d" d="M1320.3 431.4l1.8 2.3-4.3 1.9-1.8-2.3z"/>
<path fill="#9b1f14" stroke="#9b1f14" d="M1139.5 342.6l1.9-1.4-4.1-5.5-2.0 1.4z"/>
<path fill="#931d13" stroke="#931d13" d="M1216.6 367.4l1.8 4.2-4.4 5.3-1.8-4.2z"/>
<path fill="#9b1f14" stroke="#9b1f14" d="M1143.6 348.8l1.9-1.4-4.1-6.2-1.9 1.4zM1147.7 355.3l1.9-1.4-4.1-6.5-1.9 1.4zM1151.8 361.8l1.9-1.4-4.1-6.5-1.9 1.4z"/>
<path fill="#6f140d" stroke="#6f140d" d="M1330.8 426.5l1.9 1.0-4.4 4.1-1.8-1.0z"/>
<path fill="#9b1f14" stroke="#9b1f14" d="M1155.9 368.1l1.9-1.4-4.1-6.3-1.9 1.4z"/>
<path fill="#69130c" stroke="#69130c" d="M1309.9 430.6l1.8 3.4-4.3-.8-1.8-3.3z"/>
<path fill="#61110b" stroke="#61110b" d="M1178.8 384.1l1.8 0-4.2-1.0-1.9 0z"/>
<path fill="#76160e" stroke="#76160e" d="M1089.1 367.6l2.1-7.0-4.4 4.8-2.1 7.0z"/>
<path fill="#9b1f14" stroke="#9b1f14" d="M1160.1 373.7l1.9-1.4-4.2-5.6-1.9 1.4z"/>
<path fill="#961d13" stroke="#961d13" d="M1114.6 333.0l2.0-4.1-4.3 .6-2.0 4.1z"/>
<path fill="#ad2317" stroke="#ad2317" d="M1125.1 331.9l1.9-2.8-4.2-2.2-2.0 2.8z"/>
<path fill="#bc2619" stroke="#bc2619" d="M1385.9 367.1l2.0-7.1-4.2 .1-2.1 7.0z"/>
<path fill="#9b1f14" stroke="#9b1f14" d="M1164.2 378.5l1.9-1.4-4.1-4.8-1.9 1.4z"/>
<path fill="#7b170f" stroke="#7b170f" d="M1095.5 356.5l2.1-6.7-4.4 4.1-2.0 6.7z"/>
<path fill="#74160e" stroke="#74160e" d="M1366.8 389.6l2.1-5.4-4.4 3.8-2.0 5.3z"/>
<path fill="#a22015" stroke="#a22015" d="M1379.5 373.9l2.1-6.8-4.3 1.5-2.1 6.8z"/>
<path fill="#8a1b11" stroke="#8a1b11" d="M1373.2 381.6l2.0-6.2-4.3 2.6-2.0 6.2z"/>
<path fill="#8c1b12" stroke="#8c1b12" d="M1108.3 338.7l2.0-5.1-4.3 1.9-2.0 5.2z"/>
<path fill="#5b100a" stroke="#5b100a" d="M1347.8 411.9l1.9-1.6-4.4 5.3-1.9 1.6z"/>
<path fill="#811910" stroke="#811910" d="M1101.9 346.7l2.1-6.0-4.4 3.1-2.0 6.0z"/>
<path fill="#b62518" stroke="#b62518" d="M1129.2 335.3l2.0-2.8-4.2-3.4-1.9 2.8z"/>
<path fill="#961d13" stroke="#961d13" d="M1168.4 382.1l1.9-1.4-4.2-3.6-1.9 1.4z"/>
<path fill="#79170e" stroke="#79170e" d="M1324.6 428.3l1.9 2.3-4.4 3.1-1.8-2.3z"/>
<path fill="#65120b" stroke="#65120b" d="M1341.5 417.5l1.9-.3-4.4 5.3-1.9 .2z"/>
<path fill="#74160e" stroke="#74160e" d="M1314.2 430.0l1.8 3.3-4.3 .7-1.8-3.4z"/>
<path fill="#b02418" stroke="#b02418" d="M1118.9 333.7l1.9-4.0-4.2-.8-2.0 4.1z"/>
<path fill="#b92619" stroke="#b92619" d="M1133.4 339.9l1.9-2.8-4.1-4.6-2.0 2.8z"/>
<path fill="#5d100a" stroke="#5d100a" d="M1299.6 423.6l1.8 4.2-4.2-3.5-1.8-4.1z"/>
<path fill="#8e1c12" stroke="#8e1c12" d="M1172.6 384.5l1.9-1.4-4.2-2.4-1.9 1.4z"/>
<path fill="#b62518" stroke="#b62518" d="M1137.5 345.4l2.0-2.8-4.2-5.5-1.9 2.8z"/>
<path fill="#72150d" stroke="#72150d" d="M1335.2 421.7l1.9 1.0-4.4 4.8-1.9-1.0z"/>
<path fill="#bc2619" stroke="#bc2619" d="M1383.8 373.8l2.1-6.7-4.3 0-2.1 6.8z"/>
<path fill="#b62518" stroke="#b62518" d="M1141.6 351.5l2.0-2.7-4.1-6.2-2.0 2.8z"/>
<path fill="#7d180f" stroke="#7d180f" d="M1093.5 363.5l2.0-7.0-4.3 4.1-2.1 7.0z"/>
<path fill="#a52116" stroke="#a52116" d="M1112.6 338.1l2.0-5.1-4.3 .6-2.0 5.1z"/>
<path fill="#b32418" stroke="#b32418" d="M1145.8 358.1l1.9-2.8-4.1-6.5-2.0 2.7z"/>
<path fill="#a02015" stroke="#a02015" d="M1377.5 380.1l2.0-6.2-4.3 1.5-2.0 6.2z"/>
<path fill="#b32418" stroke="#b32418" d="M1149.9 364.6l1.9-2.8-4.1-6.5-1.9 2.8zM1154.0 370.8l1.9-2.7-4.1-6.3-1.9 2.8z"/>
<path fill="#811910" stroke="#811910" d="M1371.2 386.9l2.0-5.3-4.3 2.6-2.1 5.4z"/>
<path fill="#c5281b" stroke="#c5281b" d="M1123.1 335.9l2.0-4.0-4.3-2.2-1.9 4.0z"/>
<path fill="#65120b" stroke="#65120b" d="M1303.9 425.8l1.7 4.1-4.2-2.1-1.8-4.2z"/>
<path fill="#881a11" stroke="#881a11" d="M1099.9 353.4l2.0-6.7-4.3 3.1-2.1 6.7z"/>
<path fill="#961d13" stroke="#961d13" d="M1106.3 344.8l2.0-6.1-4.3 2.0-2.1 6.0z"/>
<path fill="#b62518" stroke="#b62518" d="M1158.1 376.5l2.0-2.8-4.2-5.6-1.9 2.7z"/>
<path fill="#7d180f" stroke="#7d180f" d="M1176.8 385.5l2.0-1.4-4.3-1.0-1.9 1.4zM1318.5 428.1l1.8 3.3-4.3 1.9-1.8-3.3z"/>
<path fill="#b92619" stroke="#b92619" d="M1162.3 381.2l1.9-2.7-4.1-4.8-2.0 2.8z"/>
<path fill="#5a1009" stroke="#5a1009" d="M1352.2 406.8l1.9-1.6-4.4 5.1-1.9 1.6z"/>
<path fill="#7d180f" stroke="#7d180f" d="M1329.0 424.2l1.8 2.3-4.3 4.1-1.9-2.3z"/>
<path fill="#cc2a1c" stroke="#cc2a1c" d="M1127.3 339.3l1.9-4.0-4.1-3.4-2.0 4.0z"/>
<path fill="#bf271a" stroke="#bf271a" d="M1116.8 338.9l2.1-5.2-4.3-.7-2.0 5.1z"/>
<path fill="#65120b" stroke="#65120b" d="M1345.9 412.2l1.9-.3-4.4 5.3-1.9 .3z"/>
<path fill="#b62518" stroke="#b62518" d="M1166.4 384.9l2.0-2.8-4.2-3.6-1.9 2.7z"/>
<path fill="#71150d" stroke="#71150d" d="M1308.1 426.5l1.8 4.1-4.3-.7-1.7-4.1z"/>
<path fill="#b62518" stroke="#b62518" d="M1381.8 380.1l2.0-6.3-4.3 .1-2.0 6.2z"/>
<path fill="#cf2b1d" stroke="#cf2b1d" d="M1131.4 343.9l2.0-4.0-4.2-4.6-1.9 4.0z"/>
<path fill="#6a130c" stroke="#6a130c" d="M1181.1 385.2l1.9-1.4-4.2 .3-2.0 1.4z"/>
<path fill="#ad2317" stroke="#ad2317" d="M1110.6 344.2l2.0-6.1-4.3 .6-2.0 6.1z"/>
<path fill="#8a1b11" stroke="#8a1b11" d="M1097.8 360.4l2.1-7.0-4.4 3.1-2.0 7.0z"/>
<path fill="#961d13" stroke="#961d13" d="M1375.5 385.5l2.0-5.4-4.3 1.5-2.0 5.3z"/>
<path fill="#cc2a1c" stroke="#cc2a1c" d="M1135.5 349.4l2.0-4.0-4.1-5.5-2.0 4.0z"/>
<path fill="#72150d" stroke="#72150d" d="M1339.6 416.4l1.9 1.1-4.4 5.2-1.9-1.0z"/>
<path fill="#b02418" stroke="#b02418" d="M1170.6 387.3l2.0-2.8-4.2-2.4-2.0 2.8z"/>
<path fill="#9b1f14" stroke="#9b1f14" d="M1104.2 351.5l2.1-6.7-4.4 1.9-2.0 6.7z"/>
<path fill="#c8291b" stroke="#c8291b" d="M1139.7 355.6l1.9-4.1-4.1-6.1-2.0 4.0z"/>
<path fill="#76160e" stroke="#76160e" d="M1369.2 391.2l2.0-4.3-4.4 2.7-2.0 4.3z"/>
<path fill="#c8291b" stroke="#c8291b" d="M1143.8 362.1l2.0-4.0-4.2-6.6-1.9 4.1z"/>
<path fill="#d22b1d" stroke="#d22b1d" d="M1121.1 341.1l2.0-5.2-4.2-2.2-2.1 5.2z"/>
<path fill="#831910" stroke="#831910" d="M1322.8 424.9l1.8 3.4-4.3 3.1-1.8-3.3z"/>
<path fill="#c8291b" stroke="#c8291b" d="M1147.9 368.6l2.0-4.0-4.1-6.5-2.0 4.0zM1152.0 374.9l2.0-4.1-4.1-6.2-2.0 4.0z"/>
<path fill="#7b170f" stroke="#7b170f" d="M1312.4 425.9l1.8 4.1-4.3 .6-1.8-4.1z"/>
<path fill="#cc2a1c" stroke="#cc2a1c" d="M1156.1 380.5l2.0-4.0-4.1-5.7-2.0 4.1z"/>
<path fill="#7f180f" stroke="#7f180f" d="M1333.4 419.4l1.8 2.3-4.4 4.8-1.8-2.3z"/>
<path fill="#590f09" stroke="#590f09" d="M1356.6 402.3l1.9-1.7-4.4 4.6-1.9 1.6z"/>
<path fill="#9d1f14" stroke="#9d1f14" d="M1174.9 388.3l1.9-2.8-4.2-1.0-2.0 2.8z"/>
<path fill="#cf2b1d" stroke="#cf2b1d" d="M1160.3 385.3l2.0-4.1-4.2-4.7-2.0 4.0z"/>
<path fill="#d92d1e" stroke="#d92d1e" d="M1125.2 344.5l2.1-5.2-4.2-3.4-2.0 5.2z"/>
<path fill="#c5281b" stroke="#c5281b" d="M1114.8 345.0l2.0-6.1-4.2-.8-2.0 6.1z"/>
<path fill="#60110a" stroke="#60110a" d="M1297.9 419.0l1.7 4.6-4.2-3.4-1.7-4.6z"/>
<path fill="#5d100a" stroke="#5d100a" d="M1185.4 383.5l2.0-1.4-4.4 1.7-1.9 1.4z"/>
<path fill="#b02418" stroke="#b02418" d="M1379.8 385.4l2.0-5.3-4.3 0-2.0 5.4z"/>
<path fill="#65120b" stroke="#65120b" d="M1350.3 407.1l1.9-.3-4.4 5.1-1.9 .3z"/>
<path fill="#cf2b1d" stroke="#cf2b1d" d="M1164.4 388.9l2.0-4.0-4.1-3.7-2.0 4.1z"/>
<path fill="#b02418" stroke="#b02418" d="M1108.5 350.9l2.1-6.7-4.3 .6-2.1 6.7z"/>
<path fill="#dc2e1f" stroke="#dc2e1f" d="M1129.4 349.1l2.0-5.2-4.1-4.6-2.1 5.2z"/>
<path fill="#9d1f14" stroke="#9d1f14" d="M1102.1 358.5l2.1-7.0-4.3 1.9-2.1 7.0z"/>
<path fill="#8a1b11" stroke="#8a1b11" d="M1373.5 389.8l2.0-4.3-4.3 1.4-2.0 4.3z"/>
<path fill="#69130c" stroke="#69130c" d="M1302.1 421.1l1.8 4.7-4.3-2.2-1.7-4.6z"/>
<path fill="#d92d1e" stroke="#d92d1e" d="M1133.5 354.6l2.0-5.2-4.1-5.5-2.0 5.2z"/>
<path fill="#861a10" stroke="#861a10" d="M1316.7 423.9l1.8 4.2-4.3 1.9-1.8-4.1z"/>
<path fill="#d52c1e" stroke="#d52c1e" d="M1119.0 347.1l2.1-6.0-4.3-2.2-2.0 6.1zM1137.6 360.8l2.1-5.2-4.2-6.2-2.0 5.2z"/>
<path fill="#831910" stroke="#831910" d="M1179.2 387.9l1.9-2.7-4.3 .3-1.9 2.8z"/>
<path fill="#74160e" stroke="#74160e" d="M1344.1 411.1l1.8 1.1-4.4 5.3-1.9-1.1z"/>
<path fill="#881a11" stroke="#881a11" d="M1327.2 420.8l1.8 3.4-4.4 4.1-1.8-3.4z"/>
<path fill="#c8291b" stroke="#c8291b" d="M1168.7 391.3l1.9-4.0-4.2-2.4-2.0 4.0z"/>
<path fill="#d52c1e" stroke="#d52c1e" d="M1141.8 367.3l2.0-5.2-4.1-6.5-2.1 5.2zM1145.9 373.8l2.0-5.2-4.1-6.5-2.0 5.2z"/>
<path fill="#66120b" stroke="#66120b" d="M1367.2 394.2l2.0-3.0-4.4 2.7-1.9 3.0z"/>
<path fill="#d52c1e" stroke="#d52c1e" d="M1150.0 380.0l2.0-5.1-4.1-6.3-2.0 5.2z"/>
<path fill="#d92d1e" stroke="#d92d1e" d="M1154.1 385.7l2.0-5.2-4.1-5.6-2.0 5.1z"/>
<path fill="#c8291b" stroke="#c8291b" d="M1112.8 351.7l2.0-6.7-4.2-.8-2.1 6.7z"/>
<path fill="#e02f1f" stroke="#e02f1f" d="M1123.2 350.6l2.0-6.1-4.1-3.4-2.1 6.0z"/>
<path fill="#580f09" stroke="#580f09" d="M1189.8 380.5l1.9-1.4-4.3 3.0-2.0 1.4z"/>
<path fill="#74160e" stroke="#74160e" d="M1306.3 421.9l1.8 4.6-4.2-.7-1.8-4.7z"/>
<path fill="#580f09" stroke="#580f09" d="M1361.0 398.5l1.9-1.6-4.4 3.7-1.9 1.7z"/>
<path fill="#dc2e1f" stroke="#dc2e1f" d="M1158.3 390.4l2.0-5.1-4.2-4.8-2.0 5.2z"/>
<path fill="#811910" stroke="#811910" d="M1337.8 414.1l1.8 2.3-4.4 5.3-1.8-2.3z"/>
<path fill="#b32418" stroke="#b32418" d="M1106.4 357.9l2.1-7.0-4.3 .6-2.1 7.0z"/>
<path fill="#b62518" stroke="#b62518" d="M1172.9 392.3l2.0-4.0-4.3-1.0-1.9 4.0z"/>
<path fill="#a52116" stroke="#a52116" d="M1377.8 389.7l2.0-4.3-4.3 .1-2.0 4.3z"/>
<path fill="#e02f1f" stroke="#e02f1f" d="M1127.4 355.2l2.0-6.1-4.2-4.6-2.0 6.1z"/>
<path fill="#d92d1e" stroke="#d92d1e" d="M1162.4 394.1l2.0-5.2-4.1-3.6-2.0 5.1z"/>
<path fill="#63110b" stroke="#63110b" d="M1354.7 402.6l1.9-.3-4.4 4.5-1.9 .3z"/>
<path fill="#6f140d" stroke="#6f140d" d="M1183.5 386.2l1.9-2.7-4.3 1.7-1.9 2.7z"/>
<path fill="#e02f1f" stroke="#e02f1f" d="M1131.5 360.7l2.0-6.1-4.1-5.5-2.0 6.1z"/>
<path fill="#d92d1e" stroke="#d92d1e" d="M1117.0 353.8l2.0-6.7-4.2-2.1-2.0 6.7z"/>
<path fill="#8c1b12" stroke="#8c1b12" d="M1321.1 420.8l1.7 4.1-4.3 3.2-1.8-4.2z"/>
<path fill="#e02f1f" stroke="#e02f1f" d="M1135.6 366.8l2.0-6.0-4.1-6.2-2.0 6.1z"/>
<path fill="#76160e" stroke="#76160e" d="M1371.5 392.8l2.0-3.0-4.3 1.4-2.0 3.0z"/>
<path fill="#dc2e1f" stroke="#dc2e1f" d="M1139.7 373.3l2.1-6.0-4.2-6.5-2.0 6.0zM1143.8 379.9l2.1-6.1-4.1-6.5-2.1 6.0z"/>
<path fill="#7f180f" stroke="#7f180f" d="M1310.6 421.2l1.8 4.7-4.3 .6-1.8-4.6z"/>
<path fill="#d22b1d" stroke="#d22b1d" d="M1166.6 396.5l2.1-5.2-4.3-2.4-2.0 5.2z"/>
<path fill="#8a1b11" stroke="#8a1b11" d="M1331.6 416.0l1.8 3.4-4.4 4.8-1.8-3.4z"/>
<path fill="#dc2e1f" stroke="#dc2e1f" d="M1147.9 386.1l2.1-6.1-4.1-6.2-2.1 6.1z"/>
<path fill="#c8291b" stroke="#c8291b" d="M1110.7 358.7l2.1-7.0-4.3-.8-2.1 7.0z"/>
<path fill="#72150d" stroke="#72150d" d="M1348.5 406.0l1.8 1.1-4.4 5.1-1.8-1.1z"/>
<path fill="#9b1f14" stroke="#9b1f14" d="M1177.2 392.0l2.0-4.1-4.3 .4-2.0 4.0z"/>
<path fill="#e02f1f" stroke="#e02f1f" d="M1152.1 391.8l2.0-6.1-4.1-5.7-2.1 6.1z"/>
<path fill="#e32f20" stroke="#e32f20" d="M1121.2 357.3l2.0-6.7-4.2-3.5-2.0 6.7z"/>
<path fill="#e02f1f" stroke="#e02f1f" d="M1156.2 396.5l2.1-6.1-4.2-4.7-2.0 6.1z"/>
<path fill="#e32f20" stroke="#e32f20" d="M1125.3 361.9l2.1-6.7-4.2-4.6-2.0 6.7z"/>
<path fill="#c2281a" stroke="#c2281a" d="M1170.9 397.5l2.0-5.2-4.2-1.0-2.1 5.2z"/>
<path fill="#61110b" stroke="#61110b" d="M1187.8 383.3l2.0-2.8-4.4 3.0-1.9 2.7z"/>
<path fill="#811910" stroke="#811910" d="M1342.2 408.8l1.9 2.3-4.5 5.3-1.8-2.3z"/>
<path fill="#e02f1f" stroke="#e02f1f" d="M1160.4 400.2l2.0-6.1-4.1-3.7-2.1 6.1z"/>
<path fill="#d92d1e" stroke="#d92d1e" d="M1114.9 360.8l2.1-7.0-4.2-2.1-2.1 7.0z"/>
<path fill="#e32f20" stroke="#e32f20" d="M1129.4 367.4l2.1-6.7-4.1-5.5-2.1 6.7z"/>
<path fill="#8e1c12" stroke="#8e1c12" d="M1375.8 392.7l2.0-3.0-4.3 .1-2.0 3.0z"/>
<path fill="#6a130c" stroke="#6a130c" d="M1300.3 416.3l1.8 4.8-4.2-2.1-1.8-4.8z"/>
<path fill="#5f110a" stroke="#5f110a" d="M1359.1 398.8l1.9-.3-4.4 3.8-1.9 .3z"/>
<path fill="#e32f20" stroke="#e32f20" d="M1133.6 373.5l2.0-6.7-4.1-6.1-2.1 6.7z"/>
<path fill="#8a1b11" stroke="#8a1b11" d="M1315.0 419.3l1.7 4.6-4.3 2.0-1.8-4.7z"/>
<path fill="#8e1c12" stroke="#8e1c12" d="M1325.5 416.7l1.7 4.1-4.4 4.1-1.7-4.1z"/>
<path fill="#e02f1f" stroke="#e02f1f" d="M1137.7 380.0l2.0-6.7-4.1-6.5-2.0 6.7z"/>
<path fill="#811910" stroke="#811910" d="M1181.5 390.3l2.0-4.1-4.3 1.7-2.0 4.1z"/>
<path fill="#e02f1f" stroke="#e02f1f" d="M1141.8 386.6l2.0-6.7-4.1-6.6-2.0 6.7z"/>
<path fill="#e32f20" stroke="#e32f20" d="M1145.9 392.8l2.0-6.7-4.1-6.2-2.0 6.7z"/>
<path fill="#d92d1e" stroke="#d92d1e" d="M1164.6 402.6l2.0-6.1-4.2-2.4-2.0 6.1z"/>
<path fill="#e32f20" stroke="#e32f20" d="M1119.1 364.3l2.1-7.0-4.2-3.5-2.1 7.0zM1150.0 398.4l2.1-6.6-4.2-5.7-2.0 6.7z"/>
<path fill="#a82216" stroke="#a82216" d="M1175.2 397.1l2.0-5.1-4.3 .3-2.0 5.2z"/>
<path fill="#8c1b12" stroke="#8c1b12" d="M1336.0 410.8l1.8 3.3-4.4 5.3-1.8-3.4z"/>
<path fill="#63110b" stroke="#63110b" d="M1369.6 394.5l1.9-1.7-4.3 1.4-1.9 1.7z"/>
<path fill="#e32f20" stroke="#e32f20" d="M1154.2 403.2l2.0-6.7-4.1-4.7-2.1 6.6z"/>
<path fill="#71150d" stroke="#71150d" d="M1352.9 401.5l1.8 1.1-4.4 4.5-1.8-1.1z"/>
<path fill="#76160e" stroke="#76160e" d="M1304.6 417.0l1.7 4.9-4.2-.8-1.8-4.8z"/>
<path fill="#e63020" stroke="#e63020" d="M1123.3 368.9l2.0-7.0-4.1-4.6-2.1 7.0z"/>
<path fill="#c8291b" stroke="#c8291b" d="M1168.9 403.6l2.0-6.1-4.3-1.0-2.0 6.1z"/>
<path fill="#e32f20" stroke="#e32f20" d="M1158.3 406.9l2.1-6.7-4.2-3.7-2.0 6.7z"/>
<path fill="#e63020" stroke="#e63020" d="M1127.4 374.4l2.0-7.0-4.1-5.5-2.0 7.0z"/>
<path fill="#5b100a" stroke="#5b100a" d="M1192.2 379.4l2.0-2.8-4.4 3.9-2.0 2.8z"/>
<path fill="#e32f20" stroke="#e32f20" d="M1131.5 380.5l2.1-7.0-4.2-6.1-2.0 7.0zM1135.6 387.1l2.1-7.1-4.1-6.5-2.1 7.0z"/>
<path fill="#911c12" stroke="#911c12" d="M1319.3 416.2l1.8 4.6-4.4 3.1-1.7-4.6z"/>
<path fill="#e32f20" stroke="#e32f20" d="M1139.7 393.6l2.1-7.0-4.1-6.6-2.1 7.1z"/>
<path fill="#5b100a" stroke="#5b100a" d="M1363.4 396.2l1.9-.3-4.3 2.6-1.9 .3z"/>
<path fill="#7f180f" stroke="#7f180f" d="M1346.6 403.7l1.9 2.3-4.4 5.1-1.9-2.3z"/>
<path fill="#6f140d" stroke="#6f140d" d="M1185.9 387.4l1.9-4.1-4.3 2.9-2.0 4.1z"/>
<path fill="#e32f20" stroke="#e32f20" d="M1143.8 399.8l2.1-7.0-4.1-6.2-2.1 7.0z"/>
<path fill="#dc2e1f" stroke="#dc2e1f" d="M1162.6 409.3l2.0-6.7-4.2-2.4-2.1 6.7z"/>
<path fill="#e32f20" stroke="#e32f20" d="M1148.0 405.5l2.0-7.1-4.1-5.6-2.1 7.0z"/>
<path fill="#911c12" stroke="#911c12" d="M1329.8 411.9l1.8 4.1-4.4 4.8-1.7-4.1z"/>
<path fill="#8e1c12" stroke="#8e1c12" d="M1179.5 395.4l2.0-5.1-4.3 1.7-2.0 5.1z"/>
<path fill="#72150d" stroke="#72150d" d="M1373.9 394.4l1.9-1.7-4.3 .1-1.9 1.7z"/>
<path fill="#811910" stroke="#811910" d="M1308.9 416.4l1.7 4.8-4.3 .7-1.7-4.9z"/>
<path fill="#e63020" stroke="#e63020" d="M1152.1 410.2l2.1-7.0-4.2-4.8-2.0 7.1z"/>
<path fill="#b02418" stroke="#b02418" d="M1173.1 403.2l2.1-6.1-4.3 .4-2.0 6.1z"/>
<path fill="#6d140d" stroke="#6d140d" d="M1357.2 397.7l1.9 1.1-4.4 3.8-1.8-1.1z"/>
<path fill="#e32f20" stroke="#e32f20" d="M1156.3 413.9l2.0-7.0-4.1-3.7-2.1 7.0z"/>
<path fill="#8c1b12" stroke="#8c1b12" d="M1340.4 405.5l1.8 3.3-4.4 5.3-1.8-3.3z"/>
<path fill="#cc2a1c" stroke="#cc2a1c" d="M1166.8 410.3l2.1-6.7-4.3-1.0-2.0 6.7z"/>
<path fill="#580f09" stroke="#580f09" d="M1367.7 394.7l1.9-.2-4.3 1.4-1.9 .3z"/>
<path fill="#590f09" stroke="#590f09" d="M1196.6 374.7l2.0-2.8-4.4 4.7-2.0 2.8z"/>
<path fill="#dc2e1f" stroke="#dc2e1f" d="M1160.5 416.3l2.1-7.0-4.3-2.4-2.0 7.0z"/>
<path fill="#931d13" stroke="#931d13" d="M1323.7 412.1l1.8 4.6-4.4 4.1-1.8-4.6z"/>
<path fill="#8a1b11" stroke="#8a1b11" d="M1313.2 414.5l1.8 4.8-4.4 1.9-1.7-4.8z"/>
<path fill="#65120b" stroke="#65120b" d="M1190.2 383.4l2.0-4.0-4.4 3.9-1.9 4.1z"/>
<path fill="#7b170f" stroke="#7b170f" d="M1183.8 392.5l2.1-5.1-4.4 2.9-2.0 5.1z"/>
<path fill="#7f180f" stroke="#7f180f" d="M1351.0 399.2l1.9 2.3-4.4 4.5-1.9-2.3z"/>
<path fill="#981e14" stroke="#981e14" d="M1177.5 401.5l2.0-6.1-4.3 1.7-2.1 6.1z"/>
<path fill="#b62518" stroke="#b62518" d="M1171.1 409.9l2.0-6.7-4.2 .4-2.1 6.7z"/>
<path fill="#931d13" stroke="#931d13" d="M1334.3 406.7l1.7 4.1-4.4 5.2-1.8-4.1z"/>
<path fill="#cc2a1c" stroke="#cc2a1c" d="M1164.7 417.3l2.1-7.0-4.2-1.0-2.1 7.0z"/>
<path fill="#74160e" stroke="#74160e" d="M1302.8 412.3l1.8 4.7-4.3-.7-1.7-4.7z"/>
<path fill="#68130c" stroke="#68130c" d="M1361.6 395.1l1.8 1.1-4.3 2.6-1.9-1.1z"/>
<path fill="#5d100a" stroke="#5d100a" d="M1372.0 394.6l1.9-.2-4.3 .1-1.9 .2z"/>
<path fill="#8a1b11" stroke="#8a1b11" d="M1344.8 400.4l1.8 3.3-4.4 5.1-1.8-3.3z"/>
<path fill="#911c12" stroke="#911c12" d="M1317.6 411.3l1.7 4.9-4.3 3.1-1.8-4.8z"/>
<path fill="#9d1f14" stroke="#9d1f14" d="M1175.4 408.2l2.1-6.7-4.4 1.7-2.0 6.7z"/>
<path fill="#861a10" stroke="#861a10" d="M1181.8 398.6l2.0-6.1-4.3 2.9-2.0 6.1z"/>
<path fill="#961d13" stroke="#961d13" d="M1328.1 407.3l1.7 4.6-4.3 4.8-1.8-4.6z"/>
<path fill="#580f09" stroke="#580f09" d="M1201.0 369.5l2.0-2.7-4.4 5.1-2.0 2.8z"/>
<path fill="#6f140d" stroke="#6f140d" d="M1188.2 388.6l2.0-5.2-4.3 4.0-2.1 5.1z"/>
<path fill="#5f110a" stroke="#5f110a" d="M1194.6 378.7l2.0-4.0-4.4 4.7-2.0 4.0z"/>
<path fill="#b62518" stroke="#b62518" d="M1169.0 416.9l2.1-7.0-4.3 .4-2.1 7.0z"/>
<path fill="#811910" stroke="#811910" d="M1307.1 411.7l1.8 4.7-4.3 .6-1.8-4.7z"/>
<path fill="#7b170f" stroke="#7b170f" d="M1355.4 395.5l1.8 2.2-4.3 3.8-1.9-2.3z"/>
<path fill="#61110b" stroke="#61110b" d="M1365.9 393.7l1.8 1.0-4.3 1.5-1.8-1.1z"/>
<path fill="#931d13" stroke="#931d13" d="M1338.7 401.4l1.7 4.1-4.4 5.3-1.7-4.1z"/>
<path fill="#a02015" stroke="#a02015" d="M1173.3 415.2l2.1-7.0-4.3 1.7-2.1 7.0z"/>
<path fill="#8a1b11" stroke="#8a1b11" d="M1349.2 395.8l1.8 3.4-4.4 4.5-1.8-3.3z"/>
<path fill="#961d13" stroke="#961d13" d="M1321.9 407.2l1.8 4.9-4.4 4.1-1.7-4.9z"/>
<path fill="#8a1b11" stroke="#8a1b11" d="M1179.8 405.3l2.0-6.7-4.3 2.9-2.1 6.7zM1311.4 409.8l1.8 4.7-4.3 1.9-1.8-4.7z"/>
<path fill="#78160e" stroke="#78160e" d="M1186.2 394.7l2.0-6.1-4.4 3.9-2.0 6.1z"/>
<path fill="#5a0f09" stroke="#5a0f09" d="M1370.1 393.6l1.9 1.0-4.3 .1-1.8-1.0z"/>
<path fill="#68130c" stroke="#68130c" d="M1192.6 383.9l2.0-5.2-4.4 4.7-2.0 5.2z"/>
<path fill="#76160e" stroke="#76160e" d="M1359.7 392.8l1.9 2.3-4.4 2.6-1.8-2.2z"/>
<path fill="#961d13" stroke="#961d13" d="M1332.5 402.0l1.8 4.7-4.5 5.2-1.7-4.6z"/>
<path fill="#580f09" stroke="#580f09" d="M1205.4 364.2l2.0-2.8-4.4 5.4-2.0 2.7z"/>
<path fill="#5d100a" stroke="#5d100a" d="M1199.0 373.6l2.0-4.1-4.4 5.2-2.0 4.0z"/>
<path fill="#931d13" stroke="#931d13" d="M1343.1 396.3l1.7 4.1-4.4 5.1-1.7-4.1z"/>
<path fill="#8c1b12" stroke="#8c1b12" d="M1177.7 412.3l2.1-7.0-4.4 2.9-2.1 7.0z"/>
<path fill="#911c12" stroke="#911c12" d="M1315.8 406.6l1.8 4.7-4.4 3.2-1.8-4.7z"/>
<path fill="#7d180f" stroke="#7d180f" d="M1184.1 401.4l2.1-6.7-4.4 3.9-2.0 6.7z"/>
<path fill="#881a11" stroke="#881a11" d="M1353.6 392.1l1.8 3.4-4.4 3.7-1.8-3.4z"/>
<path fill="#981e14" stroke="#981e14" d="M1326.3 402.4l1.8 4.9-4.4 4.8-1.8-4.9z"/>
<path fill="#6f140d" stroke="#6f140d" d="M1364.0 391.4l1.9 2.3-4.3 1.4-1.9-2.3zM1190.6 390.0l2.0-6.1-4.4 4.7-2.0 6.1z"/>
<path fill="#65120b" stroke="#65120b" d="M1197.0 378.7l2.0-5.1-4.4 5.1-2.0 5.2z"/>
<path fill="#961d13" stroke="#961d13" d="M1336.9 396.7l1.8 4.7-4.4 5.3-1.8-4.7z"/>
<path fill="#580f09" stroke="#580f09" d="M1209.8 359.0l2.0-2.7-4.4 5.1-2.0 2.8z"/>
<path fill="#5d100a" stroke="#5d100a" d="M1203.4 368.2l2.0-4.0-4.4 5.3-2.0 4.1z"/>
<path fill="#911c12" stroke="#911c12" d="M1347.5 391.7l1.7 4.1-4.4 4.6-1.7-4.1z"/>
<path fill="#7f180f" stroke="#7f180f" d="M1182.1 408.4l2.0-7.0-4.3 3.9-2.1 7.0z"/>
<path fill="#65120b" stroke="#65120b" d="M1368.3 391.3l1.8 2.3-4.2 .1-1.9-2.3z"/>
<path fill="#861a10" stroke="#861a10" d="M1309.7 405.5l1.7 4.3-4.3 1.9-1.8-4.2z"/>
<path fill="#931d13" stroke="#931d13" d="M1320.2 402.5l1.7 4.7-4.3 4.1-1.8-4.7z"/>
<path fill="#811910" stroke="#811910" d="M1357.9 389.4l1.8 3.4-4.3 2.7-1.8-3.4z"/>
<path fill="#74160e" stroke="#74160e" d="M1188.5 396.7l2.1-6.7-4.4 4.7-2.1 6.7z"/>
<path fill="#981e14" stroke="#981e14" d="M1330.7 397.2l1.8 4.8-4.4 5.3-1.8-4.9z"/>
<path fill="#6a130c" stroke="#6a130c" d="M1195.0 384.8l2.0-6.1-4.4 5.2-2.0 6.1z"/>
<path fill="#5f110a" stroke="#5f110a" d="M1264.2 366.5l1.8 2.5-4.1-6.2-1.8-2.5z"/>
<path fill="#60110a" stroke="#60110a" d="M1268.3 373.1l1.8 2.5-4.1-6.6-1.8-2.5z"/>
<path fill="#64120b" stroke="#64120b" d="M1201.4 373.4l2.0-5.2-4.4 5.4-2.0 5.1z"/>
<path fill="#60110a" stroke="#60110a" d="M1272.4 379.6l1.8 2.5-4.1-6.5-1.8-2.5z"/>
<path fill="#5f110a" stroke="#5f110a" d="M1276.5 385.7l1.8 2.5-4.1-6.1-1.8-2.5z"/>
<path fill="#590f09" stroke="#590f09" d="M1214.2 354.4l2.0-2.8-4.4 4.7-2.0 2.7z"/>
<path fill="#961d13" stroke="#961d13" d="M1341.3 391.6l1.8 4.7-4.4 5.1-1.8-4.7z"/>
<path fill="#5d100a" stroke="#5d100a" d="M1207.8 363.1l2.0-4.1-4.4 5.2-2.0 4.0zM1280.6 391.2l1.8 2.5-4.1-5.5-1.8-2.5z"/>
<path fill="#8c1b12" stroke="#8c1b12" d="M1314.0 402.4l1.8 4.2-4.4 3.2-1.7-4.3z"/>
<path fill="#79170e" stroke="#79170e" d="M1362.3 388.0l1.7 3.4-4.3 1.4-1.8-3.4z"/>
<path fill="#8e1c12" stroke="#8e1c12" d="M1351.8 388.0l1.8 4.1-4.4 3.7-1.7-4.1z"/>
<path fill="#78160e" stroke="#78160e" d="M1186.5 403.7l2.0-7.0-4.4 4.7-2.0 7.0z"/>
<path fill="#961d13" stroke="#961d13" d="M1324.6 397.7l1.7 4.7-4.4 4.8-1.7-4.7z"/>
<path fill="#6f140d" stroke="#6f140d" d="M1192.9 391.5l2.1-6.7-4.4 5.2-2.1 6.7z"/>
<path fill="#580f09" stroke="#580f09" d="M1224.9 344.8l1.9-1.4-4.3 2.9-2.0 1.4z"/>
<path fill="#981e14" stroke="#981e14" d="M1335.1 391.9l1.8 4.8-4.4 5.3-1.8-4.8z"/>
<path fill="#6a130c" stroke="#6a130c" d="M1199.4 379.5l2.0-6.1-4.4 5.3-2.0 6.1z"/>
<path fill="#61110b" stroke="#61110b" d="M1249.9 348.5l1.9 1.3-4.2-3.6-1.9-1.4z"/>
<path fill="#6f140d" stroke="#6f140d" d="M1366.5 387.9l1.8 3.4-4.3 .1-1.7-3.4z"/>
<path fill="#5b100a" stroke="#5b100a" d="M1218.6 350.5l1.9-2.8-4.3 3.9-2.0 2.8z"/>
<path fill="#65120b" stroke="#65120b" d="M1205.8 368.3l2.0-5.2-4.4 5.1-2.0 5.2z"/>
<path fill="#961d13" stroke="#961d13" d="M1345.7 387.1l1.8 4.6-4.4 4.6-1.8-4.7z"/>
<path fill="#5f110a" stroke="#5f110a" d="M1212.2 358.4l2.0-4.0-4.4 4.6-2.0 4.1z"/>
<path fill="#66120b" stroke="#66120b" d="M1254.1 353.3l1.8 1.3-4.1-4.8-1.9-1.3z"/>
<path fill="#911c12" stroke="#911c12" d="M1318.4 398.3l1.8 4.2-4.4 4.1-1.8-4.2z"/>
<path fill="#8a1b11" stroke="#8a1b11" d="M1356.2 385.3l1.7 4.1-4.3 2.7-1.8-4.1z"/>
<path fill="#6a130c" stroke="#6a130c" d="M1258.2 359.0l1.9 1.3-4.2-5.7-1.8-1.3z"/>
<path fill="#72150d" stroke="#72150d" d="M1190.9 398.5l2.0-7.0-4.4 5.2-2.0 7.0z"/>
<path fill="#6c140c" stroke="#6c140c" d="M1262.3 365.2l1.9 1.3-4.1-6.2-1.9-1.3z"/>
<path fill="#6d140d" stroke="#6d140d" d="M1266.4 371.7l1.9 1.4-4.1-6.6-1.9-1.3z"/>
<path fill="#981e14" stroke="#981e14" d="M1329.0 392.5l1.7 4.7-4.4 5.2-1.7-4.7z"/>
<path fill="#6d140d" stroke="#6d140d" d="M1270.5 378.2l1.9 1.4-4.1-6.5-1.9-1.4z"/>
<path fill="#61110b" stroke="#61110b" d="M1239.7 342.4l1.8 0-4.2-1.0-1.9 0z"/>
<path fill="#5d100a" stroke="#5d100a" d="M1229.2 343.1l1.9-1.4-4.3 1.7-1.9 1.4z"/>
<path fill="#6c140c" stroke="#6c140c" d="M1274.7 384.4l1.8 1.3-4.1-6.1-1.9-1.4z"/>
<path fill="#6f140d" stroke="#6f140d" d="M1197.3 386.2l2.1-6.7-4.4 5.3-2.1 6.7z"/>
<path fill="#69130c" stroke="#69130c" d="M1278.8 389.9l1.8 1.3-4.1-5.5-1.8-1.3z"/>
<path fill="#981e14" stroke="#981e14" d="M1339.5 386.8l1.8 4.8-4.4 5.1-1.8-4.8z"/>
<path fill="#65120b" stroke="#65120b" d="M1282.9 394.4l1.9 1.4-4.2-4.6-1.8-1.3z"/>
<path fill="#6c140c" stroke="#6c140c" d="M1203.8 374.3l2.0-6.0-4.4 5.1-2.0 6.1z"/>
<path fill="#61110b" stroke="#61110b" d="M1222.9 347.6l2.0-2.8-4.4 2.9-1.9 2.8z"/>
<path fill="#811910" stroke="#811910" d="M1360.5 383.9l1.8 4.1-4.4 1.4-1.7-4.1z"/>
<path fill="#6d140d" stroke="#6d140d" d="M1243.9 344.8l1.8 0-4.2-2.4-1.8 0z"/>
<path fill="#931d13" stroke="#931d13" d="M1350.1 383.4l1.7 4.6-4.3 3.7-1.8-4.6z"/>
<path fill="#68130c" stroke="#68130c" d="M1210.2 363.6l2.0-5.2-4.4 4.7-2.0 5.2z"/>
<path fill="#65120b" stroke="#65120b" d="M1216.6 354.5l2.0-4.0-4.4 3.9-2.0 4.0z"/>
<path fill="#5f110a" stroke="#5f110a" d="M1287.1 397.9l1.9 1.3-4.2-3.4-1.9-1.4z"/>
<path fill="#931d13" stroke="#931d13" d="M1322.8 393.5l1.8 4.2-4.4 4.8-1.8-4.2z"/>
<path fill="#6a130c" stroke="#6a130c" d="M1233.5 342.8l1.9-1.4-4.3 .3-1.9 1.4z"/>
<path fill="#76160e" stroke="#76160e" d="M1248.0 348.5l1.9 0-4.2-3.7-1.8 0z"/>
<path fill="#71150d" stroke="#71150d" d="M1195.3 393.2l2.0-7.0-4.4 5.3-2.0 7.0z"/>
<path fill="#981e14" stroke="#981e14" d="M1333.4 387.2l1.7 4.7-4.4 5.3-1.7-4.7z"/>
<path fill="#7b170f" stroke="#7b170f" d="M1252.2 353.3l1.9 0-4.2-4.8-1.9 0z"/>
<path fill="#78160e" stroke="#78160e" d="M1364.8 383.8l1.7 4.1-4.2 .1-1.8-4.1z"/>
<path fill="#71150d" stroke="#71150d" d="M1201.7 381.0l2.1-6.7-4.4 5.2-2.1 6.7z"/>
<path fill="#7f180f" stroke="#7f180f" d="M1256.3 359.0l1.9 0-4.1-5.7-1.9 0z"/>
<path fill="#6f140d" stroke="#6f140d" d="M1227.3 345.9l1.9-2.8-4.3 1.7-2.0 2.8z"/>
<path fill="#811910" stroke="#811910" d="M1260.4 365.2l1.9 0-4.1-6.2-1.9 0z"/>
<path fill="#7d180f" stroke="#7d180f" d="M1237.7 343.8l2.0-1.4-4.3-1.0-1.9 1.4z"/>
<path fill="#961d13" stroke="#961d13" d="M1343.9 382.3l1.8 4.8-4.4 4.5-1.8-4.8z"/>
<path fill="#811910" stroke="#811910" d="M1264.5 371.7l1.9 0-4.1-6.5-1.9 0zM1268.7 378.3l1.8-.1-4.1-6.5-1.9 0z"/>
<path fill="#8e1c12" stroke="#8e1c12" d="M1354.4 380.7l1.8 4.6-4.4 2.7-1.7-4.6z"/>
<path fill="#6f140d" stroke="#6f140d" d="M1208.2 369.6l2.0-6.0-4.4 4.7-2.0 6.0z"/>
<path fill="#7f180f" stroke="#7f180f" d="M1272.8 384.4l1.9 0-4.2-6.2-1.8 .1z"/>
<path fill="#6f140d" stroke="#6f140d" d="M1221.0 351.6l1.9-4.0-4.3 2.9-2.0 4.0zM1214.6 359.7l2.0-5.2-4.4 3.9-2.0 5.2z"/>
<path fill="#7f180f" stroke="#7f180f" d="M1276.9 389.9l1.9 0-4.1-5.5-1.9 0z"/>
<path fill="#931d13" stroke="#931d13" d="M1327.2 388.3l1.8 4.2-4.4 5.2-1.8-4.2z"/>
<path fill="#7b170f" stroke="#7b170f" d="M1281.1 394.5l1.8-.1-4.1-4.5-1.9 0z"/>
<path fill="#8e1c12" stroke="#8e1c12" d="M1242.0 346.2l1.9-1.4-4.2-2.4-2.0 1.4z"/>
<path fill="#861a10" stroke="#861a10" d="M1231.5 345.5l2.0-2.7-4.3 .3-1.9 2.8z"/>
<path fill="#72150d" stroke="#72150d" d="M1199.7 388.0l2.0-7.0-4.4 5.2-2.0 7.0z"/>
<path fill="#74160e" stroke="#74160e" d="M1285.2 397.9l1.9 0-4.2-3.5-1.8 .1z"/>
<path fill="#961d13" stroke="#961d13" d="M1337.8 382.1l1.7 4.7-4.4 5.1-1.7-4.7zM1246.1 349.9l1.9-1.4-4.1-3.7-1.9 1.4z"/>
<path fill="#861a10" stroke="#861a10" d="M1358.7 379.3l1.8 4.6-4.3 1.4-1.8-4.6z"/>
<path fill="#74160e" stroke="#74160e" d="M1206.1 376.3l2.1-6.7-4.4 4.7-2.1 6.7z"/>
<path fill="#811910" stroke="#811910" d="M1225.3 349.9l2.0-4.0-4.4 1.7-1.9 4.0z"/>
<path fill="#931d13" stroke="#931d13" d="M1348.3 378.5l1.8 4.9-4.4 3.7-1.8-4.8z"/>
<path fill="#9b1f14" stroke="#9b1f14" d="M1250.3 354.7l1.9-1.4-4.2-4.8-1.9 1.4z"/>
<path fill="#6a130c" stroke="#6a130c" d="M1289.5 400.0l1.8 0-4.2-2.1-1.9 0z"/>
<path fill="#78160e" stroke="#78160e" d="M1212.6 365.7l2.0-6.0-4.4 3.9-2.0 6.0z"/>
<path fill="#7d180f" stroke="#7d180f" d="M1218.9 356.8l2.1-5.2-4.4 2.9-2.0 5.2z"/>
<path fill="#9d1f14" stroke="#9d1f14" d="M1235.8 346.6l1.9-2.8-4.2-1.0-2.0 2.7z"/>
<path fill="#9b1f14" stroke="#9b1f14" d="M1254.4 360.4l1.9-1.4-4.1-5.7-1.9 1.4zM1258.5 366.6l1.9-1.4-4.1-6.2-1.9 1.4zM1262.6 373.1l1.9-1.4-4.1-6.5-1.9 1.4zM1266.7 379.6l2.0-1.3-4.2-6.6-1.9 1.4zM1270.9 385.8l1.9-1.4-4.1-6.1-2.0 1.3z"/>
<path fill="#931d13" stroke="#931d13" d="M1331.6 382.9l1.8 4.3-4.4 5.3-1.8-4.2z"/>
<path fill="#5f110a" stroke="#5f110a" d="M1293.7 400.8l1.9 0-4.3-.8-1.8 0z"/>
<path fill="#9b1f14" stroke="#9b1f14" d="M1275.0 391.3l1.9-1.4-4.1-5.5-1.9 1.4z"/>
<path fill="#7b170f" stroke="#7b170f" d="M1363.0 379.2l1.8 4.6-4.3 .1-1.8-4.6z"/>
<path fill="#b02418" stroke="#b02418" d="M1240.0 349.0l2.0-2.8-4.3-2.4-1.9 2.8z"/>
<path fill="#9b1f14" stroke="#9b1f14" d="M1229.6 349.6l1.9-4.1-4.2 .4-2.0 4.0z"/>
<path fill="#78160e" stroke="#78160e" d="M1204.1 383.4l2.0-7.1-4.4 4.7-2.0 7.0z"/>
<path fill="#9b1f14" stroke="#9b1f14" d="M1279.1 395.8l2.0-1.3-4.2-4.6-1.9 1.4z"/>
<path fill="#961d13" stroke="#961d13" d="M1342.2 377.6l1.7 4.7-4.4 4.5-1.7-4.7z"/>
<path fill="#8e1c12" stroke="#8e1c12" d="M1352.6 375.9l1.8 4.8-4.3 2.7-1.8-4.9z"/>
<path fill="#7d180f" stroke="#7d180f" d="M1210.5 372.4l2.1-6.7-4.4 3.9-2.1 6.7z"/>
<path fill="#911c12" stroke="#911c12" d="M1223.3 355.1l2.0-5.2-4.3 1.7-2.1 5.2z"/>
<path fill="#b62518" stroke="#b62518" d="M1244.2 352.7l1.9-2.8-4.1-3.7-2.0 2.8z"/>
<path fill="#961d13" stroke="#961d13" d="M1283.3 399.3l1.9-1.4-4.1-3.4-2.0 1.3z"/>
<path fill="#861a10" stroke="#861a10" d="M1216.9 362.8l2.0-6.0-4.3 2.9-2.0 6.0z"/>
<path fill="#b92619" stroke="#b92619" d="M1248.3 357.5l2.0-2.8-4.2-4.8-1.9 2.8z"/>
<path fill="#b62518" stroke="#b62518" d="M1233.8 350.6l2.0-4.0-4.3-1.1-1.9 4.1z"/>
<path fill="#8a1b11" stroke="#8a1b11" d="M1287.5 401.4l2.0-1.4-4.3-2.1-1.9 1.4z"/>
<path fill="#b62518" stroke="#b62518" d="M1252.5 363.1l1.9-2.7-4.1-5.7-2.0 2.8z"/>
<path fill="#b32418" stroke="#b32418" d="M1256.6 369.4l1.9-2.8-4.1-6.2-1.9 2.7zM1260.7 375.9l1.9-2.8-4.1-6.5-1.9 2.8zM1264.8 382.4l1.9-2.8-4.1-6.5-1.9 2.8z"/>
<path fill="#ab2217" stroke="#ab2217" d="M1227.5 354.8l2.1-5.2-4.3 .3-2.0 5.2z"/>
<path fill="#b62518" stroke="#b62518" d="M1268.9 388.6l2.0-2.8-4.2-6.2-1.9 2.8z"/>
<path fill="#881a11" stroke="#881a11" d="M1357.0 374.4l1.7 4.9-4.3 1.4-1.8-4.8z"/>
<path fill="#7f180f" stroke="#7f180f" d="M1208.4 379.4l2.1-7.0-4.4 3.9-2.0 7.1z"/>
<path fill="#c8291b" stroke="#c8291b" d="M1238.0 353.1l2.0-4.1-4.2-2.4-2.0 4.0z"/>
<path fill="#b62518" stroke="#b62518" d="M1273.0 394.1l2.0-2.8-4.1-5.5-2.0 2.8z"/>
<path fill="#931d13" stroke="#931d13" d="M1346.5 373.8l1.8 4.7-4.4 3.8-1.7-4.7z"/>
<path fill="#981e14" stroke="#981e14" d="M1221.2 361.2l2.1-6.1-4.4 1.7-2.0 6.0z"/>
<path fill="#8a1b11" stroke="#8a1b11" d="M1214.9 369.5l2.0-6.7-4.3 2.9-2.1 6.7z"/>
<path fill="#79170e" stroke="#79170e" d="M1291.8 402.2l1.9-1.4-4.2-.8-2.0 1.4z"/>
<path fill="#b92619" stroke="#b92619" d="M1277.2 398.6l1.9-2.8-4.1-4.5-2.0 2.8z"/>
<path fill="#cf2b1d" stroke="#cf2b1d" d="M1242.2 356.7l2.0-4.0-4.2-3.7-2.0 4.1z"/>
<path fill="#b62518" stroke="#b62518" d="M1281.4 402.0l1.9-2.7-4.2-3.5-1.9 2.8z"/>
<path fill="#c2281a" stroke="#c2281a" d="M1231.8 355.8l2.0-5.2-4.2-1.0-2.1 5.2z"/>
<path fill="#cf2b1d" stroke="#cf2b1d" d="M1246.3 361.5l2.0-4.0-4.1-4.8-2.0 4.0z"/>
<path fill="#7d180f" stroke="#7d180f" d="M1361.2 374.3l1.8 4.9-4.3 .1-1.7-4.9z"/>
<path fill="#66120b" stroke="#66120b" d="M1296.1 401.5l1.9-1.4-4.3 .7-1.9 1.4z"/>
<path fill="#cc2a1c" stroke="#cc2a1c" d="M1250.5 367.2l2.0-4.1-4.2-5.6-2.0 4.0z"/>
<path fill="#b02418" stroke="#b02418" d="M1225.5 360.8l2.0-6.0-4.2 .3-2.1 6.1z"/>
<path fill="#c8291b" stroke="#c8291b" d="M1254.6 373.4l2.0-4.0-4.1-6.3-2.0 4.1z"/>
<path fill="#ad2317" stroke="#ad2317" d="M1285.6 404.2l1.9-2.8-4.2-2.1-1.9 2.7z"/>
<path fill="#911c12" stroke="#911c12" d="M1340.4 373.3l1.8 4.3-4.4 4.5-1.8-4.2z"/>
<path fill="#8e1c12" stroke="#8e1c12" d="M1212.8 376.6l2.1-7.1-4.4 2.9-2.1 7.0z"/>
<path fill="#c8291b" stroke="#c8291b" d="M1258.7 380.0l2.0-4.1-4.1-6.5-2.0 4.0z"/>
<path fill="#9d1f14" stroke="#9d1f14" d="M1219.2 367.9l2.0-6.7-4.3 1.6-2.0 6.7z"/>
<path fill="#c8291b" stroke="#c8291b" d="M1262.8 386.5l2.0-4.1-4.1-6.5-2.0 4.1z"/>
<path fill="#8e1c12" stroke="#8e1c12" d="M1350.9 371.2l1.7 4.7-4.3 2.6-1.8-4.7z"/>
<path fill="#d22b1d" stroke="#d22b1d" d="M1236.0 358.2l2.0-5.1-4.2-2.5-2.0 5.2z"/>
<path fill="#c8291b" stroke="#c8291b" d="M1266.9 392.6l2.0-4.0-4.1-6.2-2.0 4.1z"/>
<path fill="#cc2a1c" stroke="#cc2a1c" d="M1271.1 398.1l1.9-4.0-4.1-5.5-2.0 4.0z"/>
<path fill="#cf2b1d" stroke="#cf2b1d" d="M1275.2 402.7l2.0-4.1-4.2-4.5-1.9 4.0z"/>
<path fill="#d92d1e" stroke="#d92d1e" d="M1240.2 361.9l2.0-5.2-4.2-3.6-2.0 5.1z"/>
<path fill="#981e14" stroke="#981e14" d="M1289.9 404.9l1.9-2.7-4.3-.8-1.9 2.8z"/>
<path fill="#c8291b" stroke="#c8291b" d="M1229.8 361.9l2.0-6.1-4.3-1.0-2.0 6.0z"/>
<path fill="#5c100a" stroke="#5c100a" d="M1300.4 399.6l1.9-1.4-4.3 1.9-1.9 1.4z"/>
<path fill="#cc2a1c" stroke="#cc2a1c" d="M1279.4 406.1l2.0-4.1-4.2-3.4-2.0 4.1z"/>
<path fill="#d92d1e" stroke="#d92d1e" d="M1244.3 366.7l2.0-5.2-4.1-4.8-2.0 5.2z"/>
<path fill="#b62518" stroke="#b62518" d="M1223.5 367.5l2.0-6.7-4.3 .4-2.0 6.7z"/>
<path fill="#a02015" stroke="#a02015" d="M1217.1 374.9l2.1-7.0-4.3 1.6-2.1 7.1z"/>
<path fill="#d92d1e" stroke="#d92d1e" d="M1248.5 372.3l2.0-5.1-4.2-5.7-2.0 5.2z"/>
<path fill="#861a10" stroke="#861a10" d="M1355.2 369.7l1.8 4.7-4.4 1.5-1.7-4.7z"/>
<path fill="#d52c1e" stroke="#d52c1e" d="M1252.6 378.6l2.0-5.2-4.1-6.2-2.0 5.1z"/>
<path fill="#8e1c12" stroke="#8e1c12" d="M1344.8 369.6l1.7 4.2-4.3 3.8-1.8-4.3z"/>
<path fill="#d92d1e" stroke="#d92d1e" d="M1234.0 364.3l2.0-6.1-4.2-2.4-2.0 6.1z"/>
<path fill="#d52c1e" stroke="#d52c1e" d="M1256.7 385.1l2.0-5.1-4.1-6.6-2.0 5.2zM1260.8 391.6l2.0-5.1-4.1-6.5-2.0 5.1z"/>
<path fill="#c5281b" stroke="#c5281b" d="M1283.6 408.2l2.0-4.0-4.2-2.2-2.0 4.1z"/>
<path fill="#7f180f" stroke="#7f180f" d="M1294.1 404.3l2.0-2.8-4.3 .7-1.9 2.7z"/>
<path fill="#d52c1e" stroke="#d52c1e" d="M1264.9 397.8l2.0-5.2-4.1-6.1-2.0 5.1z"/>
<path fill="#d92d1e" stroke="#d92d1e" d="M1269.0 403.3l2.1-5.2-4.2-5.5-2.0 5.2z"/>
<path fill="#e02f1f" stroke="#e02f1f" d="M1238.1 368.0l2.1-6.1-4.2-3.7-2.0 6.1z"/>
<path fill="#cc2a1c" stroke="#cc2a1c" d="M1227.7 368.6l2.1-6.7-4.3-1.1-2.0 6.7z"/>
<path fill="#dc2e1f" stroke="#dc2e1f" d="M1273.2 407.8l2.0-5.1-4.1-4.6-2.1 5.2z"/>
<path fill="#580f09" stroke="#580f09" d="M1304.8 396.5l1.9-1.4-4.4 3.1-1.9 1.4z"/>
<path fill="#b62518" stroke="#b62518" d="M1221.4 374.5l2.1-7.0-4.3 .4-2.1 7.0z"/>
<path fill="#b02418" stroke="#b02418" d="M1287.9 409.0l2.0-4.1-4.3-.7-2.0 4.0z"/>
<path fill="#7b170f" stroke="#7b170f" d="M1359.5 369.6l1.7 4.7-4.2 .1-1.8-4.7z"/>
<path fill="#e02f1f" stroke="#e02f1f" d="M1242.3 372.8l2.0-6.1-4.1-4.8-2.1 6.1z"/>
<path fill="#d92d1e" stroke="#d92d1e" d="M1277.4 411.3l2.0-5.2-4.2-3.4-2.0 5.1z"/>
<path fill="#e02f1f" stroke="#e02f1f" d="M1246.4 378.4l2.1-6.1-4.2-5.6-2.0 6.1z"/>
<path fill="#dc2e1f" stroke="#dc2e1f" d="M1231.9 371.0l2.1-6.7-4.2-2.4-2.1 6.7z"/>
<path fill="#6c140c" stroke="#6c140c" d="M1298.5 402.3l1.9-2.7-4.3 1.9-2.0 2.8z"/>
<path fill="#dc2e1f" stroke="#dc2e1f" d="M1250.5 384.7l2.1-6.1-4.1-6.3-2.1 6.1z"/>
<path fill="#8a1b11" stroke="#8a1b11" d="M1349.1 366.9l1.8 4.3-4.4 2.6-1.7-4.2z"/>
<path fill="#dc2e1f" stroke="#dc2e1f" d="M1254.6 391.2l2.1-6.1-4.1-6.5-2.1 6.1zM1258.8 397.7l2.0-6.1-4.1-6.5-2.1 6.1z"/>
<path fill="#e02f1f" stroke="#e02f1f" d="M1262.9 403.8l2.0-6.0-4.1-6.2-2.0 6.1z"/>
<path fill="#d22b1d" stroke="#d22b1d" d="M1281.6 413.4l2.0-5.2-4.2-2.1-2.0 5.2z"/>
<path fill="#e02f1f" stroke="#e02f1f" d="M1267.0 409.3l2.0-6.0-4.1-5.5-2.0 6.0z"/>
<path fill="#cc2a1c" stroke="#cc2a1c" d="M1225.6 375.6l2.1-7.0-4.2-1.1-2.1 7.0z"/>
<path fill="#e32f20" stroke="#e32f20" d="M1236.1 374.7l2.0-6.7-4.1-3.7-2.1 6.7z"/>
<path fill="#961d13" stroke="#961d13" d="M1292.2 408.3l1.9-4.0-4.2 .6-2.0 4.1z"/>
<path fill="#e02f1f" stroke="#e02f1f" d="M1271.2 413.9l2.0-6.1-4.2-4.5-2.0 6.0z"/>
<path fill="#e32f20" stroke="#e32f20" d="M1240.2 379.4l2.1-6.6-4.2-4.8-2.0 6.7z"/>
<path fill="#bf271a" stroke="#bf271a" d="M1285.9 414.1l2.0-5.1-4.3-.8-2.0 5.2z"/>
<path fill="#e02f1f" stroke="#e02f1f" d="M1275.3 417.3l2.1-6.0-4.2-3.5-2.0 6.1z"/>
<path fill="#e32f20" stroke="#e32f20" d="M1244.4 385.1l2.0-6.7-4.1-5.6-2.1 6.6z"/>
<path fill="#dc2e1f" stroke="#dc2e1f" d="M1229.9 378.0l2.0-7.0-4.2-2.4-2.1 7.0z"/>
<path fill="#5f110a" stroke="#5f110a" d="M1302.8 399.2l2.0-2.7-4.4 3.1-1.9 2.7z"/>
<path fill="#831910" stroke="#831910" d="M1353.4 365.5l1.8 4.2-4.3 1.5-1.8-4.3z"/>
<path fill="#e32f20" stroke="#e32f20" d="M1248.5 391.3l2.0-6.6-4.1-6.3-2.0 6.7z"/>
<path fill="#881a11" stroke="#881a11" d="M1343.0 366.1l1.8 3.5-4.4 3.7-1.8-3.5z"/>
<path fill="#e02f1f" stroke="#e02f1f" d="M1252.6 397.9l2.0-6.7-4.1-6.5-2.0 6.6zM1256.7 404.4l2.1-6.7-4.2-6.5-2.0 6.7z"/>
<path fill="#e32f20" stroke="#e32f20" d="M1260.8 410.5l2.1-6.7-4.1-6.1-2.1 6.7z"/>
<path fill="#7d180f" stroke="#7d180f" d="M1296.5 406.4l2.0-4.1-4.4 2.0-1.9 4.0z"/>
<path fill="#d52c1e" stroke="#d52c1e" d="M1279.6 419.5l2.0-6.1-4.2-2.1-2.1 6.0z"/>
<path fill="#e32f20" stroke="#e32f20" d="M1264.9 416.0l2.1-6.7-4.1-5.5-2.1 6.7zM1234.0 381.7l2.1-7.0-4.2-3.7-2.0 7.0zM1269.1 420.6l2.1-6.7-4.2-4.6-2.1 6.7z"/>
<path fill="#a52116" stroke="#a52116" d="M1290.1 413.5l2.1-5.2-4.3 .7-2.0 5.1z"/>
<path fill="#e63020" stroke="#e63020" d="M1238.2 386.5l2.0-7.1-4.1-4.7-2.1 7.0z"/>
<path fill="#78160e" stroke="#78160e" d="M1357.7 365.4l1.8 4.2-4.3 .1-1.8-4.2z"/>
<path fill="#e32f20" stroke="#e32f20" d="M1242.3 392.1l2.1-7.0-4.2-5.7-2.0 7.1zM1273.3 424.0l2.0-6.7-4.1-3.4-2.1 6.7z"/>
<path fill="#c5281b" stroke="#c5281b" d="M1283.8 420.2l2.1-6.1-4.3-.7-2.0 6.1z"/>
<path fill="#e32f20" stroke="#e32f20" d="M1246.4 398.4l2.1-7.1-4.1-6.2-2.1 7.0zM1250.5 404.9l2.1-7.0-4.1-6.6-2.1 7.1zM1254.6 411.4l2.1-7.0-4.1-6.5-2.1 7.0z"/>
<path fill="#831910" stroke="#831910" d="M1347.3 363.4l1.8 3.5-4.3 2.7-1.8-3.5z"/>
<path fill="#5a1009" stroke="#5a1009" d="M1307.2 395.1l1.9-2.7-4.3 4.1-2.0 2.7z"/>
<path fill="#e32f20" stroke="#e32f20" d="M1258.8 417.6l2.0-7.1-4.1-6.1-2.1 7.0z"/>
<path fill="#e63020" stroke="#e63020" d="M1262.9 423.0l2.0-7.0-4.1-5.5-2.0 7.1z"/>
<path fill="#6d140d" stroke="#6d140d" d="M1300.8 403.3l2.0-4.1-4.3 3.1-2.0 4.1z"/>
<path fill="#d92d1e" stroke="#d92d1e" d="M1277.5 426.1l2.1-6.6-4.3-2.2-2.0 6.7z"/>
<path fill="#8c1b12" stroke="#8c1b12" d="M1294.5 411.6l2.0-5.2-4.3 1.9-2.1 5.2z"/>
<path fill="#e63020" stroke="#e63020" d="M1267.0 427.6l2.1-7.0-4.2-4.6-2.0 7.0z"/>
<path fill="#ad2317" stroke="#ad2317" d="M1288.1 419.6l2.0-6.1-4.2 .6-2.1 6.1z"/>
<path fill="#e32f20" stroke="#e32f20" d="M1271.2 431.0l2.1-7.0-4.2-3.4-2.1 7.0z"/>
<path fill="#c8291b" stroke="#c8291b" d="M1281.8 426.9l2.0-6.7-4.2-.7-2.1 6.6z"/>
<path fill="#7b170f" stroke="#7b170f" d="M1351.6 362.0l1.8 3.5-4.3 1.4-1.8-3.5z"/>
<path fill="#d92d1e" stroke="#d92d1e" d="M1275.5 433.2l2.0-7.1-4.2-2.1-2.1 7.0z"/>
<path fill="#590f09" stroke="#590f09" d="M1311.6 390.3l1.9-2.7-4.4 4.8-1.9 2.7z"/>
<path fill="#64120b" stroke="#64120b" d="M1305.2 399.2l2.0-4.1-4.4 4.1-2.0 4.1z"/>
<path fill="#79170e" stroke="#79170e" d="M1298.8 408.4l2.0-5.1-4.3 3.1-2.0 5.2z"/>
<path fill="#961d13" stroke="#961d13" d="M1292.4 417.6l2.1-6.0-4.4 1.9-2.0 6.1z"/>
<path fill="#b02418" stroke="#b02418" d="M1286.1 426.3l2.0-6.7-4.3 .6-2.0 6.7z"/>
<path fill="#c8291b" stroke="#c8291b" d="M1279.7 433.9l2.1-7.0-4.3-.8-2.0 7.1z"/>
<path fill="#71150d" stroke="#71150d" d="M1355.9 361.9l1.8 3.5-4.3 .1-1.8-3.5z"/>
<path fill="#79170e" stroke="#79170e" d="M1345.5 360.9l1.8 2.5-4.3 2.7-1.8-2.5z"/>
<path fill="#9b1f14" stroke="#9b1f14" d="M1290.4 424.3l2.0-6.7-4.3 2.0-2.0 6.7z"/>
<path fill="#811910" stroke="#811910" d="M1296.8 414.5l2.0-6.1-4.3 3.2-2.1 6.0z"/>
<path fill="#b32418" stroke="#b32418" d="M1284.0 433.3l2.1-7.0-4.3 .6-2.1 7.0z"/>
<path fill="#6d140d" stroke="#6d140d" d="M1303.2 404.3l2.0-5.1-4.4 4.1-2.0 5.1z"/>
<path fill="#580f09" stroke="#580f09" d="M1316.0 385.1l1.9-2.8-4.4 5.3-1.9 2.7z"/>
<path fill="#5f110a" stroke="#5f110a" d="M1309.6 394.4l2.0-4.1-4.4 4.8-2.0 4.1z"/>
<path fill="#71150d" stroke="#71150d" d="M1349.8 359.5l1.8 2.5-4.3 1.4-1.8-2.5z"/>
<path fill="#9d1f14" stroke="#9d1f14" d="M1288.3 431.3l2.1-7.0-4.3 2.0-2.1 7.0z"/>
<path fill="#881a11" stroke="#881a11" d="M1294.7 421.2l2.1-6.7-4.4 3.1-2.0 6.7z"/>
<path fill="#76160e" stroke="#76160e" d="M1301.2 410.4l2.0-6.1-4.4 4.1-2.0 6.1z"/>
<path fill="#68130c" stroke="#68130c" d="M1307.6 399.5l2.0-5.1-4.4 4.8-2.0 5.1z"/>
<path fill="#66120b" stroke="#66120b" d="M1354.1 359.4l1.8 2.5-4.3 .1-1.8-2.5z"/>
<path fill="#580f09" stroke="#580f09" d="M1320.4 379.8l2.0-2.8-4.5 5.3-1.9 2.8z"/>
<path fill="#5d100a" stroke="#5d100a" d="M1314.0 389.1l2.0-4.0-4.4 5.2-2.0 4.1z"/>
<path fill="#8a1b11" stroke="#8a1b11" d="M1292.7 428.2l2.0-7.0-4.3 3.1-2.1 7.0z"/>
<path fill="#7b170f" stroke="#7b170f" d="M1299.1 417.1l2.1-6.7-4.4 4.1-2.1 6.7z"/>
<path fill="#6f140d" stroke="#6f140d" d="M1305.6 405.6l2.0-6.1-4.4 4.8-2.0 6.1z"/>
<path fill="#64120b" stroke="#64120b" d="M1348.0 358.1l1.8 1.4-4.3 1.4-1.8-1.3zM1312.0 394.3l2.0-5.2-4.4 5.3-2.0 5.1z"/>
<path fill="#580f09" stroke="#580f09" d="M1324.8 374.7l2.0-2.8-4.4 5.1-2.0 2.8z"/>
<path fill="#5d100a" stroke="#5d100a" d="M1318.4 383.8l2.0-4.0-4.4 5.3-2.0 4.0z"/>
<path fill="#7d180f" stroke="#7d180f" d="M1297.0 424.1l2.1-7.0-4.4 4.1-2.0 7.0z"/>
<path fill="#5c100a" stroke="#5c100a" d="M1352.2 358.1l1.9 1.3-4.3 .1-1.8-1.4z"/>
<path fill="#74160e" stroke="#74160e" d="M1303.5 412.3l2.1-6.7-4.4 4.8-2.1 6.7z"/>
<path fill="#6a130c" stroke="#6a130c" d="M1310.0 400.4l2.0-6.1-4.4 5.2-2.0 6.1z"/>
<path fill="#64120b" stroke="#64120b" d="M1316.4 389.0l2.0-5.2-4.4 5.3-2.0 5.2z"/>
<path fill="#590f09" stroke="#590f09" d="M1329.2 370.1l2.0-2.7-4.4 4.5-2.0 2.8z"/>
<path fill="#5d100a" stroke="#5d100a" d="M1322.8 378.7l2.0-4.0-4.4 5.1-2.0 4.0z"/>
<path fill="#76160e" stroke="#76160e" d="M1301.4 419.3l2.1-7.0-4.4 4.8-2.1 7.0z"/>
<path fill="#6f140d" stroke="#6f140d" d="M1307.9 407.1l2.1-6.7-4.4 5.2-2.1 6.7z"/>
<path fill="#590f09" stroke="#590f09" d="M1339.9 361.0l1.9-1.4-4.4 2.6-1.9 1.4z"/>
<path fill="#6a130c" stroke="#6a130c" d="M1314.4 395.1l2.0-6.1-4.4 5.3-2.0 6.1z"/>
<path fill="#5a1009" stroke="#5a1009" d="M1350.4 358.1l1.8 0-4.2 0-1.9 0z"/>
<path fill="#5c100a" stroke="#5c100a" d="M1333.6 366.4l1.9-2.8-4.3 3.8-2.0 2.7z"/>
<path fill="#65120b" stroke="#65120b" d="M1320.8 383.9l2.0-5.2-4.4 5.1-2.0 5.2z"/>
<path fill="#60110a" stroke="#60110a" d="M1327.2 374.2l2.0-4.1-4.4 4.6-2.0 4.0z"/>
<path fill="#72150d" stroke="#72150d" d="M1305.9 414.1l2.0-7.0-4.4 5.2-2.1 7.0z"/>
<path fill="#5f110a" stroke="#5f110a" d="M1344.2 359.5l1.9-1.4-4.3 1.5-1.9 1.4z"/>
<path fill="#6f140d" stroke="#6f140d" d="M1312.3 401.8l2.1-6.7-4.4 5.3-2.1 6.7z"/>
<path fill="#64120b" stroke="#64120b" d="M1337.9 363.7l2.0-2.7-4.4 2.6-1.9 2.8z"/>
<path fill="#6c140c" stroke="#6c140c" d="M1318.8 390.0l2.0-6.1-4.4 5.1-2.0 6.1z"/>
<path fill="#69130c" stroke="#69130c" d="M1325.2 379.3l2.0-5.1-4.4 4.5-2.0 5.2z"/>
<path fill="#66120b" stroke="#66120b" d="M1331.6 370.5l2.0-4.1-4.4 3.7-2.0 4.1z"/>
<path fill="#6d140d" stroke="#6d140d" d="M1348.4 359.5l2.0-1.4-4.3 0-1.9 1.4z"/>
<path fill="#71150d" stroke="#71150d" d="M1310.3 408.8l2.0-7.0-4.4 5.3-2.0 7.0z"/>
<path fill="#72150d" stroke="#72150d" d="M1342.2 362.3l2.0-2.8-4.3 1.5-2.0 2.7z"/>
<path fill="#71150d" stroke="#71150d" d="M1316.7 396.7l2.1-6.7-4.4 5.1-2.1 6.7zM1323.2 385.4l2.0-6.1-4.4 4.6-2.0 6.1z"/>
<path fill="#72150d" stroke="#72150d" d="M1335.9 367.8l2.0-4.1-4.3 2.7-2.0 4.1zM1329.6 375.6l2.0-5.1-4.4 3.7-2.0 5.1z"/>
<path fill="#8a1b11" stroke="#8a1b11" d="M1346.5 362.2l1.9-2.7-4.2 0-2.0 2.8z"/>
<path fill="#72150d" stroke="#72150d" d="M1314.7 403.7l2.0-7.0-4.4 5.1-2.0 7.0z"/>
<path fill="#861a10" stroke="#861a10" d="M1340.2 366.4l2.0-4.1-4.3 1.4-2.0 4.1z"/>
<path fill="#76160e" stroke="#76160e" d="M1321.1 392.1l2.1-6.7-4.4 4.6-2.1 6.7z"/>
<path fill="#79170e" stroke="#79170e" d="M1327.5 381.7l2.1-6.1-4.4 3.7-2.0 6.1z"/>
<path fill="#7f180f" stroke="#7f180f" d="M1333.9 372.9l2.0-5.1-4.3 2.7-2.0 5.1z"/>
<path fill="#a02015" stroke="#a02015" d="M1344.5 366.3l2.0-4.1-4.3 .1-2.0 4.1z"/>
<path fill="#78160e" stroke="#78160e" d="M1319.1 399.1l2.0-7.0-4.4 4.6-2.0 7.0z"/>
<path fill="#961d13" stroke="#961d13" d="M1338.2 371.5l2.0-5.1-4.3 1.4-2.0 5.1z"/>
<path fill="#7f180f" stroke="#7f180f" d="M1325.5 388.4l2.0-6.7-4.3 3.7-2.1 6.7z"/>
<path fill="#881a11" stroke="#881a11" d="M1331.9 379.0l2.0-6.1-4.3 2.7-2.1 6.1z"/>
<path fill="#ad2317" stroke="#ad2317" d="M1342.5 371.4l2.0-5.1-4.3 .1-2.0 5.1z"/>
<path fill="#811910" stroke="#811910" d="M1323.4 395.4l2.1-7.0-4.4 3.7-2.0 7.0z"/>
<path fill="#9d1f14" stroke="#9d1f14" d="M1336.2 377.6l2.0-6.1-4.3 1.4-2.0 6.1z"/>
<path fill="#8e1c12" stroke="#8e1c12" d="M1329.8 385.7l2.1-6.7-4.4 2.7-2.0 6.7z"/>
<path fill="#b62518" stroke="#b62518" d="M1340.5 377.5l2.0-6.1-4.3 .1-2.0 6.1z"/>
<path fill="#911c12" stroke="#911c12" d="M1327.8 392.7l2.0-7.0-4.3 2.7-2.1 7.0z"/>
<path fill="#a22015" stroke="#a22015" d="M1334.1 384.3l2.1-6.7-4.3 1.4-2.1 6.7z"/>
<path fill="#b92619" stroke="#b92619" d="M1338.4 384.2l2.1-6.7-4.3 .1-2.1 6.7z"/>
<path fill="#a52116" stroke="#a52116" d="M1332.1 391.3l2.0-7.0-4.3 1.4-2.0 7.0z"/>
<path fill="#bc2619" stroke="#bc2619" d="M1336.4 391.2l2.0-7.0-4.3 .1-2.0 7.0z"/>
</g>
<path d="M1043.8 425.2L1334.4 467.5L1464.8 391.5" fill="none" stroke="#111" stroke-width="1.05"/>
<text x="1295.1" y="487.0" font-family="Liberation Sans,sans-serif" font-size="14.8" font-style="italic" fill="#2c8a2c" text-anchor="middle">2</text>
<text x="1258.8" y="481.9" font-family="Liberation Sans,sans-serif" font-size="14.8" font-style="italic" fill="#2c8a2c" text-anchor="middle">4</text>
<text x="1222.5" y="476.8" font-family="Liberation Sans,sans-serif" font-size="14.8" font-style="italic" fill="#2c8a2c" text-anchor="middle">6</text>
<text x="1186.2" y="471.7" font-family="Liberation Sans,sans-serif" font-size="14.8" font-style="italic" fill="#2c8a2c" text-anchor="middle">8</text>
<text x="1149.9" y="466.6" font-family="Liberation Sans,sans-serif" font-size="14.8" font-style="italic" fill="#2c8a2c" text-anchor="middle">10</text>
<text x="1113.6" y="461.5" font-family="Liberation Sans,sans-serif" font-size="14.8" font-style="italic" fill="#2c8a2c" text-anchor="middle">12</text>
<text x="1077.3" y="456.4" font-family="Liberation Sans,sans-serif" font-size="14.8" font-style="italic" fill="#2c8a2c" text-anchor="middle">14</text>
<text x="1041.0" y="451.3" font-family="Liberation Sans,sans-serif" font-size="14.8" font-style="italic" fill="#2c8a2c" text-anchor="middle">16</text>
<text transform="translate(1339.4 486.2) rotate(-30)" x="0" y="5.3" font-family="Liberation Sans,sans-serif" font-size="14.8" fill="#c8281a" text-anchor="middle">0</text>
<text transform="translate(1372.4 466.9) rotate(-30)" x="0" y="5.3" font-family="Liberation Sans,sans-serif" font-size="14.8" fill="#c8281a" text-anchor="middle">4</text>
<text transform="translate(1405.3 447.4) rotate(-30)" x="0" y="5.3" font-family="Liberation Sans,sans-serif" font-size="14.8" fill="#c8281a" text-anchor="middle">8</text>
<text transform="translate(1438.3 428.1) rotate(-30)" x="0" y="5.3" font-family="Liberation Sans,sans-serif" font-size="14.8" fill="#c8281a" text-anchor="middle">12</text>
<text transform="translate(1471.2 408.6) rotate(-30)" x="0" y="5.3" font-family="Liberation Sans,sans-serif" font-size="14.8" fill="#c8281a" text-anchor="middle">16</text>
<text transform="translate(1028 321.6) rotate(-90)" x="0" y="5.3" font-family="Liberation Sans,sans-serif" font-size="14.8" fill="#2f62d4" text-anchor="middle">2.0</text>
<text transform="translate(1028 385.1) rotate(-90)" x="0" y="5.3" font-family="Liberation Sans,sans-serif" font-size="14.8" fill="#2f62d4" text-anchor="middle">-0.5</text>
<path d="M1298.1 462.2l-1.9 14.5M1261.7 456.9l-1.9 14.5M1225.4 451.7l-1.9 14.5M1189.1 446.4l-1.9 14.5M1152.7 441.1l-1.9 14.5M1116.4 435.8l-1.9 14.5M1080.1 430.5l-1.9 14.5M1043.8 425.2l-1.9 14.5M1334.4 467.5l3.5 12M1367.0 448.5l3.5 12M1399.6 429.5l3.5 12M1432.2 410.5l3.5 12M1464.8 391.5l3.5 12M1046.3 323.6h-15.5M1044.7 387.1h-15.5" fill="none" stroke="#b0b0b0" stroke-width="0.9"/>
<text transform="translate(1183 491) rotate(8.3)" x="0" y="6.5" font-family="Liberation Sans,sans-serif" font-size="20" font-style="italic" fill="#2c8a2c" text-anchor="middle">Y Axis</text>
<text transform="translate(1412.5 473.7) rotate(-30.2)" x="0" y="6.5" font-family="Liberation Sans,sans-serif" font-size="20.5" fill="#c8281a" text-anchor="middle">X Axis</text>
<text transform="translate(999 370) rotate(-90)" x="0" y="6.5" font-family="Liberation Sans,sans-serif" font-size="20" fill="#2f62d4" text-anchor="middle">Z Axis</text>
<g fill="none" stroke-width="1"><path d="M651.5 592V541" stroke="#1c3fd0"/><path d="M651.5 539l-3 19q3 3 6 0z" stroke="#1c3fd0"/><path d="M651.5 592L601 585" stroke="#2c8a2c"/><path d="M600 585l19 5.5q2-3.5 .5-7z" stroke="#2c8a2c"/><path d="M651.5 592L674 580" stroke="#c8281a"/><path d="M675 579.5l-10.5 2.2q.8 3.5 3.2 5z" stroke="#c8281a"/></g>
<text x="658.5" y="527.5" font-family="Liberation Sans,sans-serif" font-size="18" fill="#000" text-anchor="middle">Z</text>
<text x="602.5" y="576.5" font-family="Liberation Sans,sans-serif" font-size="18" fill="#000" text-anchor="middle">Y</text>
<text x="681.7" y="570" font-family="Liberation Sans,sans-serif" font-size="18" fill="#000" text-anchor="middle">X</text>
</svg>
<svg style="left:543px;top:145px" width="24" height="4"><g fill="#222"><rect x="1" y="1" width="2" height="2"/><rect x="7.3" y="1" width="2" height="2"/><rect x="13.6" y="1" width="2" height="2"/><rect x="19.9" y="1" width="2" height="2"/></g></svg>
<div class="r" style="left:534px;top:664px;width:1370px;height:1px;background:#a0a0a0"></div>
<div class="r" style="left:718px;top:619px;width:1px;height:34px;background:#a0a0a0"></div>
<div class="r" style="left:784px;top:675px;width:1px;height:239px;background:#a0a0a0"></div>
<div class="r" style="left:940px;top:675px;width:1px;height:239px;background:#a0a0a0"></div>
<div class="r" style="left:1237px;top:675px;width:1px;height:239px;background:#a0a0a0"></div>
<span class="t" style="left:537.50px;top:679.06px;font-size:16px;line-height:16px;color:#454545;transform:scaleX(0.9520)">Plot type:</span>
<div class="sunk" style="left:552px;top:700px;width:226px;height:29px"></div>
<div class="rais" style="left:758px;top:704px;width:19px;height:22px;border-width:1px 2px 2px 1px;border-color:#f0f0f0 #000 #000 #f0f0f0"></div>
<svg style="left:763px;top:717px" width="8" height="4"><path d="M0 0H8L4 4Z" fill="#000"/></svg>
<span class="t" style="left:556.50px;top:708.16px;font-size:16px;line-height:16px;color:#111">Frequency</span>
<div class="sunk" style="left:552px;top:743px;width:226px;height:29px"></div>
<div class="rais" style="left:758px;top:747px;width:19px;height:22px;border-width:1px 2px 2px 1px;border-color:#f0f0f0 #000 #000 #f0f0f0"></div>
<svg style="left:763px;top:760px" width="8" height="4"><path d="M0 0H8L4 4Z" fill="#000"/></svg>
<span class="t" style="left:556.50px;top:751.16px;font-size:16px;line-height:16px;color:#111">Time</span>
<span class="t" style="left:537.50px;top:787.06px;font-size:16px;line-height:16px;color:#454545;transform:scaleX(0.9687)">Data curves:</span>
<span class="t" style="left:553.50px;top:817.06px;font-size:16px;line-height:16px;color:#454545">Response</span>
<span class="t" style="left:634.00px;top:817.06px;font-size:16px;line-height:16px;color:#454545">=</span>
<span class="t" style="left:553.50px;top:853.06px;font-size:16px;line-height:16px;color:#454545;transform:scaleX(1.0116)">Input</span>
<span class="t" style="left:634.00px;top:853.06px;font-size:16px;line-height:16px;color:#454545">=</span>
<div class="sunk" style="left:650px;top:809px;width:128px;height:28px;background:#fff;border-color:#000 #fff #fff #000"></div>
<div class="rais" style="left:747px;top:812px;width:30px;height:21px;border-width:1px 2px 2px 1px;border-color:#f0f0f0 #000 #000 #f0f0f0"></div>
<div class="sunk" style="left:650px;top:845px;width:128px;height:28px;background:#f0f0f0;border-color:#000 #fff #fff #000"></div>
<div class="rais" style="left:747px;top:848px;width:30px;height:21px;border-width:1px 2px 2px 1px;border-color:#f0f0f0 #000 #000 #f0f0f0"></div>
<svg style="left:755px;top:820px" width="16" height="12"><path d="M1.5 0V11" stroke="#000" stroke-width="1"/><path d="M2 11C3 1.500 6.500 1.500 8.500 6.500S12.500 12.500 15.500 9.500" fill="none" stroke="#e00000" stroke-width="1.900"/></svg>
<svg style="left:755px;top:856px" width="16" height="12"><path d="M1.5 0V11" stroke="#555" stroke-width="1" stroke-dasharray="1 1"/><path d="M2 11C3 1.500 6.500 1.500 8.500 6.500S12.500 12.500 15.500 9.500" fill="none" stroke="#e03030" stroke-width="1.500" stroke-dasharray="2 1"/></svg>
<div class="sunk" style="left:537px;top:894px;width:13px;height:13px;background:#f0f0f0;border-width:2px 1px 1px 2px;border-color:#000 #fff #fff #000"></div><svg style="left:539px;top:896px" width="10" height="10"><path d="M1.5 4.5l2.5 3 4.5-6" fill="none" stroke="#777" stroke-width="2"/></svg>
<span class="t" style="left:558.00px;top:893.16px;font-size:16px;line-height:16px;color:#8a8a8a;transform:scaleX(0.9680)">Input vector is in RPM</span>
<span class="t" style="left:792.00px;top:682.06px;font-size:16px;line-height:16px;color:#454545;transform:scaleX(0.9782)">Waterfall slices:</span>
<svg style="left:809px;top:711px" width="13" height="13"><circle cx="6.5" cy="6.5" r="5.2" fill="#fff"/><path d="M10.6 2.4A5.8 5.8 0 1 0 2.4 10.6" fill="none" stroke="#000" stroke-width="1.6"/><path d="M2.4 10.6A5.8 5.8 0 0 0 10.6 2.4" fill="none" stroke="#fff" stroke-width="1.6"/><circle cx="6.5" cy="6.5" r="2.2" fill="#000"/></svg>
<span class="t" style="left:831.00px;top:711.06px;font-size:16px;line-height:16px;color:#454545;transform:scaleX(0.9453)">Number:</span>
<div class="sunk" style="left:835px;top:737px;width:97px;height:29px"></div>
<span class="t" style="left:901.80px;top:744.36px;font-size:16px;line-height:16px;color:#111">100</span>
<svg style="left:809px;top:778.5px" width="13" height="13"><circle cx="6.5" cy="6.5" r="5.2" fill="#fff"/><path d="M10.6 2.4A5.8 5.8 0 1 0 2.4 10.6" fill="none" stroke="#000" stroke-width="1.6"/><path d="M2.4 10.6A5.8 5.8 0 0 0 10.6 2.4" fill="none" stroke="#fff" stroke-width="1.6"/></svg>
<span class="t" style="left:830.50px;top:777.66px;font-size:16px;line-height:16px;color:#454545;transform:scaleX(0.9821)">Step size:</span>
<div class="sunk" style="left:835px;top:804px;width:97px;height:29px;background:#f0f0f0"></div>
<span class="t" style="left:895.36px;top:811.86px;font-size:16px;line-height:16px;color:#6a6a6a">0.01</span>
<div class="sunk" style="left:792px;top:894px;width:13px;height:13px;background:#fff;border-width:2px 1px 1px 2px;border-color:#000 #fff #fff #000"></div><svg style="left:794px;top:896px" width="10" height="10"><path d="M1.5 4.5l2.5 3 4.5-6" fill="none" stroke="#000" stroke-width="2"/></svg>
<span class="t" style="left:813.00px;top:893.16px;font-size:16px;line-height:16px;color:#454545;transform:scaleX(0.9922)">Contour waterfall</span>
<span class="t" style="left:949.50px;top:679.06px;font-size:16px;line-height:16px;color:#454545;transform:scaleX(0.9582)">Parameters:</span>
<span class="t" style="left:965.50px;top:709.06px;font-size:16px;line-height:16px;color:#454545;transform:scaleX(0.9662)">Sample size:</span>
<div class="sunk" style="left:1094px;top:700px;width:134px;height:34px"></div>
<div class="r" style="left:1208px;top:703px;width:19px;height:29px;background:#f0f0f0;border-right:2px solid #000;border-bottom:2px solid #000"></div>
<svg style="left:1213px;top:715px" width="8" height="4"><path d="M0 0H8L4 4Z" fill="#000"/></svg>
<span class="t" style="left:1098.50px;top:709.86px;font-size:16px;line-height:16px;color:#111">1024</span>
<span class="t" style="left:965.50px;top:747.06px;font-size:16px;line-height:16px;color:#454545;transform:scaleX(0.9931)">Window function:</span>
<div class="sunk" style="left:1094px;top:741px;width:134px;height:34px"></div>
<div class="r" style="left:1208px;top:744px;width:19px;height:29px;background:#f0f0f0;border-right:2px solid #000;border-bottom:2px solid #000"></div>
<svg style="left:1213px;top:756px" width="8" height="4"><path d="M0 0H8L4 4Z" fill="#000"/></svg>
<span class="t" style="left:1098.50px;top:750.86px;font-size:16px;line-height:16px;color:#111">Hanning</span>
<span class="t" style="left:965.50px;top:784.86px;font-size:16px;line-height:16px;color:#454545;transform:scaleX(0.9793)">Amplitude type:</span>
<div class="sunk" style="left:1094px;top:782px;width:134px;height:34px"></div>
<div class="r" style="left:1208px;top:785px;width:19px;height:29px;background:#f0f0f0;border-right:2px solid #000;border-bottom:2px solid #000"></div>
<svg style="left:1213px;top:797px" width="8" height="4"><path d="M0 0H8L4 4Z" fill="#000"/></svg>
<span class="t" style="left:1098.50px;top:791.86px;font-size:16px;line-height:16px;color:#111">FFT</span>
<span class="t" style="left:965.50px;top:822.66px;font-size:16px;line-height:16px;color:#454545;transform:scaleX(0.9760)">Weighting:</span>
<div class="sunk" style="left:1094px;top:823px;width:134px;height:34px"></div>
<div class="r" style="left:1208px;top:826px;width:19px;height:29px;background:#f0f0f0;border-right:2px solid #000;border-bottom:2px solid #000"></div>
<svg style="left:1213px;top:838px" width="8" height="4"><path d="M0 0H8L4 4Z" fill="#000"/></svg>
<span class="t" style="left:1098.50px;top:832.86px;font-size:16px;line-height:16px;color:#111">None</span>
<div class="sunk" style="left:949px;top:896px;width:13px;height:13px;background:#fff;border-width:2px 1px 1px 2px;border-color:#000 #fff #fff #000"></div>
<span class="t" style="left:969.50px;top:896.06px;font-size:16px;line-height:16px;color:#454545;transform:scaleX(0.9784)">Show all options</span>
<div class="rais" style="left:1250px;top:678px;width:94.5px;height:35px;border-width:1px 2px 2px 1px"></div>
<span class="t" style="left:1276.99px;top:687.06px;font-size:16px;line-height:16px;color:#111">Apply</span>
<div class="rais" style="left:1250px;top:719px;width:94.5px;height:35px;border-width:1px 2px 2px 1px"></div>
<span class="t" style="left:1277.87px;top:727.66px;font-size:16px;line-height:16px;color:#111">Undo</span>
<div class="r" style="left:534px;top:920px;width:1372px;height:1px;background:#fff"></div>
<div class="r" style="left:534px;top:925px;width:1372px;height:1px;background:#000"></div>
<div class="r" style="left:1905px;top:919px;width:1px;height:7px;background:#000"></div>
<div class="r" style="left:536px;top:930px;width:801px;height:110px;background:#fff;border-top:1px solid #a0a0a0;border-left:1px solid #a0a0a0"></div>
<span class="t" style="left:538.00px;top:934.60px;font-size:14px;line-height:14px;color:#0000ff;font-family:'Liberation Mono',monospace;transform:scaleX(1.1854)">Main console display active (Tcl8.5.9 / Tk8.5.9)</span>
<span class="t" style="left:539.50px;top:952.90px;font-size:14px;line-height:14px;color:#a0522d;font-family:'Liberation Mono',monospace;transform:scaleX(1.1864)">(Documents) 1 %</span>
<div class="r" style="left:1337px;top:930px;width:18px;height:110px;background:#f0f0f0;border:1px solid #dedede"></div>
<div class="r" style="left:1338.5px;top:947px;width:16px;height:75px;background:#f0f0f0;border:1px solid #a3a3a3"></div>
<svg style="left:1341px;top:934px" width="10" height="8"><path d="M2 5.500L4.500 2.500L7 5.500" fill="none" stroke="#333" stroke-width="1.300"/><path d="M3 5.800H6.500" stroke="#333" stroke-width=".8"/></svg>
<svg style="left:1341px;top:1026px" width="10" height="8"><path d="M2 2L4.500 5L7 2" fill="none" stroke="#333" stroke-width="1.300"/></svg>
<svg style="left:1356px;top:933px" width="9" height="8"><path d="M1 1.500l2.500 2.500-2.500 2.500M4.500 1.500l2.500 2.500-2.500 2.500" fill="none" stroke="#222" stroke-width="1.100"/></svg>
<div class="r" style="left:1364px;top:928px;width:542px;height:114px;background:#fff;border:1px solid #a9b7c2"></div>
<div class="r" style="left:1366px;top:930px;width:538px;height:11px;background:#f0f0f0;border:1px solid #aab6c0;border-top:none;border-left:none"></div>
<div class="r" style="left:1366px;top:964px;width:538px;height:1px;background:#cde6f4"></div>
<div class="r" style="left:1366px;top:988px;width:538px;height:1px;background:#cde6f4"></div>
<div class="r" style="left:1366px;top:1012px;width:538px;height:1px;background:#cde6f4"></div>
<div class="r" style="left:1366px;top:1036px;width:538px;height:1px;background:#cde6f4"></div>
<div class="r" style="left:1802px;top:66px;width:53px;height:29px;background:#fff;border:1px solid #6e6e6e"></div>
<span class="t" style="left:1839.82px;top:72.93px;font-size:16.5px;line-height:16.5px">1</span>
<span class="t" style="left:1856.50px;top:72.93px;font-size:16.5px;line-height:16.5px;color:#222;transform:scaleX(0.9447)">of 2</span>
<svg style="left:1748px;top:69px" width="54" height="20" viewBox="1748 69 54 20"><defs><linearGradient id="ab" x1="0" y1="0" x2="0" y2="1"><stop offset="0" stop-color="#1f86c6"/><stop offset=".45" stop-color="#49c0ea"/><stop offset="1" stop-color="#1a78ba"/></linearGradient></defs><path d="M1749.5 79L1759 70.8V75H1771V83H1759V87.3Z" fill="url(#ab)" stroke="#1c6fae" stroke-width=".8"/><path d="M1799 79L1789.5 70.8V75H1777V83H1789.5V87.3Z" fill="url(#ab)" stroke="#1c6fae" stroke-width=".8"/></svg>
<svg style="left:0;top:0" width="1920" height="1081" viewBox="0 0 1920 1081"><defs>
<linearGradient id="gDoc" x1="0" y1="0" x2="1" y2="1"><stop offset="0" stop-color="#fdfdfd"/><stop offset="1" stop-color="#c9c9cf"/></linearGradient>
<linearGradient id="gFold" x1="0" y1="0" x2="0" y2="1"><stop offset="0" stop-color="#f3d9a4"/><stop offset="1" stop-color="#d9a03c"/></linearGradient>
<linearGradient id="gFold2" x1="0" y1="0" x2="1" y2="1"><stop offset="0" stop-color="#fbe08a"/><stop offset="1" stop-color="#e9ae3a"/></linearGradient>
<linearGradient id="gFlop" x1="0" y1="0" x2="1" y2="1"><stop offset="0" stop-color="#8c8cc8"/><stop offset="1" stop-color="#3d3d80"/></linearGradient>
<linearGradient id="gGreen" x1="0" y1="0" x2="0" y2="1"><stop offset="0" stop-color="#a4d820"/><stop offset="1" stop-color="#3f9a08"/></linearGradient>
<linearGradient id="gGreenA" x1="0" y1="0" x2="1" y2="1"><stop offset="0" stop-color="#8fd420"/><stop offset="1" stop-color="#0f9a10"/></linearGradient>
<linearGradient id="gRedA" x1="0" y1="0" x2="1" y2="1"><stop offset="0" stop-color="#c81820"/><stop offset="1" stop-color="#f04040"/></linearGradient>
<linearGradient id="gCam" x1="0" y1="0" x2="0" y2="1"><stop offset="0" stop-color="#c4c4e4"/><stop offset=".5" stop-color="#8484b8"/><stop offset="1" stop-color="#6464a0"/></linearGradient>
<linearGradient id="gBlu" x1="0" y1="0" x2="0" y2="1"><stop offset="0" stop-color="#d0d0f4"/><stop offset="1" stop-color="#4a4a9c"/></linearGradient>
<linearGradient id="gBluH" x1="0" y1="0" x2="1" y2="0"><stop offset="0" stop-color="#c4c4f0"/><stop offset="1" stop-color="#34348a"/></linearGradient>
<linearGradient id="gFrame" x1="0" y1="0" x2="0" y2="1"><stop offset="0" stop-color="#9c9cd0"/><stop offset="1" stop-color="#4c4c84"/></linearGradient>
<linearGradient id="gMon" x1="0" y1="0" x2="1" y2="1"><stop offset="0" stop-color="#3878c8"/><stop offset=".5" stop-color="#7cb8ec"/><stop offset="1" stop-color="#2c68b8"/></linearGradient>
<radialGradient id="gBtn" cx=".5" cy=".15" r=".95"><stop offset="0" stop-color="#b4b4ec"/><stop offset=".45" stop-color="#6a6ab4"/><stop offset="1" stop-color="#36367c"/></radialGradient>
<radialGradient id="gLens" cx=".4" cy=".4" r=".7"><stop offset="0" stop-color="#f0f0ff"/><stop offset="1" stop-color="#b4b4f0"/></radialGradient>
<linearGradient id="gRain" x1="0" y1="0" x2="1" y2="1"><stop offset="0" stop-color="#ff0000"/><stop offset=".2" stop-color="#ffe000"/><stop offset=".4" stop-color="#00e000"/><stop offset=".6" stop-color="#00e0ff"/><stop offset=".8" stop-color="#2020ff"/><stop offset="1" stop-color="#ff00ff"/></linearGradient>
<linearGradient id="gRain2" gradientUnits="userSpaceOnUse" x1="0" y1="7" x2="22" y2="17"><stop offset="0" stop-color="#ff0000"/><stop offset=".22" stop-color="#ffe000"/><stop offset=".42" stop-color="#00e000"/><stop offset=".6" stop-color="#00e0ff"/><stop offset=".78" stop-color="#2020ff"/><stop offset="1" stop-color="#ff00ff"/></linearGradient>
<linearGradient id="gSkin" x1="0" y1="0" x2="1" y2="0"><stop offset="0" stop-color="#f0c090"/><stop offset="1" stop-color="#c88850"/></linearGradient>
<linearGradient id="gShirt" x1="0" y1="0" x2="1" y2="1"><stop offset="0" stop-color="#0c8a30"/><stop offset="1" stop-color="#20d040"/></linearGradient>
<filter id="blurw" x="-20%" y="-20%" width="140%" height="140%"><feGaussianBlur stdDeviation="1.100"/></filter><clipPath id="cw"><circle r="9.700"/></clipPath></defs>
<rect x="7" y="75" width="2" height="2" fill="#222"/><rect x="7" y="81" width="2" height="2" fill="#222"/><rect x="7" y="87" width="2" height="2" fill="#222"/><rect x="7" y="93" width="2" height="2" fill="#222"/>
<g transform="translate(17 73)"><path d="M1.500 2.500h8.500l3.500 3.500v15l-12 .2z" fill="url(#gDoc)" stroke="#a8a8b0" stroke-width=".7"/><rect x="9.3" y="12" width="2.8" height="10" fill="#2a2ad8"/><rect x="13" y="9" width="3.2" height="13" fill="#f4c800"/><rect x="13" y="9" width="1.2" height="13" fill="#e89000"/><rect x="17.3" y="13" width="3" height="9" fill="#10d010"/><path d="M8.5 20.5c3-1 4.5-7.5 6.6-7.5s3.400 6 7 7.600" fill="none" stroke="#f01010" stroke-width="1.4"/><g transform="translate(0 0) scale(1.0)"><path d="M3.200.5h3v2.900h2.900v3h-2.900v2.900h-3v-2.900h-2.900v-3h2.900z" fill="url(#gGreen)" stroke="#3a7a08" stroke-width=".7"/></g></g>
<path d="M43.9 84h5.8l-2.9 3.1z" fill="#000"/>
<g transform="translate(55 73)"><path d="M.8 3.200l.8-1.400h6l1 1.400h7.400v3h-1l-4 12.500h-10.200z" fill="url(#gFold)" stroke="#c89848" stroke-width=".5"/><path d="M9 1.700l1-1.200h6l.5 1.200v4.500h-7.500z" fill="#f0cfa0" stroke="#d0a060" stroke-width=".4"/><path d="M5.500 6.700h16.800l-5.800 12h-15.500z" fill="url(#gFold2)" stroke="#d8a040" stroke-width=".5"/><rect x="9.3" y="12" width="2.8" height="10" fill="#2a2ad8"/><rect x="13" y="9" width="3.2" height="13" fill="#f4c800"/><rect x="13" y="9" width="1.2" height="13" fill="#e89000"/><rect x="17.3" y="13" width="3" height="9" fill="#10d010"/><path d="M8.5 20.5c3-1 4.5-7.5 6.6-7.5s3.400 6 7 7.600" fill="none" stroke="#f01010" stroke-width="1.4"/></g>
<path d="M81.9 84h5.8l-2.9 3.1z" fill="#000"/>
<g transform="translate(93 73)"><path d="M.5 2.500l15.500-2.300 1.200.600v15.700l-13.400 2.200-3.300-2.800z" fill="url(#gFlop)" stroke="#30306c" stroke-width=".6"/><path d="M3.300 2.800l10.800-1.600v6.300l-10.800 1.400z" fill="#e4e4fc"/><path d="M4.300 4.400l8.800-1.200M4.300 6.300l8.800-1.200" stroke="#a8a8e0" stroke-width=".8"/><path d="M5 12.300l8-1.200v6.300l-8 1.300z" fill="#b8b8e4"/><rect x="6.300" y="13.200" width="2" height="3.600" fill="#30306c"/><rect x="12" y="11.700" width="9.300" height="9.400" fill="#fff" stroke="#34344c" stroke-width="1.400"/><path d="M15.800 12.300v8.500M15.800 16.500h5.200" stroke="#5858a0" stroke-width="1.3" fill="none"/></g>
<path d="M119.9 84h5.8l-2.9 3.1z" fill="#000"/>
<g transform="translate(131 73)"><path d="M.25 11.700l.5-6.700 2.300 2 8.500-6.700 4.200 3.300-9 5.700 3.100 2.200z" fill="url(#gGreenA)" stroke="#18901c" stroke-width=".3"/><rect x="12" y="11.700" width="9.300" height="9.400" fill="#fff" stroke="#34344c" stroke-width="1.400"/><path d="M15.800 12.300v8.500M15.800 16.500h5.200" stroke="#5858a0" stroke-width="1.3" fill="none"/></g>
<path d="M157.9 84h5.8l-2.9 3.1z" fill="#000"/>
<g transform="translate(169 73)"><path transform="translate(-1.200 .4) scale(1.010 .88)" d="M1 11.500l9-7.300-2.500-2.700 10.300-.9-1.800 10-2.600-2.800-8.200 7.300z" fill="url(#gRedA)"/><path d="M11.500 11.500v10.200M10 20.500h12" stroke="#000" stroke-width="1.200" fill="none"/><path d="M12 20c1-8 3.500-9 5-4.500s3 5.500 4.500 3.500" fill="none" stroke="#1010f0" stroke-width="1.700"/></g>
<path d="M195.9 84h5.8l-2.9 3.1z" fill="#000"/>
<g transform="translate(207 73)"><path transform="translate(-1.200 .4) scale(1.010 .88)" d="M1 11.500l9-7.300-2.500-2.700 10.300-.9-1.800 10-2.600-2.800-8.200 7.300z" fill="url(#gRedA)"/><text x="7.600" y="21.800" font-family="Liberation Sans,sans-serif" font-size="7" fill="#303030" letter-spacing=".45">PPT</text></g>
<path d="M233.9 84h5.8l-2.9 3.1z" fill="#000"/>
<rect x="246" y="67" width="1.300" height="35" fill="#8c8c8c"/>
<g transform="translate(255 73)"><g opacity=".3"><path d="M2 22q0-6 5-7.500l3.500-.5 4 .5q5 1.500 5 7.500z" fill="url(#gShirt)"/><path d="M8 14.500l2.800 4 2.700-4z" fill="#f4f4f4"/><ellipse cx="10.800" cy="8" rx="4.600" ry="5.600" fill="url(#gSkin)"/><path d="M6 7q0-6.500 5.500-6.300 4.500.3 4.300 5-3-.3-5-2.400-2.300 1.200-4.800 3.700z" fill="#6a4420"/></g></g>
<g transform="translate(283 73)"><path d="M.8 3.200l.8-1.400h6l1 1.400h7.400v3h-1l-4 12.500h-10.200z" fill="url(#gFold)" stroke="#c89848" stroke-width=".5"/><path d="M9 1.700l1-1.200h6l.5 1.200v4.500h-7.500z" fill="#f0cfa0" stroke="#d0a060" stroke-width=".4"/><path d="M5.500 6.700h16.800l-5.800 12h-15.500z" fill="url(#gFold2)" stroke="#d8a040" stroke-width=".5"/><g transform="translate(15.500 15.800)"><circle r="5.300" fill="#f0f0f2" stroke="#c0c0c6" stroke-width="2.200" stroke-dasharray="2.300 1.860"/><circle r="4.400" fill="#f4f4f6" stroke="#c8c8cc" stroke-width=".7"/><circle r="1.900" fill="#fafafa" stroke="#a8a8b0" stroke-width=".9"/></g></g>
<path d="M309.9 84h5.8l-2.9 3.1z" fill="#000"/>
<rect x="327" y="75" width="2" height="2" fill="#222"/><rect x="327" y="81" width="2" height="2" fill="#222"/><rect x="327" y="87" width="2" height="2" fill="#222"/><rect x="327" y="93" width="2" height="2" fill="#222"/>
<g transform="translate(337 73)"><path d="M4 .8l8 12.500M14.800 .8l-8 11.500" stroke="#9c9ca4" stroke-width="2.800" stroke-linecap="round"/><path d="M4 .8l8 12.500M14.800 .8l-8 11.500" stroke="#f6f6fa" stroke-width="1.300" stroke-linecap="round"/><ellipse cx="4.300" cy="14.300" rx="4.400" ry="3.700" fill="#8888cc" stroke="#6060a8" stroke-width=".6" transform="rotate(-35 4.300 14.300)"/><circle cx="3.800" cy="14.800" r="1.300" fill="#f0f0ff"/><ellipse cx="12.500" cy="13" rx="2.200" ry="2.600" fill="#8888cc"/><rect x="12" y="11.700" width="9.300" height="9.400" fill="#fff" stroke="#34344c" stroke-width="1.400"/><path d="M15.800 12.300v8.500M15.800 16.500h5.200" stroke="#5858a0" stroke-width="1.3" fill="none"/></g>
<g transform="translate(365 73)"><path d="M.5 .5h8l2.500 2.500v13h-10.500z" fill="url(#gDoc)" stroke="#9c9ca4" stroke-width=".8"/><path d="M5.500 4h8.500l3.500 3.500v12.500h-12z" fill="url(#gDoc)" stroke="#9c9ca4" stroke-width=".8"/><path d="M14 4v3.500h3.500" fill="none" stroke="#9c9ca4" stroke-width=".7"/><rect x="12" y="11.700" width="9.300" height="9.400" fill="#fff" stroke="#34344c" stroke-width="1.400"/><path d="M15.800 12.300v8.500M15.800 16.500h5.200" stroke="#5858a0" stroke-width="1.3" fill="none"/></g>
<path d="M391.9 84h5.8l-2.9 3.1z" fill="#000"/>
<g transform="translate(403 73)"><path d="M.8 2h14.500v16.500h-14.500z" fill="#e0e0f0" stroke="#d4d4e8" stroke-width=".8"/><path d="M3 4h10v12h-10z" fill="#ececf6"/><rect x="5.500" y=".5" width="5" height="2.500" rx="1" fill="#d0d0e4"/><rect x="12" y="11.700" width="9.300" height="9.400" fill="#ececf4" stroke="#c4c4d0" stroke-width="1.400"/><path d="M15.800 12.300v8.500M15.800 16.500h5.200" stroke="#c8c8d8" stroke-width="1.3" fill="none"/></g>
<path d="M429.9 84h5.8l-2.9 3.1z" fill="#b0b0b4"/>
<g transform="translate(441 73)"><path d="M1 5q6-1.500 12-4.500v14q-6 3-12 4.500z" fill="#d4d4e4"/><path d="M4 8q6-1.500 12-4.500v12q-6 3-12 4.500z" fill="#dcdcea"/><rect x="12" y="11.700" width="9.300" height="9.400" fill="#ececf4" stroke="#c4c4d0" stroke-width="1.400"/><path d="M15.800 12.300v8.500M15.800 16.500h5.200" stroke="#c8c8d8" stroke-width="1.3" fill="none"/></g>
<path d="M467.9 84h5.8l-2.9 3.1z" fill="#b0b0b4"/>
<rect x="485" y="75" width="2" height="2" fill="#222"/><rect x="485" y="81" width="2" height="2" fill="#222"/><rect x="485" y="87" width="2" height="2" fill="#222"/><rect x="485" y="93" width="2" height="2" fill="#222"/>
<g transform="translate(494 73)"><path d="M12.5 13.5l5.200 5.200" stroke="#8c8cc0" stroke-width="3.200" stroke-linecap="round"/><path d="M12.5 13.5l5 5" stroke="#c8c8f0" stroke-width="1.400" stroke-linecap="round"/><circle cx="8" cy="9" r="6.3" fill="url(#gLens)" stroke="#9898a8" stroke-width="1.800"/><circle cx="8" cy="9" r="5.0" fill="none" stroke="#d8d8e4" stroke-width=".8"/><path d="M8 5v8M4 9h8" stroke="#34344c" stroke-width=".9"/><path d="M8 4l-1.400 2h2.800zM8 14l-1.400-2h2.800zM3 9l2-1.400v2.800zM13 9l-2-1.400v2.800z" fill="#34344c"/></g>
<g transform="translate(523 73)"><path d="M.8 10.300l10.200-9.800v5.500h8.500v9h-8.500v5.500z" fill="#e4e4f0" stroke="#d8d8e8" stroke-width=".6"/></g>
<g transform="translate(551 73)"><path d="M2.500 20.500v-16" stroke="#10c010" stroke-width="2.200"/><path d="M2.500 0l-2.900 5.500h5.800z" fill="#10c010"/><path d="M3.500 19.500h15" stroke="#f01818" stroke-width="1.800"/><path d="M22.300 19.500l-5.500-2.600v5.200z" fill="#f01818"/><text x="7.8" y="7.3" font-family="Liberation Sans,sans-serif" font-weight="bold" font-size="8.6" fill="#383838">Y</text><text x="15.8" y="15.3" font-family="Liberation Sans,sans-serif" font-weight="bold" font-size="8.6" fill="#383838">X</text></g>
<g transform="translate(579 73)"><path d="M3.500 2.500h15" stroke="#f01818" stroke-width="1.800"/><path d="M22.300 2.500l-5.500-2.600v5.200z" fill="#f01818"/><path d="M4 4v14" stroke="#10c010" stroke-width="2.200"/><path d="M4 22.300l-2.900-5.500h5.800z" fill="#10c010"/><text x="16" y="13.8" font-family="Liberation Sans,sans-serif" font-weight="bold" font-size="8.6" fill="#383838">X</text><text x="8.3" y="21.3" font-family="Liberation Sans,sans-serif" font-weight="bold" font-size="8.6" fill="#383838">Y</text></g>
<g transform="translate(607 73)"><path d="M2.500 20.500v-16" stroke="#2828f0" stroke-width="2.200"/><path d="M2.500 0l-2.900 5.500h5.800z" fill="#2828f0"/><path d="M3.500 19.500h15" stroke="#f01818" stroke-width="1.800"/><path d="M22.300 19.500l-5.500-2.600v5.200z" fill="#f01818"/><text x="7.8" y="7.3" font-family="Liberation Sans,sans-serif" font-weight="bold" font-size="8.6" fill="#383838">Z</text><text x="15.8" y="15.3" font-family="Liberation Sans,sans-serif" font-weight="bold" font-size="8.6" fill="#383838">X</text></g>
<g transform="translate(635 73)"><path d="M19.500 20.500v-16" stroke="#2828f0" stroke-width="2.200"/><path d="M19.500 0l-2.900 5.500h5.800z" fill="#2828f0"/><path d="M18.500 19.500h-15" stroke="#f01818" stroke-width="1.800"/><path d="M-.3 19.500l5.500-2.600v5.200z" fill="#f01818"/><text x="8.8" y="7.3" font-family="Liberation Sans,sans-serif" font-weight="bold" font-size="8.6" fill="#383838">Z</text><text x="0.5" y="15.3" font-family="Liberation Sans,sans-serif" font-weight="bold" font-size="8.6" fill="#383838">X</text></g>
<g transform="translate(663 73)"><path d="M2.500 20.500v-16" stroke="#2828f0" stroke-width="2.200"/><path d="M2.500 0l-2.900 5.500h5.800z" fill="#2828f0"/><path d="M3.500 19.500h15" stroke="#10c010" stroke-width="1.800"/><path d="M22.300 19.500l-5.500-2.600v5.200z" fill="#10c010"/><text x="7.8" y="7.3" font-family="Liberation Sans,sans-serif" font-weight="bold" font-size="8.6" fill="#383838">Z</text><text x="15.8" y="15.3" font-family="Liberation Sans,sans-serif" font-weight="bold" font-size="8.6" fill="#383838">Y</text></g>
<g transform="translate(691 73)"><path d="M19.500 20.500v-16" stroke="#2828f0" stroke-width="2.200"/><path d="M19.500 0l-2.900 5.500h5.800z" fill="#2828f0"/><path d="M18.500 19.500h-15" stroke="#10c010" stroke-width="1.800"/><path d="M-.3 19.500l5.500-2.600v5.200z" fill="#10c010"/><text x="8.8" y="7.3" font-family="Liberation Sans,sans-serif" font-weight="bold" font-size="8.6" fill="#383838">Z</text><text x="0.5" y="15.3" font-family="Liberation Sans,sans-serif" font-weight="bold" font-size="8.6" fill="#383838">Y</text></g>
<g transform="translate(719 73)"><path d="M11.500 22v-10" stroke="#2828f0" stroke-width="2"/><path d="M11.500 8l-2.400 5h4.800z" fill="#2828f0"/><path d="M11.500 22l-8-5.500" stroke="#10c010" stroke-width="2"/><path d="M.5 14.300l5.600.6-2.600 3.800z" fill="#10c010"/><path d="M11.500 22l8-5" stroke="#f01818" stroke-width="2"/><path d="M22.500 14.800l-5.600.5 2.500 3.900z" fill="#f01818"/><text x="0.5" y="11.5" font-family="Liberation Sans,sans-serif" font-weight="bold" font-size="9" fill="#383838">Y</text><text x="8.8" y="7.5" font-family="Liberation Sans,sans-serif" font-weight="bold" font-size="9" fill="#383838">Z</text><text x="16.5" y="11.5" font-family="Liberation Sans,sans-serif" font-weight="bold" font-size="9" fill="#383838">X</text></g>
<g transform="translate(747 73)"><path d="M1 2l12.500 3v10l-12.500 3z" fill="url(#gMon)" stroke="#505058" stroke-width="1.200"/><path d="M19.500 13.500q.5 6-6 7l.5-2.300-4.500 1.300 5.500 3.800.3-1.800q7-1 4.200-8z" fill="#f01010" stroke="#b00000" stroke-width=".4"/></g>
<g transform="translate(775 73)"><rect x=".8" y="1" width="17.500" height="12.500" fill="url(#gMon)" stroke="#4c4c58" stroke-width="1.300"/><g transform="translate(-1.5 2.5)" ><g><path d="M2 22q0-6 5-7.500l3.500-.5 4 .5q5 1.500 5 7.500z" fill="url(#gShirt)"/><path d="M8 14.500l2.800 4 2.700-4z" fill="#f4f4f4"/><ellipse cx="10.800" cy="8" rx="4.600" ry="5.600" fill="url(#gSkin)"/><path d="M6 7q0-6.500 5.500-6.300 4.500.3 4.300 5-3-.3-5-2.400-2.300 1.200-4.800 3.700z" fill="#6a4420"/></g></g><text x="16.500" y="22" font-family="Liberation Sans,sans-serif" font-weight="bold" font-size="7.500" fill="#3c3c3c">1</text></g>
<path d="M801.9 84h5.8l-2.9 3.1z" fill="#000"/>
<rect x="819" y="75" width="2" height="2" fill="#222"/><rect x="819" y="81" width="2" height="2" fill="#222"/><rect x="819" y="87" width="2" height="2" fill="#222"/><rect x="819" y="93" width="2" height="2" fill="#222"/>
<g transform="translate(829 73)"><path d="M.8 3.200l.8-1.400h6l1 1.400h7.400v3h-1l-4 12.500h-10.200z" fill="url(#gFold)" stroke="#c89848" stroke-width=".5"/><path d="M9 1.700l1-1.200h6l.5 1.200v4.500h-7.500z" fill="#f0cfa0" stroke="#d0a060" stroke-width=".4"/><path d="M5.500 6.700h16.800l-5.800 12h-15.500z" fill="url(#gFold2)" stroke="#d8a040" stroke-width=".5"/><rect x="12" y="11.700" width="9.300" height="9.400" fill="#fff" stroke="#34344c" stroke-width="1.400"/><path d="M13.300 16.500l1.800-1.800 1.900 3.500 1.500-2.500 2 .4" stroke="#e00000" stroke-width="1.3" fill="none"/></g>
<g transform="translate(857 73)"><path d="M.5 2.500l15.500-2.300 1.200.600v15.700l-13.400 2.200-3.300-2.800z" fill="url(#gFlop)" stroke="#30306c" stroke-width=".6"/><path d="M3.300 2.800l10.800-1.600v6.300l-10.800 1.400z" fill="#e4e4fc"/><path d="M4.300 4.400l8.800-1.200M4.300 6.300l8.800-1.200" stroke="#a8a8e0" stroke-width=".8"/><path d="M5 12.300l8-1.200v6.300l-8 1.300z" fill="#b8b8e4"/><rect x="6.300" y="13.200" width="2" height="3.600" fill="#30306c"/><rect x="12" y="11.700" width="9.300" height="9.400" fill="#fff" stroke="#34344c" stroke-width="1.400"/><path d="M13.300 16.500l1.800-1.800 1.900 3.500 1.500-2.500 2 .4" stroke="#e00000" stroke-width="1.3" fill="none"/></g>
<g transform="translate(885 73)"><rect x="1.500" y="1.700" width="19.500" height="19.500" fill="#fff" stroke="url(#gFrame)" stroke-width="2.200"/><rect x=".5" y=".7" width="21.500" height="21.500" fill="none" stroke="#34344c" stroke-width=".9"/><path d="M4 12l2.500-1 2.500-5 2 1.500 2 9.500 2.500-5 3-.5" fill="none" stroke="#f01818" stroke-width="1.400"/></g>
<rect x="919" y="75" width="2" height="2" fill="#222"/><rect x="919" y="81" width="2" height="2" fill="#222"/><rect x="919" y="87" width="2" height="2" fill="#222"/><rect x="919" y="93" width="2" height="2" fill="#222"/>
<g transform="translate(929 73)"><path d="M15.0 15.0l5.200 5.200" stroke="#8c8cc0" stroke-width="3.200" stroke-linecap="round"/><path d="M15.0 15.0l5 5" stroke="#c8c8f0" stroke-width="1.400" stroke-linecap="round"/><circle cx="10.5" cy="10.5" r="6.5" fill="url(#gLens)" stroke="#9898a8" stroke-width="1.800"/><circle cx="10.5" cy="10.5" r="5.2" fill="none" stroke="#d8d8e4" stroke-width=".8"/><path d="M15 1.800h6" stroke="#000" stroke-width="1.700"/><path d="M0 19.500h6M3 16.500v6" stroke="#000" stroke-width="1.700"/></g>
<g transform="translate(957 73)"><ellipse cx="10.500" cy="11" rx="11.300" ry="9" fill="none" stroke="#16161c" stroke-width="1.200" stroke-dasharray="1.300 1.700" transform="rotate(-38 10.500 11)"/><path d="M15.0 15.0l5.200 5.200" stroke="#8c8cc0" stroke-width="3.200" stroke-linecap="round"/><path d="M15.0 15.0l5 5" stroke="#c8c8f0" stroke-width="1.400" stroke-linecap="round"/><circle cx="10.5" cy="10.5" r="6.5" fill="url(#gLens)" stroke="#9898a8" stroke-width="1.800"/><circle cx="10.5" cy="10.5" r="5.2" fill="none" stroke="#d8d8e4" stroke-width=".8"/></g>
<g transform="translate(985 73)"><path d="M9.500 1l-2.600 4.600 2 .2-.6 4.300-4.300.3.200-2-4 2.800 4.400 2.200-.2-1.500 4 .1-.6 5-2-.3 3 4.600 2.200-4.600-2 .2.500-5 5 .2-.3 1.600 4.600-2.600-4.300-2.400.2 1.700-5.100-.1.500-4.400 2 .2z" fill="#6a6a9c" stroke="#50507c" stroke-width=".3"/></g>
<g transform="translate(1013 73)"><path d="M7.500 21.500q-2-3-4-6.500-2-3.500-2.500-5.500.8-1.400 2.200-.3l2.300 3.800-1-8.500q1.300-1.500 2.500 0l1.200 6-.2-8.500q1.500-1.500 2.800 0l.6 8.200 1-7.200q1.500-1.200 2.600.2l-.4 8 1.800-4.800q1.600-.8 2.300.6-1 4.500-1.500 8-.4 3-2.200 6.500z" fill="#fff" stroke="#78787c" stroke-width="1.200" stroke-linejoin="round"/></g>
<g transform="translate(1041 73)"><path d="M0 11l6.500-4.800v3h9v-3.200l7 5-7 5v-3.200h-9v3z" fill="url(#gBluH)" stroke="#6868a8" stroke-width=".3"/></g>
<g transform="translate(1069 73)"><path d="M11 0l4.800 6.500h-3v9h3.200l-5 7-5-7h3.200v-9h-3z" fill="url(#gBlu)" stroke="#6868a8" stroke-width=".3"/></g>
<g transform="translate(1097 73)"><path d="M9.300 .3v5.200q-2.800 5.500 0 11.500v5.200l-7.300-5 2.300-.7q-3.500-5.500.2-11.200l-2.200-.8z" fill="url(#gBlu)" stroke="#50508c" stroke-width=".4"/><path d="M12.200 .3l7.300 5-2.300.7q3.500 5.500-.2 11.200l2.200.8-7 4.200v-5.200q2.800-6 0-11.500z" fill="url(#gBluH)" stroke="#50508c" stroke-width=".4"/></g>
<rect x="1131" y="75" width="2" height="2" fill="#222"/><rect x="1131" y="81" width="2" height="2" fill="#222"/><rect x="1131" y="87" width="2" height="2" fill="#222"/><rect x="1131" y="93" width="2" height="2" fill="#222"/>
<g transform="translate(1141 73)"><path d="M4.500 3.500q0-2 2-2h12.500q2.500 0 2.500 2.500v7q0 2-2 2h-13q-2 0-2-2z" fill="url(#gCam)" stroke="#7070a8" stroke-width=".6"/><path d="M6 1.800l1-1.200h4.500l1 1.200z" fill="#a8a8d4"/><rect x="7" y="4" width="2.600" height="1.300" rx=".5" fill="#f0f0ff"/><circle cx="16.300" cy="8" r="3.600" fill="#5c5c98"/><circle cx="16.300" cy="8" r="2.300" fill="#c0b8ff"/><g transform="translate(0 10) scale(.62)"><path d="M.5 2.500l15.500-2.300 1.200.600v15.700l-13.400 2.200-3.300-2.800z" fill="url(#gFlop)" stroke="#30306c" stroke-width=".6"/><path d="M3.300 2.800l10.800-1.600v6.300l-10.800 1.400z" fill="#e4e4fc"/><path d="M4.300 4.400l8.800-1.200M4.300 6.300l8.800-1.200" stroke="#a8a8e0" stroke-width=".8"/><path d="M5 12.300l8-1.200v6.300l-8 1.300z" fill="#b8b8e4"/><rect x="6.300" y="13.200" width="2" height="3.600" fill="#30306c"/></g></g>
<g transform="translate(1169 73)"><path d="M4.500 3.500q0-2 2-2h12.500q2.500 0 2.500 2.500v7q0 2-2 2h-13q-2 0-2-2z" fill="url(#gCam)" stroke="#7070a8" stroke-width=".6"/><path d="M6 1.800l1-1.200h4.500l1 1.200z" fill="#a8a8d4"/><rect x="7" y="4" width="2.600" height="1.300" rx=".5" fill="#f0f0ff"/><circle cx="16.300" cy="8" r="3.600" fill="#5c5c98"/><circle cx="16.300" cy="8" r="2.300" fill="#c0b8ff"/><rect x="0.7" y="9.7" width="15" height="11.8" fill="#d4dce8" stroke="#1c1c24" stroke-width="1.300"/></g>
<g transform="translate(1197 73)"><path d="M4.500 3.500q0-2 2-2h12.500q2.500 0 2.500 2.500v7q0 2-2 2h-13q-2 0-2-2z" fill="url(#gCam)" stroke="#7070a8" stroke-width=".6"/><path d="M6 1.800l1-1.200h4.500l1 1.200z" fill="#a8a8d4"/><rect x="7" y="4" width="2.600" height="1.300" rx=".5" fill="#f0f0ff"/><circle cx="16.300" cy="8" r="3.600" fill="#5c5c98"/><circle cx="16.300" cy="8" r="2.300" fill="#c0b8ff"/><rect x=".8" y="15.700" width="14" height="5.800" fill="#d4d4d8" stroke="#1c1c24" stroke-width="1.200"/><path d="M2.500 17.700h9M2.500 19.700h9" stroke="#fff" stroke-width="1"/></g>
<g transform="translate(1225 73)"><path d="M4.500 3.500q0-2 2-2h12.500q2.500 0 2.500 2.500v7q0 2-2 2h-13q-2 0-2-2z" fill="url(#gCam)" stroke="#7070a8" stroke-width=".6"/><path d="M6 1.800l1-1.200h4.500l1 1.200z" fill="#a8a8d4"/><rect x="7" y="4" width="2.600" height="1.300" rx=".5" fill="#f0f0ff"/><circle cx="16.300" cy="8" r="3.600" fill="#5c5c98"/><circle cx="16.300" cy="8" r="2.300" fill="#c0b8ff"/><rect x="0.7" y="9.7" width="15" height="11.8" fill="none" stroke="#16161c" stroke-width="1.300" stroke-dasharray="2.400 1.800"/></g>
<g transform="translate(1253 73)"><path d="M4.500 3.500q0-2 2-2h12.500q2.500 0 2.500 2.500v7q0 2-2 2h-13q-2 0-2-2z" fill="url(#gCam)" stroke="#7070a8" stroke-width=".6"/><path d="M6 1.800l1-1.200h4.500l1 1.200z" fill="#a8a8d4"/><rect x="7" y="4" width="2.600" height="1.300" rx=".5" fill="#f0f0ff"/><circle cx="16.300" cy="8" r="3.600" fill="#5c5c98"/><circle cx="16.300" cy="8" r="2.300" fill="#c0b8ff"/><rect x="0.7" y="9.7" width="15" height="11.8" fill="#e4e8f4" stroke="#1c1c24" stroke-width="1.300"/><rect x="4" y="13" width="8.500" height="5.500" fill="#8494d0" stroke="#000" stroke-width="1.200"/></g>
<g transform="translate(1281 73)"><path d="M4 0h7v2h-7z" fill="#c4c4e0" stroke="#7878b0" stroke-width=".5"/><path d="M1.500 2.500h11.500q1.500 0 1.500 1.500v7.500h-13z" fill="url(#gCam)" stroke="#7070a8" stroke-width=".5"/><rect x="6.500" y="6" width="5" height="2" rx=".6" fill="#d8d8f4" stroke="#7070a8" stroke-width=".4"/><path d="M14.500 5.500h2.500l4-2.500q1 0 1 1v8q0 1-1 1l-4-2.500h-2.500z" fill="url(#gCam)" stroke="#7878b0" stroke-width=".5"/><rect x="0.7" y="9.7" width="15" height="11.8" fill="#d4dce8" stroke="#1c1c24" stroke-width="1.300"/></g>
<g transform="translate(1309 73)"><path d="M4 0h7v2h-7z" fill="#c4c4e0" stroke="#7878b0" stroke-width=".5"/><path d="M1.500 2.500h11.500q1.500 0 1.500 1.500v7.500h-13z" fill="url(#gCam)" stroke="#7070a8" stroke-width=".5"/><rect x="6.500" y="6" width="5" height="2" rx=".6" fill="#d8d8f4" stroke="#7070a8" stroke-width=".4"/><path d="M14.500 5.500h2.500l4-2.500q1 0 1 1v8q0 1-1 1l-4-2.500h-2.500z" fill="url(#gCam)" stroke="#7878b0" stroke-width=".5"/><rect x="0.7" y="9.7" width="15" height="11.8" fill="none" stroke="#16161c" stroke-width="1.300" stroke-dasharray="2.400 1.800"/></g>
<rect x="1343" y="75" width="2" height="2" fill="#222"/><rect x="1343" y="81" width="2" height="2" fill="#222"/><rect x="1343" y="87" width="2" height="2" fill="#222"/><rect x="1343" y="93" width="2" height="2" fill="#222"/>
<g transform="translate(1353 73)"><rect x="2.300" y="3.100" width="18.500" height="17.300" fill="#fff" stroke="url(#gFrame)" stroke-width="2.400"/><path d="M1.100 2.200h21v19.200" fill="none" stroke="#34344c" stroke-width=".9"/><path d="M11.500 4v16M3.500 11.800h16.500" stroke="#8080c0" stroke-width="1.200"/><path d="M1.100 21.500h21" stroke="#34344c" stroke-width="1.100"/><g transform="translate(0 -0.5) scale(1.25)"><path d="M3.200.5h3v2.900h2.900v3h-2.900v2.900h-3v-2.900h-2.900v-3h2.900z" fill="url(#gGreen)" stroke="#3a7a08" stroke-width=".7"/></g></g>
<g transform="translate(1381 73)"><rect x="2.300" y="3.100" width="18.500" height="17.300" fill="#fff" stroke="url(#gFrame)" stroke-width="2.400"/><path d="M1.100 2.200h21v19.200" fill="none" stroke="#34344c" stroke-width=".9"/><path d="M11.500 4v16M3.500 11.800h16.500" stroke="#8080c0" stroke-width="1.200"/><path d="M1.100 21.500h21" stroke="#34344c" stroke-width="1.100"/><path d="M1.500 1.500l7.500 7.500M9 1.500l-7.500 7.500" stroke="#b01018" stroke-width="4.200" stroke-linecap="round"/><path d="M1.500 1.500l7.500 7.500M9 1.500l-7.500 7.500" stroke="#f03038" stroke-width="2.800" stroke-linecap="round"/></g>
<g transform="translate(1409 73)"><rect x="1.500" y="2" width="18.500" height="18.500" fill="#fff" stroke="url(#gFrame)" stroke-width="2.400"/><rect x=".4" y=".9" width="20.700" height="20.700" fill="none" stroke="#34344c" stroke-width=".9"/></g>
<path d="M1435.9 84h5.8l-2.9 3.1z" fill="#000"/>
<g transform="translate(1448 73)"><rect x=".5" y="1" width="20.500" height="20.500" fill="#dcdce8" stroke="#d0d0dc" stroke-width="1"/><rect x="11.500" y="4.500" width="6" height="5.500" fill="#d0d0e0"/><path d="M11 7.500h-5M14 10v6" stroke="#f4f4f8" stroke-width="1.200"/><path d="M5 7.500l3-2.200v4.400zM14 17.500l-2.200-3h4.400z" fill="#f4f4f8"/></g>
<g transform="translate(1476 73)"><rect x=".5" y="1" width="20.500" height="20.500" fill="#dcdce8" stroke="#d0d0dc" stroke-width="1"/><rect x="2.500" y="3.500" width="7" height="15.500" fill="#e8e8f0"/><path d="M10.500 11h5" stroke="#f4f4f8" stroke-width="1.200"/><path d="M17.500 11l-3-2.200v4.400z" fill="#f4f4f8"/></g>
<g transform="translate(1503 73)"><rect x="2.300" y="3.100" width="18.500" height="17.300" fill="#fff" stroke="url(#gFrame)" stroke-width="2.400"/><path d="M1.100 2.200h21v19.200" fill="none" stroke="#34344c" stroke-width=".9"/><path d="M11.500 4v16M3.500 11.800h16.500" stroke="#8080c0" stroke-width="1.200"/><path d="M1.100 21.500h21" stroke="#34344c" stroke-width="1.100"/><path d="M2.500 8q-.5-7 6.500-7t6 7q-.5 3.500-4 3.500v-3q1.500-.3 1.500-2.500t-3-2.500q-3.500 0-3.500 4.500h2.500l-4.500 4.500-4-4.500z" fill="#a0a0a4" stroke="#58585c" stroke-width=".7"/></g>
<rect x="541" y="625" width="2" height="2" fill="#222"/><rect x="541" y="631" width="2" height="2" fill="#222"/><rect x="541" y="637" width="2" height="2" fill="#222"/><rect x="541" y="643" width="2" height="2" fill="#222"/>
<g transform="translate(551 624)"><path d="M1 6.500l4-3.500 2.500 1 3.500-3.500 3 3 2.500-.5 4.500 4v11.500l-2 1-2.500-1.500-2 2-3-1.500-2 2.500-8.500-5z" fill="url(#gRain2)" stroke="#404048" stroke-width=".7" stroke-linejoin="round"/><path d="M10 21v-11l3-3M15.500 19v-10.500l3-2.500" fill="none" stroke="#404048" stroke-width=".6"/></g>
<path d="M577.9 635h5.8l-2.9 3.1z" fill="#000"/>
<rect x="595" y="625" width="2" height="2" fill="#222"/><rect x="595" y="631" width="2" height="2" fill="#222"/><rect x="595" y="637" width="2" height="2" fill="#222"/><rect x="595" y="643" width="2" height="2" fill="#222"/>
<g transform="translate(605 624)"><path d="M.5 13.500l13-4 8.500 5-13 6.500z" fill="#fafafa" stroke="#b4b4b4" stroke-width=".8"/><path d="M2.500 13.800v-7l2.500 5.500 3-8 6.500 13-2 1zM9 11.500l2-8 3 5.500 2-5 3.500 9-2 1z" fill="#7c7cb4" stroke="#484868" stroke-width=".5"/><g transform="translate(11.5 -0.5) scale(1.05)"><path d="M3.200.5h3v2.900h2.900v3h-2.900v2.900h-3v-2.900h-2.900v-3h2.900z" fill="url(#gGreen)" stroke="#3a7a08" stroke-width=".7"/></g></g>
<g transform="translate(633 624)"><path d="M.5 13.500l13-4 8.500 5-13 6.500z" fill="#fafafa" stroke="#b4b4b4" stroke-width=".8"/><path d="M2.500 14v-8.500l3 6 4.500 9-1.500.8z" fill="#f01010"/><path d="M7 11.500l2-7.500 3 6 3 7-2 1z" fill="#10b840"/><path d="M11.500 9.500l2.500-7 3 5.500 3 8-2 1z" fill="#1010e0"/></g>
<g transform="translate(661 624)"><path d="M14 6.500l3-2 4.500 4.500-4 2.500z" fill="#f01010"/><path d="M5.500 1l10 6.500v13.500l-10-6.500z" fill="#c4e4fc" stroke="#8c9cac" stroke-width=".7" opacity=".9"/><path d="M1 13l7.500-5.500 4 2.500-6.500 7.500z" fill="url(#gRain)" stroke="#404048" stroke-width=".5"/></g>
<g transform="translate(689 624)"><path d="M.5 13.500l13-4 8.500 5-13 6.500z" fill="#fafafa" stroke="#b4b4b4" stroke-width=".8"/><path d="M3 12.500v-6l2.500 3.500 2-6 2 4 2-5 2.500 4.500 2-2.500 3.500 9-12 5.500z" fill="#10c040" stroke="#208838" stroke-width=".4"/><path d="M4 14l5 5.500M9 12.500l5 5M14 11l4 4" stroke="#1840e0" stroke-width="1.300"/><path d="M5 17l3-6 3 5 3-6 3 5" fill="none" stroke="#fafafa" stroke-width="1.600"/><path d="M3 7.500q5-6 12-4M7.500 12.500q4-5 11-4.500" fill="none" stroke="#f01010" stroke-width="1.300"/></g>
<g transform="translate(738 635)"><g clip-path="url(#cw)"><g filter="url(#blurw)"><path d="M0 0L-2.67 -9.22A9.6 9.6 0 0 1 2.67 -9.22Z" fill="#00ffff"/><path d="M0 0L2.30 -9.32A9.6 9.6 0 0 1 6.92 -6.65Z" fill="#00ff80"/><path d="M0 0L6.65 -6.92A9.6 9.6 0 0 1 9.32 -2.30Z" fill="#00ff00"/><path d="M0 0L9.22 -2.67A9.6 9.6 0 0 1 9.22 2.67Z" fill="#80ff00"/><path d="M0 0L9.32 2.30A9.6 9.6 0 0 1 6.65 6.92Z" fill="#ffff00"/><path d="M0 0L6.92 6.65A9.6 9.6 0 0 1 2.30 9.32Z" fill="#ff8000"/><path d="M0 0L2.67 9.22A9.6 9.6 0 0 1 -2.67 9.22Z" fill="#ff0000"/><path d="M0 0L-2.30 9.32A9.6 9.6 0 0 1 -6.92 6.65Z" fill="#ff0080"/><path d="M0 0L-6.65 6.92A9.6 9.6 0 0 1 -9.32 2.30Z" fill="#ff00ff"/><path d="M0 0L-9.22 2.67A9.6 9.6 0 0 1 -9.22 -2.67Z" fill="#8000ff"/><path d="M0 0L-9.32 -2.30A9.6 9.6 0 0 1 -6.65 -6.92Z" fill="#0000ff"/><path d="M0 0L-6.92 -6.65A9.6 9.6 0 0 1 -2.30 -9.32Z" fill="#0080ff"/></g></g><circle r="9.700" fill="none" stroke="#686868" stroke-width=".9"/></g>
<g transform="translate(755 624)"><path d="M2 1v21M6.500 1v21M15.500 1v21M20 1v21M0 3h22M0 7.500h22M0 16.500h22M0 20.500h22" stroke="#cfcfcf" stroke-width="1.100"/><path d="M11 0v22.500M0 11.500h22" stroke="#000" stroke-width="1.400"/><path d="M1.500 5.500c6-1 6.500 3.500 9.500 6s4 7.500 10 7" fill="none" stroke="#f01010" stroke-width="1.400"/><circle cx="11" cy="11.500" r="2.400" fill="#50508c"/><circle cx="10.400" cy="10.800" r=".9" fill="#c8c8f0"/></g>
<rect x="789" y="625" width="2" height="2" fill="#222"/><rect x="789" y="631" width="2" height="2" fill="#222"/><rect x="789" y="637" width="2" height="2" fill="#222"/><rect x="789" y="643" width="2" height="2" fill="#222"/>
<g transform="translate(799 624)"><path d="M10.500 0v13l-10 5M10.500 13l10.500 5" stroke="#50609c" stroke-width="1.200" fill="none"/><path d="M10.500 13l-9.500 4.500 10 5 10-5z" fill="#c8d0f8" opacity=".8"/><path d="M10.500 1.500l-9 4.500v11.500M10.500 1.500l9.500 4.500v11.500" fill="#dce0fc" opacity=".5"/><path d="M3 5.500v11M5.500 4v11.500M8 3v11M13 3v11M15.500 4v11.500M18 5.500v11M1 9l9.500-4.500 10 4.500M1 12l9.500-4.500 10 4.500M1 15l9.500-4.500 10 4.500M3.500 18.700l10-5M6 20l10-5M8.500 21.200l10-5M17.500 18.700l-10-5M15 20l-10-5M12.500 21.200l-10-5" stroke="#5878d8" stroke-width=".8" fill="none"/></g>
<g transform="translate(827 624)"><path d="M11 2.500q10 0 10 7t-9 7q-1.500 0-2.800-.3l-2.200 3.800-1.800-.3 1-4.200q-5-1.500-5-6 0-7 9.800-7z" fill="#b8b8b8" stroke="#909090" stroke-width=".8"/><path d="M5 7h6M12.500 7h5M4 10h8M13.500 10h5M6 13h2.500M10 13h7" stroke="#585858" stroke-width="1.200"/></g>
<rect x="861" y="625" width="2" height="2" fill="#222"/><rect x="861" y="631" width="2" height="2" fill="#222"/><rect x="861" y="637" width="2" height="2" fill="#222"/><rect x="861" y="643" width="2" height="2" fill="#222"/>
<g transform="translate(882 635)"><circle r="10.900" fill="url(#gBtn)"/><circle r="10.600" fill="none" stroke="#4c4c94" stroke-width=".6" opacity=".6"/><path d="M-6 -3.500h12.500l-1 1.800h-11.500zM-5.500 4l9.500-5" stroke="#fff" stroke-width="1.200" fill="#fff"/><path d="M-5.500 0v3.500" stroke="#fff" stroke-width="1" stroke-dasharray="1 1"/></g>
<path d="M897.9 635h5.8l-2.9 3.1z" fill="#000"/>
<g transform="translate(920 635)"><circle r="10.900" fill="url(#gBtn)"/><circle r="10.600" fill="none" stroke="#4c4c94" stroke-width=".6" opacity=".6"/><path d="M-4.500 -5.500h2.400v11h-2.400zM5 -5.500v11l-7-5.500z" fill="#fff"/></g>
<g transform="translate(948 635)"><circle r="10.900" fill="url(#gBtn)"/><circle r="10.600" fill="none" stroke="#4c4c94" stroke-width=".6" opacity=".6"/><path d="M-.5 -5v10l-6.500-5zM6 -5v10l-6.500-5z" fill="#fff"/></g>
<g transform="translate(976 635)"><circle r="10.900" fill="url(#gBtn)"/><circle r="10.600" fill="none" stroke="#4c4c94" stroke-width=".6" opacity=".6"/><path d="M-3.500 -5.800v11.600l8.500-5.800z" fill="#fff"/></g>
<g transform="translate(1004 635)"><circle r="10.900" fill="url(#gBtn)"/><circle r="10.600" fill="none" stroke="#4c4c94" stroke-width=".6" opacity=".6"/><path d="M.5 -5v10l6.500-5zM-6 -5v10l6.500-5z" fill="#fff"/></g>
<g transform="translate(1032 635)"><circle r="10.900" fill="url(#gBtn)"/><circle r="10.600" fill="none" stroke="#4c4c94" stroke-width=".6" opacity=".6"/><path d="M4.500 -5.500h-2.400v11h2.400zM-5 -5.500v11l7-5.500z" fill="#fff"/></g>
<g transform="translate(1302 635)"><circle r="10.900" fill="url(#gBtn)"/><circle r="10.600" fill="none" stroke="#4c4c94" stroke-width=".6" opacity=".6"/><rect x="-1.500" y="-7.200" width="3" height="4" rx=".6" fill="#fff" transform="rotate(0)"/><rect x="-1.500" y="-7.200" width="3" height="4" rx=".6" fill="#fff" transform="rotate(45)"/><rect x="-1.500" y="-7.200" width="3" height="4" rx=".6" fill="#fff" transform="rotate(90)"/><rect x="-1.500" y="-7.200" width="3" height="4" rx=".6" fill="#fff" transform="rotate(135)"/><rect x="-1.500" y="-7.200" width="3" height="4" rx=".6" fill="#fff" transform="rotate(180)"/><rect x="-1.500" y="-7.200" width="3" height="4" rx=".6" fill="#fff" transform="rotate(225)"/><rect x="-1.500" y="-7.200" width="3" height="4" rx=".6" fill="#fff" transform="rotate(270)"/><rect x="-1.500" y="-7.200" width="3" height="4" rx=".6" fill="#fff" transform="rotate(315)"/><circle r="4.900" fill="#fff"/><circle r="2.100" fill="#5858a4"/></g>
<rect x="1047" y="624" width="239.500" height="13" fill="#c8c8c8"/><path d="M1047 637.500v-13.500h239.500" fill="none" stroke="#a0a0a0" stroke-width="1"/><path d="M1047 638h240v-14" fill="none" stroke="#fff" stroke-width="1"/>
<rect x="1048" y="625" width="30" height="12" fill="#f0f0f0"/><path d="M1048.500 636.500v-11h29" fill="none" stroke="#fff" stroke-width="1.600"/><path d="M1047.500 637h30.500v-12.500" fill="none" stroke="#000" stroke-width="1.800"/><path d="M1062.500 625.500v11" stroke="#000" stroke-width="1"/><path d="M1063.500 625.500v10.500" stroke="#fff" stroke-width="1"/>
<rect x="1047" y="640" width="239.500" height="7.500" fill="#c8c8c8"/><path d="M1047 647.500v-7h239.500" fill="none" stroke="#999" stroke-width="1"/><path d="M1047 648h240v-8" fill="none" stroke="#fff" stroke-width="1"/>
<rect x="1256" y="641" width="30" height="6" fill="#f0f0f0"/><path d="M1256.500 646v-4.500h29" fill="none" stroke="#fff" stroke-width="1.400"/><path d="M1255.500 647h30.500v-6" fill="none" stroke="#000" stroke-width="1.600"/><path d="M1270.500 642v4.500" stroke="#000" stroke-width="1"/>
<g transform="translate(540 155)"><path d="M2.500 7q8-1 16-7v11q-8 6-16 7z" fill="#d4d4dc" stroke="#c0c0cc" stroke-width=".5"/><path d="M2.500 12.500q8-1 16-7M7.500 6v11M13 3.500v11" stroke="#b4b4c0" stroke-width=".6" fill="none"/><rect x=".5" y="9.500" width="11.500" height="12" fill="#f0f0f0" fill-opacity=".6" stroke="#f4b4a8" stroke-width=".9"/><path d="M.5 15.500h11.500M6.200 9.500v12" stroke="#d8d0d0" stroke-width=".6"/></g></svg>
<div class="badge" style="left:436.4px;top:0.8px"><span>1</span></div>
<div class="badge" style="left:581.2px;top:25.8px"><span>2</span></div>
<div class="badge" style="left:837.8px;top:595.7px"><span>3</span></div>
<div class="badge" style="left:157.8px;top:104.7px"><span>4</span></div>
<div class="badge" style="left:1670.8px;top:327.7px"><span>5</span></div>
<div class="badge" style="left:1704.8px;top:60.8px"><span>6</span></div>
<div class="badge" style="left:350.8px;top:305.7px"><span>7</span></div>
<div class="badge" style="left:334.8px;top:871.7px"><span>8</span></div>
<div class="badge" style="left:1191.9px;top:962.8px"><span>9</span></div>
<div class="badge" style="left:1416.8px;top:722.8px"><span style="transform:scaleX(.9);font-size:17px">10</span></div>
<div class="badge" style="left:65.8px;top:1044.7px"><span style="transform:scaleX(.9);font-size:17px">11</span></div>
</body></html>
